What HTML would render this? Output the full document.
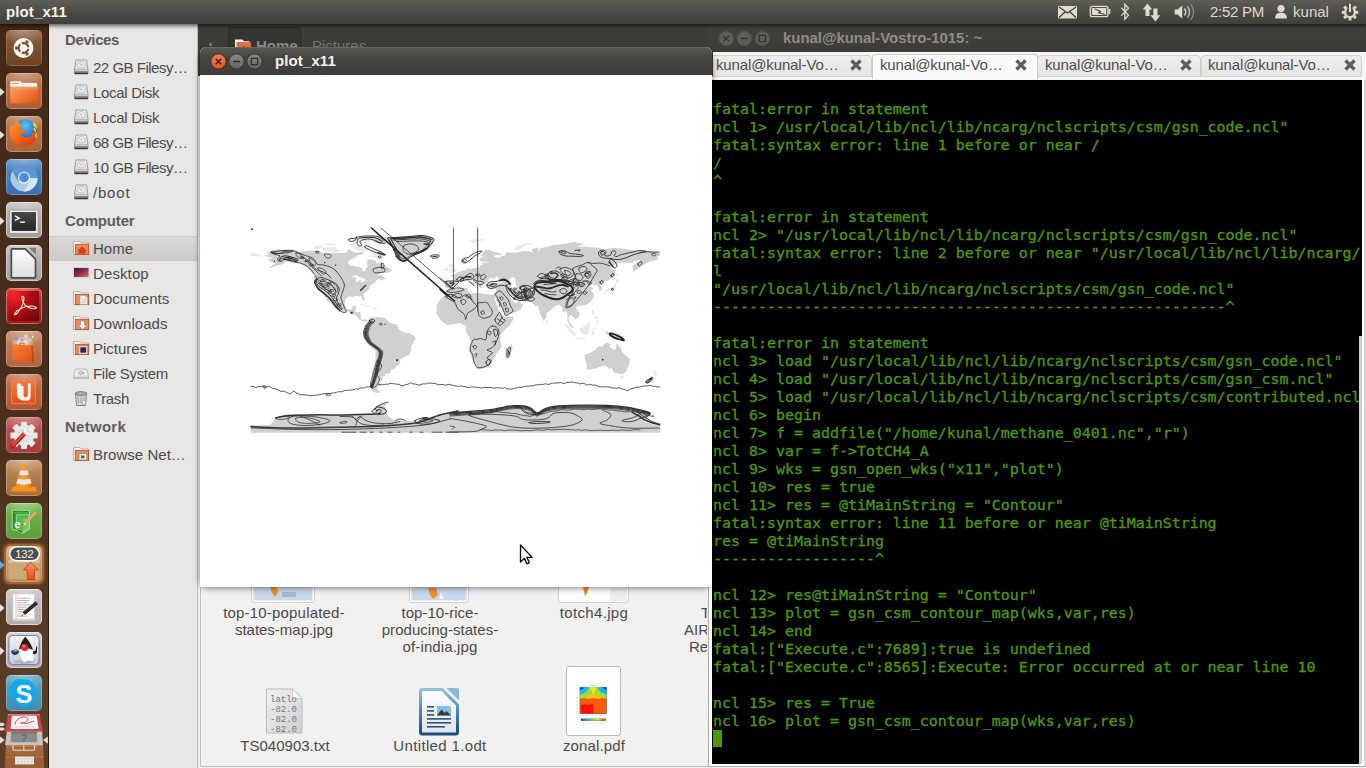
<!DOCTYPE html>
<html><head><meta charset="utf-8"><title>plot_x11</title>
<style>
html,body{margin:0;padding:0;width:1366px;height:768px;overflow:hidden;background:#3a2417;font-family:"Liberation Sans","DejaVu Sans",sans-serif;font-size:15px;}
div,span{box-sizing:border-box}
#desk{position:absolute;left:0;top:0;width:1366px;height:768px;background:#3c3b37}
/* panel */
#panel{position:absolute;left:0;top:0;width:1366px;height:24px;background:linear-gradient(#5e5d56,#4c4b45 50%,#403f3a);color:#dfdbd2;box-shadow:0 1px 4px 1px rgba(0,0,0,.6)}
#ptitle{position:absolute;left:6px;top:3px;font-weight:bold;font-size:15px;line-height:18px;color:#f5f3ee;letter-spacing:0px}
.ptx{position:absolute;top:3px;font-size:15px;line-height:18px;color:#dfdbd2}
/* launcher */
#launcher{position:absolute;left:0;top:24px;width:49px;height:744px;background:linear-gradient(#43291a,#4a2e1d 50%,#5e4029);border-right:1px solid #2f1c11}
.tile{position:absolute;left:6px;width:36px;height:36px;border-radius:5px;overflow:hidden}
.tile svg{position:absolute;left:0;top:0}
.arr{position:absolute;left:0;width:0;height:0;border-top:4px solid transparent;border-bottom:4px solid transparent;border-left:5px solid #e6e0da}
/* nautilus */
#naut{position:absolute;left:49px;top:24px;width:664px;height:744px;background:#f2f1f0}
#ntool{position:absolute;left:149px;top:0;width:515px;height:52px;background:linear-gradient(#3e3d39,#3a3935)}
#nside{position:absolute;left:0;top:0;width:149px;height:744px;background:#e8e7e6;border-right:1px solid #bdbab6}
#nmain{position:absolute;left:151px;top:52px;width:513px;height:691px;background:#f2f1f0;border:1px solid #c4c1bd}
.sbh{position:absolute;left:16px;font-weight:bold;font-size:15px;line-height:20px;color:#5c5c5c}
.sbi{position:absolute;left:44px;font-size:15px;line-height:20px;color:#4a4a4a;white-space:nowrap}
.sbic{position:absolute;left:23px;width:18px;height:18px}
.sbsel{position:absolute;left:0;width:148px;height:25px;background:linear-gradient(#dcdad8,#cdcac7);border-top:1px solid #cfcdca;border-bottom:1px solid #c9c6c3}
.flab{position:absolute;font-size:15px;line-height:17px;color:#4a4a4a;text-align:center;white-space:nowrap}
/* plot window */
#plotshadow{position:absolute;left:202px;top:52px;width:508px;height:532px;border-radius:6px;box-shadow:0 2px 6px 2px rgba(0,0,0,.5);background:transparent}
#plotwin{position:absolute;left:200px;top:47px;width:512px;height:540px;background:#fff;border-radius:6px 6px 0 0;overflow:hidden}
#plottitle{position:absolute;left:0;top:0;width:512px;height:28px;background:linear-gradient(#5a5953,#45443f 40%,#3d3c38);box-shadow:inset 0 1px 0 #6a6963}
#plotbody{position:absolute;left:0;top:28px;width:512px;height:512px;background:#fff}
.wt{position:absolute;top:5px;font-weight:bold;font-size:15px;line-height:18px;white-space:nowrap}
#plottitle .wt{left:75px;color:#f5f3ee}
/* terminal */
#term{position:absolute;left:707px;top:24px;width:659px;height:744px}
#termtitle{position:absolute;left:0;top:0;width:659px;height:28px;background:linear-gradient(#42413d,#3c3b37);border-radius:6px 0 0 0}
#termtitle .wt{left:76px;color:#8f8c85;top:5px}
#tabs{position:absolute;left:6px;top:28px;width:653px;height:28px;background:#f7f6f5;overflow:hidden}
#termbody{position:absolute;left:5px;top:56px;width:650px;height:684px;background:#000;color:#4e9a06;font-family:"DejaVu Sans Mono","Liberation Mono",monospace;font-size:14.95px;-webkit-text-stroke:0.3px #4e9a06;padding:2px 0 0 1px;overflow:hidden;white-space:pre}
.tl{height:18px;line-height:18px;white-space:pre}
#cur{display:inline-block;width:9px;height:17px;background:#4e9a06;vertical-align:top;margin-top:0}
#tscroll{position:absolute;left:652px;top:312px;width:3px;height:428px;background:#d2cfcc}
#termframe{position:absolute;left:1px;top:52px;width:658px;height:691px;background:#fff;border:1px solid #aeaba7;border-right:2px solid #d8d5d2;box-shadow:0 1px 0 #efeeec}
.tab{position:absolute;top:3px;height:22px;font-size:15px;line-height:20px;color:#4c4c4c;white-space:nowrap}

</style></head><body>
<div id="desk"></div>
<!-- nautilus -->
<div id="naut">
 <div id="ntool"></div>
 <div id="nside"><div class="sbh" style="top:6px;letter-spacing:-0.386px">Devices</div><div class="sbi" style="top:34px;letter-spacing:-0.489px">22 GB Filesy…</div><div class="sbic" style="top:34px"><svg width="18" height="18" viewBox="0 0 18 18"><defs><linearGradient id="dk" x1="0" y1="0" x2="0" y2="1"><stop offset="0" stop-color="#f6f6f6"/><stop offset="1" stop-color="#cfcfcf"/></linearGradient></defs>
<path d="M4 2 h10.500 l1.500 9.500 v4 q0 .6-.6 .6 h-12.300 q-.6 0-.6-.6 v-4z" fill="url(#dk)" stroke="#8a8a8a" stroke-width=".8"/>
<path d="M2.700 11.800 h13.100" stroke="#a0a0a0" stroke-width=".7"/><ellipse cx="9.200" cy="6.700" rx="4.200" ry="3.200" fill="#e9e9e9" stroke="#bcbcbc" stroke-width=".7"/><circle cx="9.200" cy="6.700" r=".9" fill="#c4c4c4"/><path d="M5.500 4 l3 2" stroke="#bdbdbd" stroke-width=".7"/>
<rect x="2.600" y="14.300" width="13.300" height="1.700" fill="#3a3a3a"/><rect x="2.600" y="13" width="13.300" height="1.300" fill="#8e8e8e"/></svg></div><div class="sbi" style="top:59px;letter-spacing:-0.311px">Local Disk</div><div class="sbic" style="top:59px"><svg width="18" height="18" viewBox="0 0 18 18"><defs><linearGradient id="dk" x1="0" y1="0" x2="0" y2="1"><stop offset="0" stop-color="#f6f6f6"/><stop offset="1" stop-color="#cfcfcf"/></linearGradient></defs>
<path d="M4 2 h10.500 l1.500 9.500 v4 q0 .6-.6 .6 h-12.300 q-.6 0-.6-.6 v-4z" fill="url(#dk)" stroke="#8a8a8a" stroke-width=".8"/>
<path d="M2.700 11.800 h13.100" stroke="#a0a0a0" stroke-width=".7"/><ellipse cx="9.200" cy="6.700" rx="4.200" ry="3.200" fill="#e9e9e9" stroke="#bcbcbc" stroke-width=".7"/><circle cx="9.200" cy="6.700" r=".9" fill="#c4c4c4"/><path d="M5.500 4 l3 2" stroke="#bdbdbd" stroke-width=".7"/>
<rect x="2.600" y="14.300" width="13.300" height="1.700" fill="#3a3a3a"/><rect x="2.600" y="13" width="13.300" height="1.300" fill="#8e8e8e"/></svg></div><div class="sbi" style="top:84px;letter-spacing:-0.311px">Local Disk</div><div class="sbic" style="top:84px"><svg width="18" height="18" viewBox="0 0 18 18"><defs><linearGradient id="dk" x1="0" y1="0" x2="0" y2="1"><stop offset="0" stop-color="#f6f6f6"/><stop offset="1" stop-color="#cfcfcf"/></linearGradient></defs>
<path d="M4 2 h10.500 l1.500 9.500 v4 q0 .6-.6 .6 h-12.300 q-.6 0-.6-.6 v-4z" fill="url(#dk)" stroke="#8a8a8a" stroke-width=".8"/>
<path d="M2.700 11.800 h13.100" stroke="#a0a0a0" stroke-width=".7"/><ellipse cx="9.200" cy="6.700" rx="4.200" ry="3.200" fill="#e9e9e9" stroke="#bcbcbc" stroke-width=".7"/><circle cx="9.200" cy="6.700" r=".9" fill="#c4c4c4"/><path d="M5.500 4 l3 2" stroke="#bdbdbd" stroke-width=".7"/>
<rect x="2.600" y="14.300" width="13.300" height="1.700" fill="#3a3a3a"/><rect x="2.600" y="13" width="13.300" height="1.300" fill="#8e8e8e"/></svg></div><div class="sbi" style="top:109px;letter-spacing:-0.489px">68 GB Filesy…</div><div class="sbic" style="top:109px"><svg width="18" height="18" viewBox="0 0 18 18"><defs><linearGradient id="dk" x1="0" y1="0" x2="0" y2="1"><stop offset="0" stop-color="#f6f6f6"/><stop offset="1" stop-color="#cfcfcf"/></linearGradient></defs>
<path d="M4 2 h10.500 l1.500 9.500 v4 q0 .6-.6 .6 h-12.300 q-.6 0-.6-.6 v-4z" fill="url(#dk)" stroke="#8a8a8a" stroke-width=".8"/>
<path d="M2.700 11.800 h13.100" stroke="#a0a0a0" stroke-width=".7"/><ellipse cx="9.200" cy="6.700" rx="4.200" ry="3.200" fill="#e9e9e9" stroke="#bcbcbc" stroke-width=".7"/><circle cx="9.200" cy="6.700" r=".9" fill="#c4c4c4"/><path d="M5.500 4 l3 2" stroke="#bdbdbd" stroke-width=".7"/>
<rect x="2.600" y="14.300" width="13.300" height="1.700" fill="#3a3a3a"/><rect x="2.600" y="13" width="13.300" height="1.300" fill="#8e8e8e"/></svg></div><div class="sbi" style="top:134px;letter-spacing:-0.489px">10 GB Filesy…</div><div class="sbic" style="top:134px"><svg width="18" height="18" viewBox="0 0 18 18"><defs><linearGradient id="dk" x1="0" y1="0" x2="0" y2="1"><stop offset="0" stop-color="#f6f6f6"/><stop offset="1" stop-color="#cfcfcf"/></linearGradient></defs>
<path d="M4 2 h10.500 l1.500 9.500 v4 q0 .6-.6 .6 h-12.300 q-.6 0-.6-.6 v-4z" fill="url(#dk)" stroke="#8a8a8a" stroke-width=".8"/>
<path d="M2.700 11.800 h13.100" stroke="#a0a0a0" stroke-width=".7"/><ellipse cx="9.200" cy="6.700" rx="4.200" ry="3.200" fill="#e9e9e9" stroke="#bcbcbc" stroke-width=".7"/><circle cx="9.200" cy="6.700" r=".9" fill="#c4c4c4"/><path d="M5.500 4 l3 2" stroke="#bdbdbd" stroke-width=".7"/>
<rect x="2.600" y="14.300" width="13.300" height="1.700" fill="#3a3a3a"/><rect x="2.600" y="13" width="13.300" height="1.300" fill="#8e8e8e"/></svg></div><div class="sbi" style="top:159px;letter-spacing:0.806px">/boot</div><div class="sbic" style="top:159px"><svg width="18" height="18" viewBox="0 0 18 18"><defs><linearGradient id="dk" x1="0" y1="0" x2="0" y2="1"><stop offset="0" stop-color="#f6f6f6"/><stop offset="1" stop-color="#cfcfcf"/></linearGradient></defs>
<path d="M4 2 h10.500 l1.500 9.500 v4 q0 .6-.6 .6 h-12.300 q-.6 0-.6-.6 v-4z" fill="url(#dk)" stroke="#8a8a8a" stroke-width=".8"/>
<path d="M2.700 11.800 h13.100" stroke="#a0a0a0" stroke-width=".7"/><ellipse cx="9.200" cy="6.700" rx="4.200" ry="3.200" fill="#e9e9e9" stroke="#bcbcbc" stroke-width=".7"/><circle cx="9.200" cy="6.700" r=".9" fill="#c4c4c4"/><path d="M5.500 4 l3 2" stroke="#bdbdbd" stroke-width=".7"/>
<rect x="2.600" y="14.300" width="13.300" height="1.700" fill="#3a3a3a"/><rect x="2.600" y="13" width="13.300" height="1.300" fill="#8e8e8e"/></svg></div><div class="sbh" style="top:187px;letter-spacing:-0.164px">Computer</div><div class="sbsel" style="top:212px"></div><div class="sbi" style="top:215px;letter-spacing:0.008px">Home</div><div class="sbic" style="top:215px"><svg width="18" height="18" viewBox="0 0 18 18"><path d="M1.500 2.500 h6.500 l1.200 1.500 h7.300 v11.500 h-15z" fill="#f7f5f3" stroke="#a8a4a0" stroke-width=".8"/>
<rect x="3.300" y="5.300" width="13.400" height="10.400" fill="#e8703a" stroke="#b8481a" stroke-width=".7"/><rect x="4" y="6" width="12" height="9" fill="#f2a070" opacity=".55"/><path d="M10 7.500 l4.800 4.200 h-1.300 v3 h-7 v-3 h-1.300z" fill="#c8441c"/></svg></div><div class="sbi" style="top:240px;letter-spacing:0.111px">Desktop</div><div class="sbic" style="top:240px"><svg width="18" height="18" viewBox="0 0 18 18"><defs><linearGradient id="dsk" x1="0" y1="0" x2="1" y2="1"><stop offset="0" stop-color="#3a1438"/><stop offset=".5" stop-color="#8a2a5a"/><stop offset="1" stop-color="#e0785a"/></linearGradient></defs><rect x="1.500" y="3.500" width="15.500" height="10" fill="url(#dsk)" stroke="#d8d4d0" stroke-width="1"/></svg></div><div class="sbi" style="top:265px;letter-spacing:0.050px">Documents</div><div class="sbic" style="top:265px"><svg width="18" height="18" viewBox="0 0 18 18"><path d="M1.500 2.500 h6.500 l1.200 1.500 h7.300 v11.500 h-15z" fill="#f7f5f3" stroke="#a8a4a0" stroke-width=".8"/>
<rect x="3.300" y="5.300" width="13.400" height="10.400" fill="#e8703a" stroke="#b8481a" stroke-width=".7"/><rect x="4" y="6" width="12" height="9" fill="#f2a070" opacity=".55"/><path d="M8 6.500 h5 l2.500 2.500 v6.500 h-7.500z" fill="#f6f6f6" stroke="#9a9a9a" stroke-width=".6"/><path d="M9.500 10 h4.500 M9.500 11.800 h4.500 M9.500 13.600 h4.500" stroke="#aaa" stroke-width=".6"/></svg></div><div class="sbi" style="top:290px;letter-spacing:0.036px">Downloads</div><div class="sbic" style="top:290px"><svg width="18" height="18" viewBox="0 0 18 18"><path d="M1.500 2.500 h6.500 l1.200 1.500 h7.300 v11.500 h-15z" fill="#f7f5f3" stroke="#a8a4a0" stroke-width=".8"/>
<rect x="3.300" y="5.300" width="13.400" height="10.400" fill="#e8703a" stroke="#b8481a" stroke-width=".7"/><rect x="4" y="6" width="12" height="9" fill="#f2a070" opacity=".55"/><path d="M8.500 7 h4 v4 h2.500 l-4.500 4.500 l-4.500-4.500 h2.500z" fill="#f4f4f4" stroke="#8a8a8a" stroke-width=".6"/></svg></div><div class="sbi" style="top:315px;letter-spacing:-0.029px">Pictures</div><div class="sbic" style="top:315px"><svg width="18" height="18" viewBox="0 0 18 18"><path d="M1.500 2.500 h6.500 l1.200 1.500 h7.300 v11.500 h-15z" fill="#f7f5f3" stroke="#a8a4a0" stroke-width=".8"/>
<rect x="3.300" y="5.300" width="13.400" height="10.400" fill="#e8703a" stroke="#b8481a" stroke-width=".7"/><rect x="4" y="6" width="12" height="9" fill="#f2a070" opacity=".55"/><rect x="7" y="7" width="8.500" height="8" fill="#f4f4f4" stroke="#8a8a8a" stroke-width=".6"/><rect x="8.300" y="8.300" width="5.900" height="5.400" fill="#3a2050"/></svg></div><div class="sbi" style="top:340px;letter-spacing:-0.310px">File System</div><div class="sbic" style="top:340px"><svg width="18" height="18" viewBox="0 0 18 18"><path d="M3.500 5 h11 l2 7 v2.500 h-15 v-2.500z" fill="#ececec" stroke="#b0b0b0" stroke-width=".8"/><path d="M1.800 12.200 h14.400" stroke="#c4c4c4" stroke-width=".7"/><path d="M6 9 l3-2 v1.300 h3 v1.400 h-3 v1.300z" fill="none" stroke="#8a8a8a" stroke-width=".6"/><rect x="2" y="13.200" width="14" height="1.300" fill="#bdbdbd"/></svg></div><div class="sbi" style="top:365px;letter-spacing:-0.373px">Trash</div><div class="sbic" style="top:365px"><svg width="18" height="18" viewBox="0 0 18 18"><path d="M3.500 4.500 h11 l-1 12 h-9z" fill="#d4d4d0" stroke="#6e6e6a" stroke-width=".8"/><ellipse cx="9" cy="4.500" rx="5.800" ry="1.800" fill="#b0b0ac" stroke="#5e5e5a" stroke-width=".8"/><path d="M6 7.500 l.5 7 M9 7.500 v7 M12 7.500 l-.5 7" stroke="#8e8e8a" stroke-width=".7"/><path d="M11 11 l3 1.500 l-1 3.500 l-3-1z" fill="#f0f0ee" stroke="#8a8a86" stroke-width=".5"/></svg></div><div class="sbh" style="top:393px;letter-spacing:0.260px">Network</div><div class="sbi" style="top:421px;letter-spacing:0.034px">Browse Net…</div><div class="sbic" style="top:421px"><svg width="18" height="18" viewBox="0 0 18 18"><path d="M1.500 2.500 h6.500 l1.200 1.500 h7.300 v11.500 h-15z" fill="#f7f5f3" stroke="#a8a4a0" stroke-width=".8"/>
<rect x="3.300" y="5.300" width="13.400" height="10.400" fill="#e8703a" stroke="#b8481a" stroke-width=".7"/><rect x="4" y="6" width="12" height="9" fill="#f2a070" opacity=".55"/><rect x="7" y="8.500" width="7.500" height="6.500" fill="#f4f4f4" stroke="#7a7a7a" stroke-width=".6"/><rect x="9" y="10.500" width="3.500" height="2.800" fill="#5a5a5a"/></svg></div></div>
 <div id="nmain"><div class="flab" style="left:-17px;width:200px;top:527px;letter-spacing:0.185px">top-10-populated-</div><div class="flab" style="left:-17px;width:200px;top:544px;letter-spacing:-0.016px">states-map.jpg</div><div class="flab" style="left:139px;width:200px;top:527px;letter-spacing:0.030px">top-10-rice-</div><div class="flab" style="left:139px;width:200px;top:544px;letter-spacing:0.039px">producing-states-</div><div class="flab" style="left:139px;width:200px;top:561px;letter-spacing:0.119px">of-india.jpg</div><div class="flab" style="left:293px;width:200px;top:527px;letter-spacing:0.346px">totch4.jpg</div><div style="position:absolute;left:459px;top:523px;width:47px;height:70px;overflow:hidden"><div class="flab" style="left:41px;width:60px;top:4px;text-align:left">T</div><div class="flab" style="left:24px;width:60px;top:21px;text-align:left">AIR</div><div class="flab" style="left:29px;width:60px;top:38px;text-align:left">Re</div></div><div class="flab" style="left:-16px;width:200px;top:660px;letter-spacing:0.007px">TS040903.txt</div><div class="flab" style="left:139px;width:200px;top:660px;letter-spacing:0.348px">Untitled 1.odt</div><div class="flab" style="left:293px;width:200px;top:660px;letter-spacing:0.137px">zonal.pdf</div><svg style="position:absolute;left:-1px;top:-1px" width="513" height="690" viewBox="200 76 513 690">
<!-- thumbnails bottom parts -->
<rect x="252.500" y="560" width="61" height="41.500" rx="1.500" fill="#c9d9ec" stroke="#fff" stroke-width="2"/><rect x="251.500" y="559" width="63" height="43.500" rx="2.500" fill="none" stroke="#c8c4c0" stroke-width=".8"/>
<path d="M270 587 l7 0 l1 5 l-3 5 l-3-4z" fill="#f0902a"/><rect x="282" y="592" width="14" height="5" fill="#a9b8d0"/>
<rect x="410.500" y="560" width="57" height="41.500" rx="1.500" fill="#c9d9ec" stroke="#fff" stroke-width="2"/><rect x="409.500" y="559" width="59" height="43.500" rx="2.500" fill="none" stroke="#c8c4c0" stroke-width=".8"/>
<path d="M428 588 l8 0 l2 7 l-5 4 l-3-4z" fill="#f0902a"/><path d="M441 592 l3 7 h-5z" fill="#f4f4f4"/>
<rect x="559.500" y="560" width="68" height="41.500" rx="1.500" fill="#fdfdfd" stroke="#fff" stroke-width="2"/><rect x="610" y="588" width="17" height="13" fill="#ececec"/><rect x="558.500" y="559" width="70" height="43.500" rx="2.500" fill="none" stroke="#c8c4c0" stroke-width=".8"/>
<path d="M583 587 h6 l-2 6 l-2 3z" fill="#f08a1c"/>
<!-- txt icon -->
<defs><linearGradient id="txg" x1="0" y1="0" x2="1" y2="1"><stop offset="0" stop-color="#f1f1f1"/><stop offset="1" stop-color="#d0d0d0"/></linearGradient></defs>
<path d="M266.500 689 h26 l9.500 9.500 v34.500 h-35.500z" fill="url(#txg)" stroke="#b0b0b0" stroke-width=".8"/><path d="M292.500 689 v9.500 h9.500z" fill="#f8f8f8" stroke="#b8b8b8" stroke-width=".6"/>
<g font-family="Liberation Mono, monospace" font-size="9" fill="#777"><text x="270" y="702">latlo</text><text x="270" y="712">-82.0</text><text x="270" y="722">-82.0</text><text x="270" y="732">-82.0</text></g>
<!-- odt icon -->
<defs><linearGradient id="odg" x1="0" y1="0" x2="0" y2="1"><stop offset="0" stop-color="#ffffff"/><stop offset="1" stop-color="#dfe3e8"/></linearGradient>
<linearGradient id="odb" x1="0" y1="0" x2="0" y2="1"><stop offset="0" stop-color="#8fc0dc"/><stop offset=".5" stop-color="#4a86b8"/><stop offset="1" stop-color="#1d4a7c"/></linearGradient></defs>
<path d="M422.500 689.500 h19.500 l15.500 15.500 v27 q0 2-2 2 h-33 q-2 0-2-2 v-40.500 q0-2 2-2z" fill="url(#odg)" stroke="url(#odb)" stroke-width="3" stroke-linejoin="round"/>
<path d="M446.500 688 h10.500 q2 0 2 2 v10.500z" fill="#86bcd2"/>
<g stroke="#1c4878" stroke-width="1.500"><line x1="427" y1="706.800" x2="434" y2="706.800"/><line x1="427" y1="710.900" x2="434" y2="710.900"/><line x1="427" y1="714.900" x2="434" y2="714.900"/><line x1="427" y1="718.900" x2="451" y2="718.900"/><line x1="427" y1="722.800" x2="451" y2="722.800"/><line x1="427" y1="726.800" x2="445" y2="726.800"/></g>
<rect x="437" y="706" width="14" height="9.500" fill="#7ec0ee"/><path d="M437 715.500 l4.500-6 l3 3.500 l2-2 l4.500 4.500z" fill="#3a3a3c"/><path d="M448.500 706 h2.500 v2.500z" fill="#f4d03a"/>
<!-- pdf thumb -->
<rect x="566.500" y="666.500" width="54" height="69" rx="2.500" fill="#fff" stroke="#bfbbb6" stroke-width="1"/>
<rect x="580" y="687.200" width="26.500" height="26.400" fill="#ff5a08" stroke="#333" stroke-width=".5"/>
<path d="M580 687.200 h26.500 v11.500 l-7-1.500 l-6.250 1 l-6.250-1 l-7 1.500z" fill="#9ade3a"/>
<path d="M580 687.200 h9.500 l-3.500 5 l-6 2.500z" fill="#18b8f0"/><path d="M606.500 687.200 h-9.500 l3.500 5 l6 2.500z" fill="#18b8f0"/>
<path d="M580 687.200 h5 l-5 3.500z" fill="#1a4ae0"/><path d="M606.500 687.200 h-5 l5 3.500z" fill="#1a4ae0"/>
<path d="M589.500 687.200 h7.500 l-3.750 7z" fill="#f4e81a"/><path d="M584 697.500 l9.250-5 l9.250 5 l-3.500 1.500 l-5.750-1 l-5.750 1z" fill="#ffc21a"/>
<path d="M581 705.300 l3-1 l4 .8 l4-.8 l1.300 .5 v8.800 h-12.300z" fill="#f4100c"/>
<defs><linearGradient id="cbr" x1="0" y1="0" x2="1" y2="0"><stop offset="0" stop-color="#1a30d0"/><stop offset=".25" stop-color="#18c0e8"/><stop offset=".5" stop-color="#7ae03a"/><stop offset=".7" stop-color="#f4e01a"/><stop offset=".85" stop-color="#ff7a10"/><stop offset="1" stop-color="#e0100c"/></linearGradient></defs>
<rect x="581" y="718.800" width="24.600" height="2" fill="url(#cbr)" stroke="#444" stroke-width=".3"/>
<path d="M582 723 h22" stroke="#bbb" stroke-width=".6" stroke-dasharray="2 2.500"/><path d="M582 715.500 h22" stroke="#bbb" stroke-width=".6" stroke-dasharray="1.500 3"/>
<line x1="577" y1="697" x2="577" y2="712" stroke="#bbb" stroke-width=".6" stroke-dasharray="2 1.500"/>
<path d="M590 685.500 h6" stroke="#aaa" stroke-width=".5"/>
</svg></div>
</div>
<svg style="position:absolute;left:198px;top:24px" width="515" height="28" viewBox="198 24 515 28">
<path d="M211.500 41.800 l-2.800 2.700 l2.800 2.700z" fill="#85847e"/>
<path d="M228.500 52 v-22 q0-2.500 2.500-2.500 h67.500 q2.500 0 2.500 2.500 v22" fill="#353430" stroke="#2b2a27" stroke-width="1"/>
<path d="M235 39.500 h7.500 l1.500 1.800 h5.500 v10.700 h-14.500z" fill="#f4f2ef"/><rect x="237" y="42.500" width="14" height="9.500" fill="#e8703a" stroke="#c8501c" stroke-width=".6"/><path d="M244 45.500 l5 4.500 v2 h-10 v-2z" fill="#c03a14"/>
<text x="256" y="51" font-family="Liberation Sans, sans-serif" font-weight="bold" font-size="15" fill="#8d8b85">Home</text>
<text x="312" y="51" font-family="Liberation Sans, sans-serif" font-size="15" fill="#77756f">Pictures</text>
</svg>
<!-- terminal -->
<div id="term">
 <div id="termframe"></div>
 <div id="termtitle"><svg style="position:absolute;left:0;top:0" width="80" height="28" viewBox="707 24 80 28">
<circle cx="726.200" cy="38.500" r="7.400" fill="#5d5c57" stroke="#4b4a46" stroke-width=".8"/>
<path d="M723.500 35.800 l5.400 5.400 M728.900 35.800 l-5.400 5.400" stroke="#2f2e2b" stroke-width="1.200"/>
<circle cx="744.300" cy="38.500" r="7.400" fill="#5d5c57" stroke="#4b4a46" stroke-width=".8"/>
<path d="M741 38.500 h6.600" stroke="#2f2e2b" stroke-width="1.200"/>
<circle cx="762.400" cy="38.500" r="7.400" fill="#5d5c57" stroke="#4b4a46" stroke-width=".8"/>
<rect x="759.300" y="35.400" width="6.200" height="6.200" fill="none" stroke="#2f2e2b" stroke-width="1.100"/>
</svg><span class="wt" style="letter-spacing:-0.059px">kunal@kunal-Vostro-1015: ~</span></div>
 <div id="tabs"><div style="position:absolute;left:-7px;width:166px;border-radius:4px 4px 0 0;background:linear-gradient(#efeeec,#e6e5e3);top:3px;height:22px;border:1px solid #d3d0cc;"></div><div class="tab" style="left:3px;letter-spacing:-0.130px">kunal@kunal-Vo…</div><svg style="position:absolute;left:136px;top:6px" width="14" height="14"><path d="M2.500 2.500 l9 9 M11.500 2.500 l-9 9" stroke="#5e5e5c" stroke-width="3.300"/></svg><div style="position:absolute;left:324px;width:164px;border-radius:4px 4px 0 0;background:linear-gradient(#efeeec,#e6e5e3);top:3px;height:22px;border:1px solid #d3d0cc;"></div><div class="tab" style="left:332px;letter-spacing:-0.130px">kunal@kunal-Vo…</div><svg style="position:absolute;left:466px;top:6px" width="14" height="14"><path d="M2.500 2.500 l9 9 M11.500 2.500 l-9 9" stroke="#5e5e5c" stroke-width="3.300"/></svg><div style="position:absolute;left:488px;width:161px;border-radius:4px 4px 0 0;background:linear-gradient(#efeeec,#e6e5e3);top:3px;height:22px;border:1px solid #d3d0cc;"></div><div class="tab" style="left:495px;letter-spacing:-0.130px">kunal@kunal-Vo…</div><svg style="position:absolute;left:630px;top:6px" width="14" height="14"><path d="M2.500 2.500 l9 9 M11.500 2.500 l-9 9" stroke="#5e5e5c" stroke-width="3.300"/></svg><div style="position:absolute;left:159px;width:166px;border-radius:4px 4px 0 0;background:#fafaf9;top:2px;height:25px;border:1px solid #cdc9c5;border-bottom:none;"></div><div class="tab" style="left:167px;letter-spacing:-0.130px">kunal@kunal-Vo…</div><svg style="position:absolute;left:301px;top:6px" width="14" height="14"><path d="M2.500 2.500 l9 9 M11.500 2.500 l-9 9" stroke="#5e5e5c" stroke-width="3.300"/></svg></div>
 <div id="termbody"><div class="tl">&nbsp;</div><div class="tl">fatal:error in statement</div><div class="tl">ncl 1&gt; /usr/local/lib/ncl/lib/ncarg/nclscripts/csm/gsn_code.ncl"</div><div class="tl">fatal:syntax error: line 1 before or near /</div><div class="tl">/</div><div class="tl">^</div><div class="tl">&nbsp;</div><div class="tl">fatal:error in statement</div><div class="tl">ncl 2&gt; "/usr/local/lib/ncl/lib/ncarg/nclscripts/csm/gsn_code.ncl"</div><div class="tl">fatal:syntax error: line 2 before or near "/usr/local/lib/ncl/lib/ncarg/</div><div class="tl">l</div><div class="tl">"/usr/local/lib/ncl/lib/ncarg/nclscripts/csm/gsn_code.ncl"</div><div class="tl">---------------------------------------------------------^</div><div class="tl">&nbsp;</div><div class="tl">fatal:error in statement</div><div class="tl">ncl 3&gt; load "/usr/local/lib/ncl/lib/ncarg/nclscripts/csm/gsn_code.ncl"</div><div class="tl">ncl 4&gt; load "/usr/local/lib/ncl/lib/ncarg/nclscripts/csm/gsn_csm.ncl"</div><div class="tl">ncl 5&gt; load "/usr/local/lib/ncl/lib/ncarg/nclscripts/csm/contributed.ncl</div><div class="tl">ncl 6&gt; begin</div><div class="tl">ncl 7&gt; f = addfile("/home/kunal/methane_0401.nc","r")</div><div class="tl">ncl 8&gt; var = f-&gt;TotCH4_A</div><div class="tl">ncl 9&gt; wks = gsn_open_wks("x11","plot")</div><div class="tl">ncl 10&gt; res = true</div><div class="tl">ncl 11&gt; res = @tiMainString = "Contour"</div><div class="tl">fatal:syntax error: line 11 before or near @tiMainString</div><div class="tl">res = @tiMainString</div><div class="tl">------------------^</div><div class="tl">&nbsp;</div><div class="tl">ncl 12&gt; res@tiMainString = "Contour"</div><div class="tl">ncl 13&gt; plot = gsn_csm_contour_map(wks,var,res)</div><div class="tl">ncl 14&gt; end</div><div class="tl">fatal:["Execute.c":7689]:true is undefined</div><div class="tl">fatal:["Execute.c":8565]:Execute: Error occurred at or near line 10</div><div class="tl">&nbsp;</div><div class="tl">ncl 15&gt; res = True</div><div class="tl">ncl 16&gt; plot = gsn_csm_contour_map(wks,var,res)</div><div class="tl"><span id="cur"></span></div></div>
 <div id="tscroll"></div>
</div>
<!-- plot window -->
<div id="plotshadow"></div>
<div id="plotwin">
 <div id="plottitle"><span class="wb close"></span><span class="wb min"></span><span class="wb max"></span><svg style="position:absolute;left:0;top:0" width="80" height="28" viewBox="200 47 80 28">
<defs><linearGradient id="cb" x1="0" y1="0" x2="0" y2="1"><stop offset="0" stop-color="#f4825a"/><stop offset="1" stop-color="#e4501e"/></linearGradient>
<linearGradient id="gb" x1="0" y1="0" x2="0" y2="1"><stop offset="0" stop-color="#8a8983"/><stop offset="1" stop-color="#64635e"/></linearGradient></defs>
<circle cx="218.500" cy="61.500" r="7.600" fill="url(#cb)" stroke="#33322e" stroke-width=".9"/>
<path d="M215.700 58.700 l5.600 5.600 M221.300 58.700 l-5.600 5.600" stroke="#3a1a10" stroke-width="1.300"/>
<circle cx="236.500" cy="61.500" r="7.600" fill="url(#gb)" stroke="#33322e" stroke-width=".9"/>
<path d="M233 61.500 h7" stroke="#2e2d2a" stroke-width="1.300"/>
<circle cx="254.500" cy="61.500" r="7.600" fill="url(#gb)" stroke="#33322e" stroke-width=".9"/>
<rect x="251.300" y="58.300" width="6.400" height="6.400" fill="none" stroke="#2e2d2a" stroke-width="1.200"/>
</svg><span class="wt" style="letter-spacing:0.111px">plot_x11</span></div>
 <div id="plotbody"></div>
</div>
<svg id="map" width="1366" height="768" viewBox="0 0 1366 768" style="position:absolute;left:0;top:0;pointer-events:none">
<path d="M364.6 246.5 L369.2 247.5 L378.2 250.1 L385.1 254.1 L382.8 258.0 L378.2 259.2 L372.6 256.9 L366.9 256.9 L372.6 254.6 L372.6 252.4 L366.9 250.7 L358.9 250.7 L354.4 249.0 L354.4 246.7 L360.1 246.7Z M322.6 250.1 L328.3 252.1 L336.2 252.4 L340.8 250.7 L337.3 249.0 L335.1 247.0 L328.3 247.3 L322.6 247.8Z M313.5 249.0 L318.0 249.3 L323.7 246.9 L321.4 245.8 L314.6 246.1Z M353.2 243.3 L364.6 243.5 L369.2 241.6 L376.0 239.9 L385.1 236.5 L370.3 235.7 L351.0 237.6 L355.5 241.0Z M346.4 245.0 L354.4 245.6 L364.6 245.2 L362.3 244.1 L351.0 243.3Z M322.6 244.8 L330.5 245.6 L336.2 245.0 L335.1 243.5 L327.1 243.3Z M579.3 328.3 L581.6 328.1 L583.9 326.4 L586.7 324.3 L588.4 322.1 L590.7 324.3 L589.3 326.6 L590.1 328.9 L589.0 330.9 L587.9 334.3 L585.6 334.5 L582.5 333.7 L580.5 331.7 L579.3 329.7Z M563.8 323.8 L566.3 324.1 L569.5 326.9 L573.3 331.1 L575.9 333.4 L575.7 336.6 L574.2 336.5 L571.4 334.5 L569.5 331.7 L567.6 328.3 L564.6 325.5Z M575.0 337.7 L578.8 337.4 L581.6 337.4 L585.6 338.7 L585.4 339.7 L578.2 338.8 L575.4 337.9Z M591.3 336.2 L592.2 333.4 L591.6 330.0 L593.0 328.6 L597.5 328.3 L595.2 329.5 L592.4 329.7 L593.3 331.5 L595.6 331.1 L594.1 332.3 L595.0 335.1 L593.5 335.2 L593.0 333.4 L592.3 336.2Z M592.4 309.0 L594.3 309.3 L593.5 312.4 L596.4 315.3 L593.0 314.4 L591.8 311.9Z M594.1 322.1 L599.2 319.8 L599.0 322.6 L597.5 323.4 L595.8 321.5Z M594.1 316.6 L596.9 315.8 L598.1 317.5 L595.8 319.2 L594.4 318.7Z M604.2 291.5 L608.9 292.0 L614.6 290.1 L616.6 285.8 L616.0 283.1 L614.6 284.1 L614.0 286.7 L610.9 288.1 L610.0 289.5 L606.0 289.8Z M614.8 282.9 L618.2 282.4 L620.8 280.8 L616.6 278.5 L616.1 280.9Z M603.0 292.3 L605.2 291.9 L604.7 294.5 L603.4 294.6Z M616.8 268.8 L618.0 271.1 L618.5 274.5 L617.6 277.9 L616.8 275.8 L616.8 272.8Z M593.0 301.7 L593.9 302.2 L592.7 305.1 L591.9 303.9Z M468.0 240.5 L473.7 243.1 L479.4 241.3 L486.2 239.3 L475.9 239.0Z M514.6 249.5 L520.3 250.0 L521.4 247.3 L532.8 243.3 L530.5 242.7 L519.1 245.0 L514.6 247.8Z M449.3 273.3 L457.0 272.0 L457.4 270.3 L455.5 269.4 L453.8 267.7 L453.2 264.8 L451.5 263.6 L449.8 263.7 L448.7 266.0 L449.8 267.7 L452.1 268.8 L450.2 269.7 L449.8 271.4 L451.9 271.9Z M444.1 271.1 L448.3 270.8 L448.7 268.5 L447.0 267.4 L444.1 268.8Z M359.2 305.2 L362.3 303.8 L368.0 306.0 L371.2 307.1 L367.5 307.4 L366.9 306.5 L362.6 304.8Z M371.1 309.0 L373.1 307.4 L376.1 307.7 L377.8 308.9 L374.8 309.4Z M546.4 318.9 L548.4 321.5 L547.5 323.2 L546.4 323.2 L546.2 320.9Z M651.7 369.1 L654.9 371.4 L658.3 372.7 L656.6 374.8 L654.7 377.1 L654.1 374.8 L653.0 374.5 L654.1 372.5Z M619.9 376.2 L624.0 376.2 L623.6 379.0 L621.4 379.4 L620.2 377.9Z M251.0 252.0 L256.7 253.5 L262.4 255.2 L259.5 256.9 L255.5 256.0 L251.0 256.1Z M428.2 255.8 L430.5 257.5 L434.5 258.1 L439.6 256.7 L438.8 255.0 L435.1 255.0 L429.9 254.7Z" fill="#e9e9e9" stroke="none"/>
<path d="M264.6 255.7 L269.2 254.6 L266.9 252.4 L272.6 250.3 L277.6 249.2 L285.1 250.1 L295.3 251.0 L302.1 251.8 L310.1 250.4 L319.2 251.2 L324.8 252.9 L332.8 252.9 L339.6 252.9 L346.4 252.7 L348.7 249.0 L353.2 251.8 L357.8 252.9 L362.3 251.2 L363.5 254.1 L357.8 255.2 L355.5 257.5 L349.8 259.7 L348.1 263.1 L350.4 265.4 L356.7 266.5 L361.8 267.7 L362.3 270.5 L365.2 271.6 L365.7 268.2 L368.0 266.5 L366.9 263.7 L367.5 259.2 L372.6 259.7 L376.0 260.9 L376.5 263.4 L381.7 262.0 L382.8 264.3 L385.6 266.5 L390.2 268.8 L392.2 271.1 L389.0 272.2 L387.3 273.1 L380.5 273.1 L376.0 276.2 L381.7 274.5 L382.2 276.7 L386.2 277.9 L381.1 280.7 L379.4 279.0 L376.0 280.4 L375.4 282.4 L372.0 283.9 L369.7 286.4 L369.2 289.2 L366.3 291.5 L363.5 294.3 L364.6 299.4 L364.0 301.4 L362.3 299.4 L361.4 296.2 L358.9 296.3 L354.4 295.7 L353.2 296.9 L348.7 296.6 L345.3 298.8 L344.5 304.5 L346.4 308.5 L348.1 309.4 L351.5 309.0 L352.7 306.2 L356.7 305.6 L355.5 309.6 L355.0 311.9 L360.1 312.1 L360.9 316.4 L360.4 318.1 L362.3 319.8 L365.2 319.2 L367.7 320.4 L367.5 320.9 L366.3 321.5 L364.6 321.7 L362.9 320.9 L361.2 320.6 L358.4 318.7 L356.1 315.3 L351.5 314.1 L348.7 311.6 L345.3 312.1 L340.2 310.2 L335.6 307.3 L335.6 304.5 L331.7 301.1 L327.7 297.1 L327.1 294.5 L325.2 294.3 L328.3 298.8 L330.9 303.9 L327.9 301.7 L325.4 298.3 L323.9 295.7 L322.3 292.9 L318.6 290.9 L316.9 288.3 L314.6 284.3 L314.3 281.3 L314.6 277.6 L313.8 275.3 L316.1 276.2 L315.8 274.5 L311.2 272.2 L307.8 268.2 L304.4 265.4 L301.0 263.7 L296.4 262.0 L289.6 261.2 L285.1 262.0 L282.8 264.3 L277.1 265.4 L271.4 267.7 L268.6 268.0 L273.7 264.5 L276.0 263.4 L271.4 262.0 L268.0 260.3 L269.2 258.4 L272.6 256.9 L268.0 256.9Z M372.6 241.0 L378.2 238.8 L387.3 237.1 L404.4 236.2 L421.4 235.4 L432.8 237.1 L435.1 239.3 L432.8 243.9 L430.5 247.8 L427.1 250.1 L420.3 252.7 L413.5 255.5 L408.9 258.0 L406.1 262.0 L403.2 261.1 L399.3 259.2 L396.4 255.8 L394.1 251.8 L393.0 249.0 L389.6 244.4 L380.5 243.9 L374.8 242.7Z M367.5 320.9 L369.7 317.8 L373.7 316.4 L374.3 317.8 L378.2 317.0 L385.1 317.9 L387.3 320.4 L390.7 323.2 L396.4 324.3 L398.7 328.9 L401.0 331.1 L405.5 332.8 L410.1 333.4 L413.5 335.7 L415.7 338.5 L413.5 343.0 L411.2 345.9 L411.2 350.4 L408.9 354.9 L404.4 356.9 L400.4 359.5 L400.2 362.3 L396.4 366.8 L394.1 369.3 L390.7 369.7 L390.7 373.1 L385.1 374.2 L384.5 376.5 L381.7 376.5 L383.1 378.4 L381.1 381.0 L378.8 382.1 L380.9 384.4 L377.1 387.8 L377.7 390.1 L381.1 392.3 L376.0 392.9 L371.4 390.1 L369.7 385.5 L372.0 379.9 L371.8 373.1 L374.3 366.3 L375.4 358.3 L375.6 350.7 L369.2 345.9 L366.3 340.2 L363.1 335.7 L364.6 332.8 L363.7 331.1 L364.6 328.9 L366.3 327.2 L367.7 324.3Z M448.7 289.4 L454.4 290.1 L458.9 288.3 L466.9 287.8 L468.0 291.5 L472.5 293.4 L478.2 292.8 L483.9 294.1 L491.9 294.6 L494.5 298.3 L495.8 302.8 L497.9 307.3 L499.8 312.4 L504.6 316.4 L504.9 317.2 L513.4 316.6 L513.2 319.8 L509.5 325.5 L503.2 331.7 L500.4 335.7 L500.4 341.3 L501.7 347.0 L495.6 354.4 L495.6 357.2 L492.8 359.5 L491.9 362.9 L487.3 367.4 L483.9 368.5 L478.2 369.4 L476.3 368.5 L475.9 365.1 L472.5 360.0 L469.1 350.4 L470.8 343.6 L469.1 336.8 L465.7 331.1 L466.5 326.0 L463.5 325.1 L460.6 322.9 L453.2 324.3 L447.0 325.0 L440.7 320.4 L436.2 313.3 L437.0 307.3 L436.2 306.2 L440.7 298.8 L444.4 296.0 L444.9 292.6Z M511.5 343.6 L512.6 347.6 L509.5 358.1 L506.6 358.7 L504.9 354.9 L505.8 348.7 L509.8 346.2Z M445.3 288.1 L444.9 285.8 L445.5 281.0 L453.5 280.8 L454.1 277.9 L450.2 275.3 L453.7 274.8 L457.3 272.4 L460.0 271.1 L464.6 269.0 L464.9 265.4 L467.4 264.6 L466.9 267.7 L469.1 268.6 L471.4 268.8 L476.5 268.0 L479.4 267.3 L479.9 264.8 L482.8 265.2 L482.2 262.8 L487.3 262.5 L489.6 262.0 L483.9 261.8 L479.9 261.1 L479.9 258.6 L483.9 256.0 L480.5 255.4 L475.4 259.7 L474.8 262.0 L476.5 262.2 L474.2 265.4 L471.7 266.9 L470.0 267.1 L468.0 263.1 L464.6 264.0 L461.5 263.1 L461.2 259.7 L466.9 257.5 L471.4 253.5 L477.1 250.7 L484.7 249.4 L490.7 250.3 L493.0 251.5 L502.1 254.1 L500.9 255.2 L494.7 254.7 L494.7 256.9 L498.1 257.7 L500.9 256.7 L505.5 255.0 L505.5 252.6 L516.3 252.6 L524.2 251.0 L530.5 251.8 L533.3 252.6 L531.6 249.0 L537.9 247.5 L539.0 252.4 L539.6 248.4 L547.0 246.7 L554.3 245.0 L566.8 243.6 L573.7 241.9 L583.9 243.9 L577.1 247.0 L583.9 246.5 L590.7 247.3 L599.8 247.8 L603.2 249.5 L614.6 247.8 L625.9 249.0 L637.3 251.0 L648.6 250.7 L660.0 252.0 L660.0 256.1 L656.6 256.7 L658.9 259.3 L648.6 262.0 L640.7 266.5 L639.5 268.0 L633.5 272.0 L632.4 265.6 L640.7 260.3 L636.7 260.1 L631.6 262.8 L618.0 262.8 L609.1 267.9 L615.1 269.9 L616.0 271.1 L614.6 275.3 L609.4 280.1 L604.3 281.5 L602.6 283.5 L600.4 284.9 L602.4 288.1 L602.3 290.1 L599.2 290.9 L599.0 288.1 L597.3 286.9 L597.7 285.1 L593.2 285.8 L593.9 283.6 L589.6 285.6 L590.7 287.5 L594.7 287.8 L590.9 290.3 L593.9 294.0 L593.9 297.1 L590.7 301.7 L587.3 304.2 L581.0 305.9 L578.5 305.5 L575.7 307.9 L579.1 312.4 L579.7 316.4 L576.8 318.1 L574.6 320.1 L574.8 318.3 L572.2 316.2 L569.9 314.7 L568.3 318.1 L569.5 322.1 L573.1 326.6 L573.9 328.4 L570.6 326.8 L567.2 320.9 L567.6 316.4 L566.5 311.3 L562.6 311.9 L562.3 307.9 L559.5 304.5 L556.0 305.4 L553.8 307.1 L549.0 311.3 L546.6 312.7 L546.4 316.4 L545.6 318.4 L543.5 320.9 L542.2 318.7 L540.1 313.6 L538.2 307.9 L538.1 305.6 L535.0 306.4 L533.9 304.7 L532.0 302.0 L525.6 301.4 L520.6 301.0 L519.7 299.4 L514.0 298.4 L512.3 295.8 L510.0 296.0 L513.2 301.7 L514.1 302.6 L516.9 302.8 L519.5 300.3 L520.0 302.6 L523.4 304.5 L521.2 308.5 L518.0 310.7 L514.6 312.2 L506.6 315.5 L504.7 315.6 L504.0 312.4 L500.0 306.2 L495.3 298.3 L495.2 296.6 L494.5 298.3 L492.4 296.0 L492.2 294.6 L494.5 294.5 L496.1 290.9 L496.4 288.4 L492.4 289.0 L490.2 288.6 L486.7 288.1 L485.4 286.6 L485.9 284.3 L488.8 283.3 L495.3 282.4 L498.7 283.5 L502.6 283.0 L502.1 281.3 L497.9 279.2 L498.9 277.0 L495.3 277.6 L493.6 279.6 L491.9 277.6 L489.8 278.1 L487.9 280.7 L487.3 283.0 L485.0 283.8 L482.5 284.4 L481.4 285.2 L482.8 286.9 L481.4 288.6 L479.6 287.5 L477.4 284.1 L477.7 282.4 L472.5 279.6 L471.1 278.3 L469.5 278.7 L469.7 280.1 L473.1 282.4 L476.5 284.4 L474.8 284.1 L474.2 285.5 L473.7 286.9 L473.3 284.7 L469.7 283.0 L467.2 281.3 L465.5 279.7 L462.5 281.2 L459.1 281.0 L459.1 282.6 L455.8 284.7 L455.2 286.4 L453.2 288.3 L449.5 289.0 L448.3 288.1Z M604.3 330.9 L607.7 330.9 L608.9 333.7 L612.3 331.8 L615.7 332.9 L620.2 334.9 L623.1 336.8 L621.9 337.9 L623.6 339.1 L626.8 341.7 L622.5 341.3 L619.1 338.8 L617.4 340.4 L614.6 339.1 L612.3 339.5 L612.3 337.9 L608.9 335.1 L606.4 334.5 L605.5 333.2 L607.2 332.6Z M584.4 354.9 L585.2 359.5 L586.9 365.7 L586.2 368.9 L589.6 369.7 L595.8 368.4 L602.1 365.8 L604.6 365.7 L608.3 367.4 L609.7 369.6 L611.7 367.4 L612.3 370.3 L615.1 373.1 L619.1 373.4 L621.7 374.2 L625.9 372.3 L627.4 368.0 L629.9 362.3 L629.3 358.3 L625.3 354.9 L621.7 351.5 L620.8 347.0 L618.5 346.2 L617.4 342.2 L616.3 344.7 L615.7 349.6 L613.4 349.8 L609.4 347.0 L611.1 343.8 L606.0 342.8 L603.2 345.3 L602.1 347.0 L598.6 345.9 L595.8 349.6 L594.1 350.7 L590.7 352.7 L586.2 354.1Z M651.7 376.0 L653.5 377.4 L651.7 379.6 L649.2 382.1 L646.7 382.8 L644.7 381.9 L646.9 379.9 L650.1 377.6Z M251.0 425.5 L270.0 425.0 L276.0 418.0 L294.0 415.3 L340.0 415.0 L371.0 414.2 L377.0 413.8 L374.0 409.5 L378.0 405.8 L384.0 403.2 L388.0 402.3 L385.0 405.0 L386.5 410.0 L386.5 412.0 L388.0 416.0 L395.0 421.0 L406.0 421.3 L417.0 421.0 L430.0 417.0 L440.0 414.0 L450.0 412.5 L470.0 411.5 L490.0 409.7 L505.0 406.8 L514.5 405.6 L524.0 406.0 L530.6 408.0 L534.0 411.0 L537.0 413.0 L541.0 411.0 L546.8 408.0 L558.0 406.0 L571.0 405.3 L590.0 405.2 L611.0 405.6 L625.0 407.0 L635.5 408.9 L645.0 411.0 L650.0 413.0 L648.0 416.0 L643.5 421.8 L652.0 424.0 L660.0 426.6 L660.0 432.7 L251.0 432.7Z" fill="#d0d0d0" stroke="none"/>
<path d="M508.9 279.0 L513.4 277.0 L515.7 279.0 L515.7 283.5 L516.9 287.5 L512.9 288.1 L511.2 286.4 L511.7 283.5 L509.5 281.3Z M351.0 277.1 L355.5 275.0 L359.5 277.3 L364.6 278.4 L365.2 280.7 L368.6 280.4 L365.7 281.3 L361.2 282.4 L360.6 279.6 L356.1 282.6 L355.7 279.0 L357.8 277.9 L354.4 277.0Z M455.0 268.0 L457.0 258.0 L466.0 250.0 L478.0 247.0 L486.0 249.0 L480.0 256.0 L477.0 262.0 L476.0 268.0 L470.0 266.0 L466.0 270.0 L460.0 271.0Z" fill="#fff"/>
<g fill="none" stroke-linejoin="round" stroke-linecap="round"><path d="M371.4 228.0 L454.5 301.0" stroke="#222" stroke-width="1.6"/><path d="M381.0 228.0 L453.0 290.0" stroke="#333" stroke-width="0.8"/><path d="M453.5 228.0 L453.5 284.0" stroke="#555" stroke-width="0.9"/><path d="M477.6 228.0 L477.6 311.0" stroke="#444" stroke-width="0.9"/><path d="M251 228.5 h1.6 v1.6 h-1.600z" fill="#111" stroke="none"/><path d="M271.0 252.0 C271.9 251.9 277.2 253.8 279.4 253.7 C281.6 253.6 281.6 252.1 284.0 251.7 C286.4 251.2 291.5 250.8 294.0 251.0 C296.5 251.2 297.0 252.2 299.0 253.0 C301.0 253.8 303.5 254.8 305.8 255.6 C308.1 256.4 311.0 257.0 312.6 258.0 C314.2 259.0 314.7 260.4 315.5 261.5 C316.3 262.6 316.2 263.8 317.5 264.4 C318.8 265.0 321.1 264.5 323.4 265.0 C325.6 265.5 328.9 266.3 331.0 267.3 C333.1 268.3 334.5 269.6 336.0 271.0 C337.5 272.4 338.8 274.3 340.0 276.0 C341.2 277.7 342.3 279.5 343.0 281.0 C343.7 282.5 344.4 283.4 344.4 285.0 C344.4 286.6 343.6 288.9 343.0 290.8 C342.4 292.7 341.2 294.8 341.0 296.6 C340.8 298.4 341.4 299.5 342.0 301.5 C342.6 303.5 344.1 306.7 344.8 308.4 C345.5 310.1 346.6 311.1 346.3 311.8 C346.0 312.5 344.4 312.9 343.0 312.3 C341.6 311.7 339.7 310.2 338.0 308.4 C336.3 306.6 334.8 303.6 333.0 301.5 C331.2 299.4 329.2 297.5 327.3 295.7 C325.4 293.9 323.2 292.4 321.4 290.8 C319.6 289.2 317.6 287.5 316.5 286.0 C315.4 284.5 314.6 283.3 314.6 282.0 C314.6 280.7 316.7 279.5 316.5 278.0 C316.3 276.5 314.7 274.8 313.6 273.2 C312.5 271.6 311.0 269.6 309.7 268.3 C308.4 267.0 307.4 266.3 305.8 265.4 C304.2 264.5 302.0 263.6 300.0 263.0 C298.0 262.4 296.1 262.5 294.0 262.0 C291.9 261.5 289.3 260.6 287.2 260.0 C285.1 259.4 282.7 258.4 281.4 258.6 C280.1 258.9 280.0 261.4 279.4 261.5 C278.8 261.6 277.4 259.9 277.5 259.0 C277.6 258.1 280.6 256.8 280.0 256.0 C279.4 255.2 275.5 254.7 274.0 254.0 C272.5 253.3 270.1 252.1 271.0 252.0Z" stroke="#2a2a2a" stroke-width="0.8"/><path d="M316.0 281.0 C316.2 279.5 318.3 277.8 320.0 277.5 C321.7 277.2 324.2 278.4 326.0 279.0 C327.8 279.6 329.3 280.2 331.0 281.0 C332.7 281.8 334.7 282.8 336.0 284.0 C337.3 285.2 338.6 286.5 339.0 288.0 C339.4 289.5 338.9 291.3 338.5 293.0 C338.1 294.7 336.6 296.3 336.5 298.0 C336.4 299.7 337.1 301.2 338.0 303.0 C338.9 304.8 341.8 308.2 342.0 309.0 C342.2 309.8 340.3 309.0 339.0 307.5 C337.7 306.0 335.6 302.2 334.0 300.0 C332.4 297.8 331.2 296.2 329.5 294.5 C327.8 292.8 325.8 291.3 324.0 290.0 C322.2 288.7 320.3 288.0 319.0 286.5 C317.7 285.0 315.8 282.5 316.0 281.0Z" stroke="#2a2a2a" stroke-width="0.9"/><path d="M319.0 283.0 C319.3 282.2 321.5 281.0 323.0 281.0 C324.5 281.0 326.4 282.2 328.0 283.0 C329.6 283.8 331.2 284.8 332.5 286.0 C333.8 287.2 335.2 288.5 335.5 290.0 C335.8 291.5 334.9 294.7 334.0 295.0 C333.1 295.3 331.5 293.1 330.0 292.0 C328.5 290.9 326.5 289.5 325.0 288.5 C323.5 287.5 322.0 286.9 321.0 286.0 C320.0 285.1 318.7 283.8 319.0 283.0Z" stroke="#2a2a2a" stroke-width="0.8"/><path d="M322.0 284.5 C322.4 283.9 324.8 283.6 326.0 284.0 C327.2 284.4 328.8 286.1 329.0 287.0 C329.2 287.9 327.9 289.4 327.0 289.5 C326.1 289.6 324.3 288.3 323.5 287.5 C322.7 286.7 321.6 285.1 322.0 284.5Z" stroke="#2a2a2a" stroke-width="0.7"/><path d="M330.0 282.0 C330.2 281.4 332.8 282.5 334.0 283.5 C335.2 284.5 337.1 286.6 337.5 288.0 C337.9 289.4 337.2 292.2 336.5 292.0 C335.8 291.8 334.1 288.7 333.0 287.0 C331.9 285.3 329.8 282.6 330.0 282.0Z" stroke="#2a2a2a" stroke-width="0.7"/><path d="M314.6 282.0 C315.2 283.1 316.4 286.6 318.0 288.5 C319.6 290.4 322.0 291.8 324.0 293.5 C326.0 295.2 328.2 296.9 330.0 299.0 C331.8 301.1 333.3 304.0 335.0 306.0 C336.7 308.0 339.2 310.2 340.0 311.0" stroke="#2a2a2a" stroke-width="1.3"/><path d="M300.0 256.0 C300.8 256.4 303.5 257.5 305.0 258.5 C306.5 259.5 307.7 260.7 309.0 262.0 C310.3 263.3 311.7 265.2 313.0 266.5 C314.3 267.8 315.5 269.2 317.0 270.0 C318.5 270.8 320.3 270.8 322.0 271.5 C323.7 272.2 325.5 272.9 327.0 274.0 C328.5 275.1 330.3 277.3 331.0 278.0" stroke="#2a2a2a" stroke-width="0.8"/><path d="M306.0 260.5 C306.7 261.2 308.7 263.1 310.0 264.5 C311.3 265.9 312.7 267.6 314.0 269.0 C315.3 270.4 316.7 271.8 318.0 273.0 C319.3 274.2 321.3 275.5 322.0 276.0" stroke="#2a2a2a" stroke-width="0.7"/><path d="M309.0 258.0 C309.4 257.6 311.8 259.2 313.0 260.0 C314.2 260.8 315.8 262.0 316.0 263.0 C316.2 264.0 314.9 266.1 314.0 266.0 C313.1 265.9 311.3 263.8 310.5 262.5 C309.7 261.2 308.6 258.4 309.0 258.0Z" stroke="#2a2a2a" stroke-width="0.7"/><path d="M318.0 268.0 C318.3 267.5 320.7 267.9 322.0 268.5 C323.3 269.1 325.7 270.6 326.0 271.5 C326.3 272.4 325.0 274.0 324.0 274.0 C323.0 274.0 321.0 272.5 320.0 271.5 C319.0 270.5 317.7 268.5 318.0 268.0Z" stroke="#2a2a2a" stroke-width="0.7"/><path d="M271.5 252.2 C272.2 251.8 275.6 251.5 278.0 251.2 C280.4 250.9 283.5 250.5 286.0 250.4 C288.5 250.3 292.7 250.2 293.0 250.6 C293.3 251.0 290.2 252.1 288.0 252.6 C285.8 253.1 282.3 253.2 280.0 253.3 C277.7 253.5 275.4 253.7 274.0 253.5 C272.6 253.3 270.8 252.6 271.5 252.2Z" stroke="#2a2a2a" stroke-width="0.9"/><path d="M279.5 259.5 C279.7 258.7 280.8 257.1 282.0 256.5 C283.2 255.9 285.2 255.8 287.0 256.0 C288.8 256.2 291.2 256.9 293.0 257.5 C294.8 258.1 297.5 258.8 298.0 259.5 C298.5 260.2 297.3 261.4 296.0 261.5 C294.7 261.6 292.0 260.3 290.0 260.0 C288.0 259.7 285.5 259.2 284.0 259.5 C282.5 259.8 281.8 261.5 281.0 261.5 C280.2 261.5 279.3 260.3 279.5 259.5Z" stroke="#2a2a2a" stroke-width="1.0"/><path d="M287.0 257.5 C287.7 257.6 289.7 257.8 291.0 258.2 C292.3 258.6 294.3 259.7 295.0 260.0" stroke="#2a2a2a" stroke-width="1.2"/><path d="M296.0 253.0 C296.8 252.8 299.8 253.8 301.0 254.5 C302.2 255.2 303.3 256.9 303.0 257.5 C302.7 258.1 300.1 258.3 299.0 258.0 C297.9 257.7 297.0 256.3 296.5 255.5 C296.0 254.7 295.2 253.2 296.0 253.0Z" stroke="#2a2a2a" stroke-width="0.7"/><path d="M316.0 251.5 C316.3 251.2 318.0 251.0 318.5 251.2 C319.0 251.4 319.3 252.3 319.0 252.6 C318.7 252.9 317.0 253.2 316.5 253.0 C316.0 252.8 315.7 251.8 316.0 251.5Z" stroke="#2a2a2a" stroke-width="0.8"/><path d="M324.5 254.5 C324.8 253.9 326.9 253.8 328.0 254.0 C329.1 254.2 330.8 254.8 331.0 255.5 C331.2 256.2 330.3 257.7 329.5 258.0 C328.7 258.3 326.8 258.1 326.0 257.5 C325.2 256.9 324.2 255.1 324.5 254.5Z" stroke="#2a2a2a" stroke-width="0.7"/><path d="M273.7 260.5 h1.3 v1.3 h-1.300z M324 262 h1.300 v1.3 h-1.300z M335 264.500 h1.200 v1.2 h-1.200z" fill="#333" stroke="none"/><path d="M373.5 269.0 C374.2 268.2 376.2 267.7 378.0 267.5 C379.8 267.3 382.9 267.3 384.0 268.0 C385.1 268.7 385.3 270.7 384.5 271.5 C383.7 272.3 380.8 272.4 379.0 272.6 C377.2 272.8 374.9 273.1 374.0 272.5 C373.1 271.9 372.8 269.8 373.5 269.0Z" stroke="#2a2a2a" stroke-width="0.8"/><path d="M381.5 264.0 C381.8 263.2 382.9 263.2 383.3 263.5 C383.7 263.8 384.1 265.2 384.0 266.0 C383.9 266.8 383.4 268.2 383.0 268.5 C382.6 268.8 381.8 268.8 381.5 268.0 C381.2 267.2 381.2 264.8 381.5 264.0Z" stroke="#2a2a2a" stroke-width="0.8"/><path d="M360.6 290.4 L365.5 285.5" stroke="#444" stroke-width="1.6"/><path d="M365.0 246.5 C365.2 246.1 365.0 245.2 367.0 245.8 C369.0 246.4 374.2 249.0 377.0 250.3 C379.8 251.6 382.9 252.7 384.0 253.5 C385.1 254.3 384.8 255.2 383.5 255.0 C382.2 254.8 378.9 253.7 376.0 252.5 C373.1 251.3 367.8 249.0 366.0 248.0 C364.2 247.0 364.8 246.9 365.0 246.5Z" stroke="#2a2a2a" stroke-width="0.8"/><path d="M378.0 252.6 L385.0 254.8" stroke="#333" stroke-width="1.5"/><path d="M378.5 256.5 C378.8 256.2 380.1 255.8 380.5 256.0 C380.9 256.2 381.2 257.2 381.0 257.5 C380.8 257.8 379.4 258.2 379.0 258.0 C378.6 257.8 378.2 256.8 378.5 256.5Z" stroke="#2a2a2a" stroke-width="0.7"/><path d="M348.5 239.5 C348.9 239.1 350.8 238.3 352.0 238.3 C353.2 238.3 355.8 238.8 356.0 239.3 C356.2 239.8 354.1 240.9 353.0 241.2 C351.9 241.5 350.2 241.3 349.5 241.0 C348.8 240.7 348.1 239.9 348.5 239.5Z" stroke="#2a2a2a" stroke-width="0.9"/><path d="M356.0 237.5 C357.0 236.9 361.2 236.4 364.0 236.2 C366.8 235.9 370.5 235.9 373.0 236.0 C375.5 236.1 377.3 236.3 379.0 237.0 C380.7 237.7 382.8 239.1 383.0 240.0 C383.2 240.9 381.3 242.4 380.0 242.5 C378.7 242.6 376.7 241.1 375.0 240.5 C373.3 239.9 371.8 239.2 370.0 239.0 C368.2 238.8 365.7 239.1 364.0 239.5 C362.3 239.9 360.4 240.6 360.0 241.5 C359.6 242.4 361.7 244.2 361.5 245.0 C361.3 245.8 359.8 246.4 359.0 246.0 C358.2 245.6 357.2 243.7 357.0 242.6 C356.8 241.5 358.2 240.3 358.0 239.5 C357.8 238.7 355.0 238.1 356.0 237.5Z" stroke="#2a2a2a" stroke-width="0.9"/><path d="M359.0 238.2 C360.5 238.0 365.2 237.2 368.0 237.2 C370.8 237.2 373.8 237.4 376.0 238.0 C378.2 238.6 380.2 240.1 381.0 240.5" stroke="#2a2a2a" stroke-width="1.1"/><path d="M376.0 241.0 C376.7 241.3 378.5 242.6 380.0 243.0 C381.5 243.4 384.2 243.2 385.0 243.2" stroke="#2a2a2a" stroke-width="0.8"/><path d="M388.0 238.0 C389.2 237.3 393.3 237.8 397.0 237.5 C400.7 237.2 405.7 236.8 410.0 236.5 C414.3 236.2 419.2 235.2 423.0 235.6 C426.8 235.9 431.5 237.4 433.0 238.6 C434.5 239.8 432.8 241.6 432.0 243.0 C431.2 244.4 429.3 245.7 428.0 247.0 C426.7 248.3 426.5 249.6 424.0 251.0 C421.5 252.4 416.1 254.0 413.0 255.6 C409.9 257.2 407.7 259.8 405.5 260.5 C403.3 261.2 401.6 260.9 400.0 260.0 C398.4 259.1 397.2 257.0 396.0 255.0 C394.8 253.0 394.1 250.2 393.0 248.0 C391.9 245.8 390.3 243.2 389.5 241.5 C388.7 239.8 386.8 238.7 388.0 238.0Z" stroke="#2a2a2a" stroke-width="1.0"/><path d="M391.2 239.1 C392.3 238.5 395.8 238.9 399.0 238.7 C402.1 238.5 406.4 238.1 410.1 237.8 C413.9 237.6 418.0 236.8 421.3 237.1 C424.6 237.4 428.6 238.6 429.9 239.6 C431.2 240.7 429.8 242.2 429.1 243.4 C428.3 244.6 426.8 245.7 425.6 246.9 C424.5 248.0 424.3 249.1 422.2 250.3 C420.0 251.5 415.4 252.9 412.7 254.3 C410.1 255.6 408.1 257.8 406.3 258.5 C404.4 259.1 402.9 258.8 401.5 258.0 C400.2 257.3 399.1 255.5 398.1 253.7 C397.1 252.0 396.5 249.7 395.5 247.7 C394.6 245.8 393.2 243.6 392.5 242.1 C391.8 240.7 390.1 239.7 391.2 239.1Z" stroke="#2a2a2a" stroke-width="0.8"/><path d="M404.0 245.5 C405.4 244.4 409.7 243.8 412.0 244.0 C414.3 244.2 417.2 245.6 418.0 246.8 C418.8 248.0 418.6 250.1 417.0 251.3 C415.4 252.5 410.8 254.3 408.5 254.2 C406.2 254.1 404.2 251.9 403.5 250.5 C402.8 249.1 402.6 246.6 404.0 245.5Z" stroke="#2a2a2a" stroke-width="0.8"/><path d="M391.0 238.5 C393.3 238.4 400.2 238.0 405.0 237.8 C409.8 237.6 415.5 236.9 420.0 237.2 C424.5 237.5 430.0 239.1 432.0 239.5" stroke="#2a2a2a" stroke-width="1.2"/><path d="M393.0 240.0 C395.5 239.9 403.2 239.4 408.0 239.2 C412.8 239.0 418.2 238.6 422.0 239.0 C425.8 239.4 429.5 241.1 431.0 241.5" stroke="#2a2a2a" stroke-width="0.9"/><path d="M397.0 241.5 C399.2 241.4 405.5 241.1 410.0 241.0 C414.5 240.9 420.7 240.8 424.0 241.2 C427.3 241.6 429.0 243.1 430.0 243.5" stroke="#2a2a2a" stroke-width="0.8"/><path d="M424.0 244.0 C424.8 244.1 428.5 243.8 429.0 244.5 C429.5 245.2 428.0 247.6 427.0 248.5 C426.0 249.4 423.7 249.8 423.0 250.0" stroke="#2a2a2a" stroke-width="1.3"/><path d="M414.0 254.5 C415.0 254.1 418.0 252.9 420.0 252.0 C422.0 251.1 425.0 249.5 426.0 249.0" stroke="#2a2a2a" stroke-width="1.6"/><path d="M396.0 256.0 C396.6 256.6 398.2 258.7 399.5 259.5 C400.8 260.3 402.8 261.0 404.0 261.0 C405.2 261.0 406.5 259.8 407.0 259.5" stroke="#2a2a2a" stroke-width="1.5"/><path d="M389.0 240.0 C389.7 241.2 391.7 244.7 393.0 247.0 C394.3 249.3 395.8 252.2 397.0 254.0 C398.2 255.8 399.5 257.3 400.0 258.0" stroke="#2a2a2a" stroke-width="1.2"/><path d="M391.5 240.0 C392.2 241.3 394.6 245.5 396.0 248.0 C397.4 250.5 399.3 253.8 400.0 255.0" stroke="#2a2a2a" stroke-width="0.8"/><path d="M431.0 256.0 C431.2 255.4 432.7 254.9 434.0 254.8 C435.3 254.7 438.3 254.8 439.0 255.2 C439.7 255.6 439.0 257.0 438.0 257.5 C437.0 258.0 434.2 258.4 433.0 258.2 C431.8 257.9 430.8 256.6 431.0 256.0Z" stroke="#2a2a2a" stroke-width="0.8"/><path d="M433.0 256.5 L437.0 256.3" stroke="#2a2a2a" stroke-width="1"/><path d="M369.3 321.5 C368.7 322.2 366.5 323.9 365.5 326.0 C364.6 328.1 363.4 331.3 363.7 333.9 C363.9 336.5 365.3 339.5 367.0 341.7 C368.7 343.9 371.7 345.2 373.7 346.9 C375.7 348.6 378.4 349.8 379.1 352.0 C379.7 354.2 378.4 357.3 377.9 359.9 C377.4 362.5 376.6 365.1 376.0 367.7 C375.4 370.3 375.0 372.9 374.2 375.5 C373.5 378.1 372.4 381.4 371.8 383.3 C371.2 385.2 370.8 386.6 370.6 387.2" stroke="#303030" stroke-width="0.9"/><path d="M370.3 321.5 C369.7 322.2 367.4 323.9 366.5 326.0 C365.5 328.1 364.3 331.3 364.6 333.9 C364.8 336.5 366.2 339.5 367.8 341.7 C369.5 343.9 372.5 345.2 374.5 346.9 C376.5 348.6 379.1 349.8 379.8 352.0 C380.5 354.2 379.1 357.3 378.6 359.9 C378.0 362.5 377.3 365.1 376.6 367.7 C376.0 370.3 375.5 372.9 374.8 375.5 C374.1 378.1 372.9 381.4 372.3 383.3 C371.7 385.2 371.3 386.6 371.1 387.2" stroke="#303030" stroke-width="0.9"/><path d="M371.3 321.5 C370.7 322.2 368.4 323.9 367.4 326.0 C366.4 328.1 365.2 331.3 365.4 333.9 C365.7 336.5 367.0 339.5 368.7 341.7 C370.3 343.9 373.3 345.2 375.3 346.9 C377.3 348.6 379.9 349.8 380.5 352.0 C381.2 354.2 379.8 357.3 379.2 359.9 C378.7 362.5 377.9 365.1 377.3 367.7 C376.6 370.3 376.1 372.9 375.4 375.5 C374.6 378.1 373.4 381.4 372.8 383.3 C372.2 385.2 371.7 386.6 371.5 387.2" stroke="#303030" stroke-width="1.0"/><path d="M372.3 321.5 C371.6 322.2 369.4 323.9 368.4 326.0 C367.4 328.1 366.1 331.3 366.3 333.9 C366.5 336.5 367.9 339.5 369.5 341.7 C371.1 343.9 374.1 345.2 376.1 346.9 C378.0 348.6 380.6 349.8 381.2 352.0 C381.9 354.2 380.5 357.3 379.9 359.9 C379.3 362.5 378.5 365.1 377.9 367.7 C377.2 370.3 376.7 372.9 375.9 375.5 C375.2 378.1 374.0 381.4 373.3 383.3 C372.6 385.2 372.2 386.6 372.0 387.2" stroke="#303030" stroke-width="0.9"/><path d="M373.3 321.5 C372.6 322.2 370.3 323.9 369.3 326.0 C368.3 328.1 367.1 331.3 367.2 333.9 C367.4 336.5 368.7 339.5 370.3 341.7 C371.9 343.9 374.9 345.2 376.9 346.9 C378.8 348.6 381.3 349.8 382.0 352.0 C382.6 354.2 381.2 357.3 380.6 359.9 C380.0 362.5 379.2 365.1 378.5 367.7 C377.8 370.3 377.3 372.9 376.5 375.5 C375.7 378.1 374.5 381.4 373.8 383.3 C373.1 385.2 372.7 386.6 372.4 387.2" stroke="#303030" stroke-width="0.8"/><path d="M374.3 321.5 C373.6 322.2 371.3 323.9 370.3 326.0 C369.2 328.1 368.0 331.3 368.1 333.9 C368.3 336.5 369.6 339.5 371.2 341.7 C372.8 343.9 375.7 345.2 377.6 346.9 C379.6 348.6 382.1 349.8 382.7 352.0 C383.3 354.2 381.8 357.3 381.2 359.9 C380.7 362.5 379.8 365.1 379.1 367.7 C378.4 370.3 377.9 372.9 377.1 375.5 C376.3 378.1 375.0 381.4 374.3 383.3 C373.6 385.2 373.1 386.6 372.9 387.2" stroke="#303030" stroke-width="0.7"/><path d="M371.7 387.5 C371.5 386.9 370.4 385.9 370.5 384.0 C370.6 382.1 371.8 378.8 372.5 376.0 C373.2 373.2 374.2 369.7 375.0 367.0 C375.8 364.3 376.7 361.2 377.0 360.0" stroke="#2a2a2a" stroke-width="0.7"/><path d="M377.5 361.0 C378.2 361.7 381.1 363.5 381.5 365.0 C381.9 366.5 380.8 368.5 380.0 370.0 C379.2 371.5 377.1 372.5 377.0 374.0 C376.9 375.5 379.3 377.5 379.5 379.0 C379.7 380.5 378.8 381.7 378.0 383.0 C377.2 384.3 376.0 386.1 375.0 387.0 C374.0 387.9 372.5 388.2 372.0 388.5" stroke="#2a2a2a" stroke-width="0.7"/><path d="M369.5 320.5 C369.8 319.8 372.7 319.3 373.5 319.5 C374.3 319.7 374.8 320.8 374.5 321.5 C374.2 322.2 372.3 323.7 371.5 323.5 C370.7 323.3 369.2 321.2 369.5 320.5Z" stroke="#2a2a2a" stroke-width="1.0"/><path d="M380.0 323.5 C380.2 323.2 381.2 323.0 381.5 323.2 C381.8 323.4 382.2 324.5 382.0 324.8 C381.8 325.1 380.8 325.4 380.5 325.2 C380.2 325.0 379.8 323.8 380.0 323.5Z" stroke="#2a2a2a" stroke-width="0.7"/><path d="M396.3 359.3 h1.700 v1.700 h-1.700z M384.5 323.800 h1.300 v1 h-1.300z M350.500 311.700 h2.200 v1.800 h-2.200z M602 359 h1.400 v1.400 h-1.400z" fill="#222" stroke="none"/><path d="M251.0 386.3 L253.5 386.5 L256.0 387.7 L258.0 386.5 L260.0 386.8 L262.0 386.1 L265.0 387.2 L268.0 386.5 L270.3 386.9 L272.7 388.4 L275.0 388.9 L277.0 389.4 L279.0 390.4 L281.0 391.5 L283.0 391.0 L285.3 391.8 L287.7 393.0 L290.0 394.1 L292.0 392.4 L294.0 390.9 L296.0 393.1 L298.0 393.2 L300.0 394.9 L302.0 394.6 L304.0 395.0 L306.0 395.0 L308.0 395.2 L310.0 395.9 L312.0 395.1 L314.0 395.4 L316.0 395.3 L318.0 394.7 L320.0 394.8 L322.0 393.9 L324.0 393.7 L326.0 393.7 L328.0 394.2 L330.0 393.6 L332.2 393.0 L334.3 392.9 L336.5 392.3 L338.7 391.6 L340.8 391.9 L343.0 391.3 L345.2 390.3 L347.3 390.4 L349.5 390.0 L351.7 390.2 L353.8 389.7 L356.0 388.7 L358.1 389.3 L360.1 387.8 L362.2 387.9 L364.2 388.0 L366.3 386.8 L368.3 386.9 L370.4 386.6" stroke="#333" stroke-width="0.8"/><path d="M263.5 386.0 C263.8 385.6 265.1 385.5 265.5 385.8 C265.9 386.1 266.2 387.4 266.0 387.8 C265.8 388.2 264.4 388.5 264.0 388.2 C263.6 387.9 263.2 386.4 263.5 386.0Z" stroke="#2a2a2a" stroke-width="0.7"/><path d="M326.5 394.0 C327.0 393.6 329.3 393.3 330.0 393.5 C330.7 393.7 331.0 394.9 330.5 395.3 C330.0 395.7 327.7 396.0 327.0 395.8 C326.3 395.6 326.0 394.4 326.5 394.0Z" stroke="#2a2a2a" stroke-width="0.7"/><path d="M378.5 384.4 L380.8 384.8 L383.1 384.7 L385.5 384.2 L387.8 384.3 L390.2 383.3 L392.5 383.6 L394.6 383.8 L396.7 384.2 L398.8 384.4 L400.9 385.4 L403.0 385.9 L405.6 384.6 L408.1 384.2 L410.7 382.7 L413.0 383.9 L415.4 384.1 L417.7 384.9 L420.0 385.0 L422.0 384.0 L424.0 383.9 L426.0 384.0 L428.0 382.9 L430.0 383.2 L432.0 383.2 L434.0 383.4 L436.0 383.7 L438.0 385.0 L440.0 384.5 L442.0 384.6 L444.0 384.7 L446.0 385.3 L448.0 384.2 L450.0 384.6 L452.1 385.1 L454.3 385.8 L456.4 386.0 L458.6 386.4 L460.7 385.9 L462.9 386.4 L465.0 386.6 L467.1 387.5 L469.2 387.7 L471.4 386.8 L473.5 386.9 L475.6 387.2 L477.8 387.3 L479.9 387.8 L482.0 388.1 L484.0 387.6 L486.0 387.2 L488.0 387.7 L490.0 387.5 L492.0 387.7 L494.0 388.2 L496.0 387.8 L498.1 387.7 L500.3 388.0 L502.4 388.3 L504.6 387.6 L506.7 388.9 L508.9 388.9 L511.0 389.2 L513.2 388.9 L515.4 388.0 L517.5 387.8 L519.7 387.1 L521.9 387.6 L524.1 386.5 L526.2 386.2 L528.4 386.2 L530.6 385.8 L532.8 385.8 L534.9 385.1 L537.1 384.8 L539.2 384.7 L541.4 384.4 L543.5 384.4 L545.7 383.7 L547.8 384.6 L550.0 384.0 L552.1 383.1 L554.2 383.1 L556.3 383.1 L558.4 382.9 L560.6 382.4 L562.7 383.3 L564.8 383.3 L566.9 382.4 L569.0 382.3 L571.2 382.0 L573.3 382.2 L575.5 382.8 L577.7 383.0 L579.8 384.0 L582.0 383.3 L584.2 383.4 L586.3 385.0 L588.5 384.7 L590.7 384.4 L592.8 385.3 L595.0 384.8 L597.1 385.8 L599.3 386.7 L601.4 386.9 L603.6 386.9 L605.7 386.6 L607.9 387.0 L610.0 387.0 L612.0 388.1 L614.0 387.9 L616.0 388.4 L618.0 387.9 L620.0 388.0 L622.0 389.0 L624.0 389.4 L627.4 390.8 L629.7 389.6 L632.0 388.4 L634.0 388.1 L636.0 387.2 L638.0 387.4 L640.0 387.0 L642.0 386.3 L644.4 386.0 L646.8 385.9 L649.2 385.5 L651.6 385.8 L653.6 386.5 L655.7 386.2 L657.7 387.2 L659.7 387.0" stroke="#333" stroke-width="0.8"/><path d="M251.0 426.5 C254.2 426.7 262.8 427.2 270.0 427.5 C277.2 427.8 282.3 428.0 294.0 428.0 C305.7 428.0 324.7 427.7 340.0 427.3 C355.3 426.9 373.2 426.6 386.0 425.8 C398.8 425.0 408.0 424.5 417.0 422.7 C426.0 420.9 433.2 416.9 440.0 415.0 C446.8 413.1 455.0 411.7 458.0 411.0" stroke="#3a3a3a" stroke-width="1.6"/><path d="M251.0 427.8 C259.2 428.1 281.8 429.3 300.0 429.5 C318.2 429.7 340.0 429.7 360.0 429.0 C380.0 428.3 405.0 427.2 420.0 425.5 C435.0 423.8 445.0 420.1 450.0 419.0" stroke="#2a2a2a" stroke-width="0.8"/><path d="M275.7 418.0 C276.9 417.7 279.9 416.6 283.0 416.2 C286.1 415.8 287.8 415.5 294.0 415.3 C300.2 415.1 312.3 414.9 320.0 414.8 C327.7 414.8 331.5 415.1 340.0 415.0 C348.5 414.9 364.3 414.4 371.0 414.2 C377.7 414.0 378.5 413.9 380.0 413.8" stroke="#333" stroke-width="1.5"/><path d="M275.7 418.0 C275.0 418.5 278.3 419.4 280.0 419.5 C281.7 419.6 284.3 419.2 286.0 418.8 C287.7 418.4 290.3 417.4 290.0 417.0 C289.7 416.6 286.4 416.3 284.0 416.5 C281.6 416.7 276.4 417.5 275.7 418.0Z" stroke="#2a2a2a" stroke-width="0.7"/><path d="M292.0 416.5 C294.8 415.8 300.7 415.9 305.0 416.0 C309.3 416.1 313.8 416.6 318.0 417.3 C322.2 418.1 329.3 419.4 330.0 420.5 C330.7 421.6 326.2 423.2 322.0 424.0 C317.8 424.8 310.0 425.5 305.0 425.5 C300.0 425.5 294.8 424.8 292.0 424.0 C289.2 423.2 288.0 421.8 288.0 420.5 C288.0 419.2 289.2 417.2 292.0 416.5Z" stroke="#2a2a2a" stroke-width="0.8"/><path d="M296.0 418.0 C297.3 417.2 302.8 417.2 306.0 417.5 C309.2 417.8 312.7 418.8 315.0 419.5 C317.3 420.2 321.2 421.3 320.0 422.0 C318.8 422.7 311.7 423.5 308.0 423.5 C304.3 423.5 300.0 422.9 298.0 422.0 C296.0 421.1 294.7 418.8 296.0 418.0Z" stroke="#2a2a2a" stroke-width="0.7"/><path d="M300.0 416.0 C302.0 416.8 308.7 419.4 312.0 421.0 C315.3 422.6 318.7 424.8 320.0 425.5" stroke="#2a2a2a" stroke-width="0.7"/><path d="M340.0 416.5 C342.0 416.6 349.3 416.4 352.0 417.0 C354.7 417.6 354.3 418.8 356.0 420.0 C357.7 421.2 359.3 423.1 362.0 424.0 C364.7 424.9 368.3 425.3 372.0 425.5 C375.7 425.7 382.0 425.1 384.0 425.0" stroke="#2a2a2a" stroke-width="0.8"/><path d="M340.0 422.5 C340.5 422.1 343.8 421.2 345.0 421.2 C346.2 421.2 347.5 421.9 347.0 422.3 C346.5 422.7 343.2 423.5 342.0 423.5 C340.8 423.5 339.5 422.9 340.0 422.5Z" stroke="#2a2a2a" stroke-width="0.7"/><path d="M352.0 416.0 C352.7 416.6 354.7 419.4 356.0 419.5 C357.3 419.6 358.3 416.3 360.0 416.5 C361.7 416.7 363.5 419.4 366.0 420.5 C368.5 421.6 371.0 422.5 375.0 423.0 C379.0 423.5 385.8 423.8 390.0 423.5 C394.2 423.2 398.3 421.8 400.0 421.5" stroke="#2a2a2a" stroke-width="0.8"/><path d="M355.0 427.0 C355.5 425.8 356.8 421.9 358.0 420.0 C359.2 418.1 361.3 416.2 362.0 415.5" stroke="#2a2a2a" stroke-width="0.7"/><path d="M374.0 409.5 C374.7 408.9 376.3 406.9 378.0 405.8 C379.7 404.8 382.3 403.8 384.0 403.2 C385.7 402.6 387.3 402.4 388.0 402.3" stroke="#2a2a2a" stroke-width="0.8"/><path d="M374.0 409.5 C374.5 409.1 375.8 407.3 377.0 407.0 C378.2 406.7 379.7 407.2 381.0 407.5 C382.3 407.8 384.1 408.2 385.0 409.0 C385.9 409.8 386.8 411.2 386.5 412.0 C386.2 412.8 384.4 413.7 383.0 414.0 C381.6 414.3 378.3 414.4 378.0 414.0 C377.7 413.6 380.7 412.2 381.0 411.5 C381.3 410.8 380.8 409.7 380.0 409.5 C379.2 409.3 377.1 410.3 376.5 410.5" stroke="#2a2a2a" stroke-width="1.0"/><path d="M372.0 411.5 C372.1 410.8 374.2 409.0 375.0 409.0 C375.8 409.0 377.1 410.8 377.0 411.5 C376.9 412.2 375.3 413.0 374.5 413.0 C373.7 413.0 371.9 412.2 372.0 411.5Z" stroke="#2a2a2a" stroke-width="0.7"/><path d="M395.0 421.0 C395.7 420.7 397.7 419.4 399.0 419.2 C400.3 418.9 401.8 419.1 403.0 419.5 C404.2 419.9 405.5 421.0 406.0 421.3" stroke="#2a2a2a" stroke-width="0.8"/><path d="M415.0 420.5 C415.8 419.6 420.2 418.3 423.0 418.0 C425.8 417.7 429.2 418.3 432.0 418.8 C434.8 419.3 440.3 420.1 440.0 421.0 C439.7 421.9 433.7 423.6 430.0 424.0 C426.3 424.4 420.5 424.1 418.0 423.5 C415.5 422.9 414.2 421.4 415.0 420.5Z" stroke="#2a2a2a" stroke-width="0.9"/><path d="M420.0 420.3 C420.2 419.8 424.8 419.4 427.0 419.5 C429.2 419.6 433.2 420.3 433.0 420.8 C432.8 421.3 428.2 422.4 426.0 422.3 C423.8 422.2 419.8 420.8 420.0 420.3Z" stroke="#2a2a2a" stroke-width="0.8"/><path d="M423.0 418.3 L427.0 417.8" stroke="#2a2a2a" stroke-width="1.6"/><path d="M450.0 413.0 C453.3 412.8 463.3 412.1 470.0 411.5 C476.7 410.9 484.2 410.5 490.0 409.7 C495.8 408.9 500.9 407.5 505.0 406.8 C509.1 406.1 511.3 405.7 514.5 405.6 C517.7 405.5 521.3 405.6 524.0 406.0 C526.7 406.4 528.9 407.2 530.6 408.0 C532.3 408.8 532.9 410.2 534.0 411.0 C535.1 411.8 535.8 413.0 537.0 413.0 C538.2 413.0 539.4 411.8 541.0 411.0 C542.6 410.2 544.0 408.8 546.8 408.0 C549.6 407.2 554.0 406.4 558.0 406.0 C562.0 405.6 565.7 405.4 571.0 405.3 C576.3 405.2 583.3 405.1 590.0 405.2 C596.7 405.2 605.2 405.3 611.0 405.6 C616.8 405.9 620.9 406.4 625.0 407.0 C629.1 407.6 632.2 408.2 635.5 408.9 C638.8 409.6 642.6 410.3 645.0 411.0 C647.4 411.7 649.2 412.7 650.0 413.0" stroke="#333" stroke-width="1.3"/><path d="M450.0 414.0 C453.3 413.8 463.3 413.1 470.0 412.5 C476.7 411.9 484.2 411.5 490.0 410.7 C495.8 409.9 500.9 408.5 505.0 407.8 C509.1 407.1 511.3 406.7 514.5 406.6 C517.7 406.5 521.3 406.6 524.0 407.0 C526.7 407.4 528.9 408.2 530.6 409.0 C532.3 409.8 532.9 411.2 534.0 412.0 C535.1 412.8 535.8 414.0 537.0 414.0 C538.2 414.0 539.4 412.8 541.0 412.0 C542.6 411.2 544.0 409.8 546.8 409.0 C549.6 408.2 554.0 407.4 558.0 407.0 C562.0 406.6 565.7 406.4 571.0 406.3 C576.3 406.2 583.3 406.1 590.0 406.2 C596.7 406.2 605.2 406.3 611.0 406.6 C616.8 406.9 620.9 407.4 625.0 408.0 C629.1 408.6 632.2 409.2 635.5 409.9 C638.8 410.6 642.6 411.3 645.0 412.0 C647.4 412.7 649.2 413.7 650.0 414.0" stroke="#333" stroke-width="1.1"/><path d="M450.0 415.0 C453.3 414.8 463.3 414.1 470.0 413.5 C476.7 412.9 484.2 412.5 490.0 411.7 C495.8 410.9 500.9 409.5 505.0 408.8 C509.1 408.1 511.3 407.7 514.5 407.6 C517.7 407.5 521.3 407.6 524.0 408.0 C526.7 408.4 528.9 409.2 530.6 410.0 C532.3 410.8 532.9 412.2 534.0 413.0 C535.1 413.8 535.8 415.0 537.0 415.0 C538.2 415.0 539.4 413.8 541.0 413.0 C542.6 412.2 544.0 410.8 546.8 410.0 C549.6 409.2 554.0 408.4 558.0 408.0 C562.0 407.6 565.7 407.4 571.0 407.3 C576.3 407.2 583.3 407.1 590.0 407.2 C596.7 407.2 605.2 407.3 611.0 407.6 C616.8 407.9 620.9 408.4 625.0 409.0 C629.1 409.6 632.2 410.2 635.5 410.9 C638.8 411.6 642.6 412.3 645.0 413.0 C647.4 413.7 649.2 414.7 650.0 415.0" stroke="#333" stroke-width="1.0"/><path d="M450.0 416.0 C453.3 415.8 463.3 415.1 470.0 414.5 C476.7 413.9 484.2 413.5 490.0 412.7 C495.8 411.9 500.9 410.5 505.0 409.8 C509.1 409.1 511.3 408.7 514.5 408.6 C517.7 408.5 521.3 408.6 524.0 409.0 C526.7 409.4 528.9 410.2 530.6 411.0 C532.3 411.8 532.9 413.2 534.0 414.0 C535.1 414.8 535.8 416.0 537.0 416.0 C538.2 416.0 539.4 414.8 541.0 414.0 C542.6 413.2 544.0 411.8 546.8 411.0 C549.6 410.2 554.0 409.4 558.0 409.0 C562.0 408.6 565.7 408.4 571.0 408.3 C576.3 408.2 583.3 408.1 590.0 408.2 C596.7 408.2 605.2 408.3 611.0 408.6 C616.8 408.9 620.9 409.4 625.0 410.0 C629.1 410.6 632.2 411.2 635.5 411.9 C638.8 412.6 642.6 413.3 645.0 414.0 C647.4 414.7 649.2 415.7 650.0 416.0" stroke="#333" stroke-width="0.8"/><path d="M516.0 405.8 C516.7 406.1 518.8 406.6 520.0 407.5 C521.2 408.4 521.8 410.0 523.0 411.0 C524.2 412.0 525.5 412.9 527.0 413.5 C528.5 414.1 530.2 414.4 532.0 414.5 C533.8 414.6 536.2 414.5 538.0 414.0 C539.8 413.5 541.2 412.2 543.0 411.5 C544.8 410.8 548.0 409.8 549.0 409.5" stroke="#2a2a2a" stroke-width="0.8"/><path d="M519.0 405.8 C519.5 406.2 520.8 407.5 522.0 408.5 C523.2 409.5 524.5 411.2 526.0 412.0 C527.5 412.8 529.3 412.9 531.0 413.0 C532.7 413.1 535.2 412.6 536.0 412.5" stroke="#2a2a2a" stroke-width="0.7"/><path d="M469.0 415.3 C469.3 414.2 482.4 414.2 490.0 414.3 C497.6 414.4 509.1 415.1 514.5 416.0 C519.9 416.9 519.4 418.7 522.6 419.4 C525.9 420.1 530.0 420.1 534.0 420.0 C538.0 419.9 543.6 419.6 546.8 418.5 C550.0 417.4 550.6 414.7 553.0 413.7 C555.4 412.7 558.0 412.6 561.0 412.5 C564.0 412.4 568.2 412.4 571.0 413.0 C573.8 413.6 576.2 414.8 578.0 416.0 C579.8 417.2 582.7 418.6 582.0 420.0 C581.3 421.4 577.2 423.4 574.0 424.5 C570.8 425.6 567.8 426.0 563.0 426.6 C558.2 427.2 551.7 427.8 545.0 428.0 C538.3 428.2 529.0 428.4 522.6 428.0 C516.2 427.6 512.3 427.0 506.5 425.8 C500.7 424.6 494.2 422.8 488.0 421.0 C481.8 419.2 468.7 416.4 469.0 415.3Z" stroke="#2a2a2a" stroke-width="0.8"/><path d="M529.0 422.6 C529.7 422.3 534.5 421.6 538.0 421.5 C541.5 421.4 548.8 421.6 550.0 421.8 C551.2 422.1 547.7 422.7 545.0 423.0 C542.3 423.3 536.7 423.6 534.0 423.5 C531.3 423.4 528.3 422.9 529.0 422.6Z" stroke="#2a2a2a" stroke-width="0.9"/><path d="M603.0 410.5 C603.8 410.8 606.7 411.7 608.0 412.5 C609.3 413.3 611.2 414.1 611.0 415.3 C610.8 416.6 608.8 418.6 607.0 420.0 C605.2 421.4 599.2 422.4 600.0 423.4 C600.8 424.4 607.4 425.2 612.0 426.0 C616.6 426.8 621.9 427.6 627.4 428.0 C632.9 428.4 639.6 428.2 645.0 428.2 C650.4 428.2 657.2 428.0 659.7 428.0" stroke="#2a2a2a" stroke-width="0.8"/><path d="M450.0 418.5 C452.5 418.9 459.1 419.8 465.0 421.0 C470.9 422.2 482.7 424.5 485.5 425.8 C488.3 427.1 483.9 428.1 482.0 429.0 C480.1 429.9 479.3 431.0 474.0 431.5 C468.7 432.0 454.0 431.9 450.0 432.0" stroke="#2a2a2a" stroke-width="0.8"/><path d="M450.0 426.0 C450.8 426.2 454.7 426.5 455.0 427.0 C455.3 427.5 452.5 428.7 452.0 429.0" stroke="#2a2a2a" stroke-width="0.7"/><path d="M640.0 413.0 C641.3 412.2 643.3 411.5 645.0 411.5 C646.7 411.5 649.5 412.2 650.0 413.0 C650.5 413.8 649.5 415.2 648.0 416.0 C646.5 416.8 643.3 417.2 641.0 418.0 C638.7 418.8 636.5 420.4 634.0 421.0 C631.5 421.6 628.0 421.9 626.0 421.8 C624.0 421.7 621.3 421.1 622.0 420.5 C622.7 419.9 627.5 419.2 630.0 418.5 C632.5 417.8 635.3 416.9 637.0 416.0 C638.7 415.1 638.7 413.8 640.0 413.0Z" stroke="#2a2a2a" stroke-width="0.8"/><path d="M632.0 412.0 C632.7 412.4 634.7 413.8 636.0 414.5 C637.3 415.2 638.7 415.7 640.0 416.5 C641.3 417.3 642.3 418.6 644.0 419.5 C645.7 420.4 647.4 421.1 650.0 422.0 C652.6 422.9 658.1 424.5 659.7 425.0" stroke="#333" stroke-width="1.5"/><path d="M636.0 411.0 C636.7 411.5 638.3 412.8 640.0 414.0 C641.7 415.2 644.0 416.8 646.0 418.0 C648.0 419.2 649.7 420.5 652.0 421.5 C654.3 422.5 658.4 423.6 659.7 424.0" stroke="#2a2a2a" stroke-width="0.9"/><path d="M644.0 412.8 C644.5 412.3 647.2 412.0 648.0 412.3 C648.8 412.6 649.5 414.0 649.0 414.5 C648.5 415.0 645.8 415.8 645.0 415.5 C644.2 415.2 643.5 413.3 644.0 412.8Z" stroke="#2a2a2a" stroke-width="0.7"/><path d="M651.500 415.500 h2 v1.200 h-2z" fill="#111" stroke="none"/><path d="M342 432.200 h14 M360 432.200 h6 M370 432.200 h3 M380 432.200 h2 M388 432.200 h4 M398 432.200 h2 M410 432.200 h2 M420 432.200 h3 M432 432.200 h10 M446 432.200 h12" stroke="#444" stroke-width="0.9"/><path d="M462.0 261.0 C461.9 260.2 462.5 259.1 463.5 258.5 C464.5 257.9 466.6 258.2 468.0 257.5 C469.4 256.8 470.5 255.4 472.0 254.5 C473.5 253.6 475.3 252.6 477.0 252.0 C478.7 251.4 481.7 250.7 482.0 251.0 C482.3 251.3 480.2 253.1 479.0 253.8 C477.8 254.6 476.3 254.6 475.0 255.5 C473.7 256.4 472.2 258.0 471.0 259.0 C469.8 260.0 469.2 260.8 468.0 261.5 C466.8 262.2 465.0 263.1 464.0 263.0 C463.0 262.9 462.1 261.8 462.0 261.0Z" stroke="#2a2a2a" stroke-width="0.9"/><path d="M463.0 260.5 C463.1 260.0 464.4 259.2 465.0 259.2 C465.6 259.2 466.6 260.0 466.5 260.5 C466.4 261.0 465.1 262.0 464.5 262.0 C463.9 262.0 462.9 261.0 463.0 260.5Z" stroke="#2a2a2a" stroke-width="0.8"/><path d="M457.0 279.0 C457.3 278.3 458.8 277.2 460.0 277.0 C461.2 276.8 462.7 277.9 464.0 277.5 C465.3 277.1 466.8 275.2 468.0 274.5 C469.2 273.8 470.0 273.2 471.0 273.5 C472.0 273.8 473.8 275.1 474.0 276.0 C474.2 276.9 473.2 278.4 472.0 279.0 C470.8 279.6 468.7 279.2 467.0 279.5 C465.3 279.8 463.5 280.8 462.0 281.0 C460.5 281.2 458.8 281.3 458.0 281.0 C457.2 280.7 456.7 279.7 457.0 279.0Z" stroke="#2a2a2a" stroke-width="0.9"/><path d="M462.0 278.5 C462.8 278.2 465.5 277.1 467.0 276.8 C468.5 276.6 470.3 277.0 471.0 277.0" stroke="#333" stroke-width="1.6"/><path d="M460.0 279.8 C460.3 279.4 462.4 278.5 463.0 278.5 C463.6 278.5 463.8 279.6 463.5 280.0 C463.2 280.4 461.6 281.0 461.0 281.0 C460.4 281.0 459.7 280.2 460.0 279.8Z" stroke="#2a2a2a" stroke-width="1.0"/><path d="M476.0 274.5 C476.5 274.2 478.8 274.0 479.5 274.2 C480.2 274.4 480.5 275.2 480.0 275.5 C479.5 275.8 477.2 276.0 476.5 275.8 C475.8 275.6 475.5 274.8 476.0 274.5Z" stroke="#2a2a2a" stroke-width="0.8"/><path d="M481.0 276.0 C481.6 275.3 483.2 274.3 484.0 274.5 C484.8 274.7 486.2 276.2 486.0 277.0 C485.8 277.8 483.9 279.2 483.0 279.5 C482.1 279.8 480.8 279.1 480.5 278.5 C480.2 277.9 480.4 276.7 481.0 276.0Z" stroke="#2a2a2a" stroke-width="0.8"/><path d="M473.7 279.5 C474.1 279.3 475.8 280.7 477.0 281.0 C478.2 281.3 479.8 281.0 481.0 281.3 C482.2 281.6 484.2 282.4 484.0 283.0 C483.8 283.6 481.0 284.9 480.0 285.0 C479.0 285.1 478.9 284.0 478.0 283.5 C477.1 283.0 475.2 282.7 474.5 282.0 C473.8 281.3 473.3 279.7 473.7 279.5Z" stroke="#2a2a2a" stroke-width="0.8"/><path d="M470.0 282.0 L474.0 285.5" stroke="#2a2a2a" stroke-width="0.9"/><path d="M446.0 281.5 C446.6 280.8 449.9 280.9 452.0 281.0 C454.1 281.1 457.8 281.1 458.5 281.8 C459.2 282.5 457.1 283.9 456.0 285.0 C454.9 286.1 453.2 288.4 452.0 288.4 C450.8 288.4 449.5 286.1 448.5 285.0 C447.5 283.9 445.4 282.2 446.0 281.5Z" stroke="#2a2a2a" stroke-width="0.9"/><path d="M450.0 283.0 C450.7 283.1 453.7 283.1 454.0 283.5 C454.3 283.9 452.3 285.2 452.0 285.5" stroke="#333" stroke-width="1.4"/><path d="M440.0 278.0 L447.0 283.5 L454.6 289.4" stroke="#2a2a2a" stroke-width="0.8"/><path d="M440.0 289.4 L447.8 296.2" stroke="#222" stroke-width="1.6"/><path d="M447.0 291.0 C447.2 290.3 450.8 289.0 453.0 288.5 C455.2 288.0 458.2 287.8 460.0 288.0 C461.8 288.2 464.2 288.9 464.0 289.5 C463.8 290.1 461.0 291.0 459.0 291.5 C457.0 292.0 454.0 292.6 452.0 292.5 C450.0 292.4 446.8 291.7 447.0 291.0Z" stroke="#2a2a2a" stroke-width="0.8"/><path d="M452.0 296.0 C452.0 295.2 456.3 293.7 458.0 293.5 C459.7 293.3 462.0 294.2 462.0 295.0 C462.0 295.8 459.7 297.8 458.0 298.0 C456.3 298.2 452.0 296.8 452.0 296.0Z" stroke="#2a2a2a" stroke-width="0.8"/><path d="M466.0 296.0 C466.2 295.4 468.2 294.4 469.0 294.5 C469.8 294.6 471.2 295.9 471.0 296.5 C470.8 297.1 468.8 298.1 468.0 298.0 C467.2 297.9 465.8 296.6 466.0 296.0Z" stroke="#2a2a2a" stroke-width="0.8"/><path d="M487.0 285.0 C487.0 283.9 488.5 282.6 490.0 282.0 C491.5 281.4 494.2 281.8 496.0 281.5 C497.8 281.2 499.5 280.2 501.0 280.0 C502.5 279.8 503.7 280.0 505.0 280.5 C506.3 281.0 508.8 282.2 509.0 283.0 C509.2 283.8 507.5 285.1 506.0 285.5 C504.5 285.9 501.8 285.0 500.0 285.3 C498.2 285.6 496.7 287.0 495.0 287.5 C493.3 288.0 491.3 288.9 490.0 288.5 C488.7 288.1 487.0 286.1 487.0 285.0Z" stroke="#2a2a2a" stroke-width="0.9"/><path d="M500.0 280.5 C500.7 280.3 502.7 279.3 504.0 279.5 C505.3 279.7 507.0 280.8 508.0 281.5 C509.0 282.2 509.7 283.6 510.0 284.0" stroke="#2a2a2a" stroke-width="1.8"/><path d="M489.0 285.5 C489.0 285.1 491.7 284.2 493.0 284.0 C494.3 283.8 497.0 284.1 497.0 284.5 C497.0 284.9 494.3 286.3 493.0 286.5 C491.7 286.7 489.0 285.9 489.0 285.5Z" stroke="#2a2a2a" stroke-width="0.8"/><path d="M491.0 284.8 L493.0 283.8" stroke="#2a2a2a" stroke-width="1.5"/><path d="M506.0 286.0 C506.3 285.5 508.8 288.2 510.0 289.5 C511.2 290.8 511.8 292.4 513.0 293.5 C514.2 294.6 515.7 296.1 517.0 296.0 C518.3 295.9 519.7 293.9 521.0 293.0 C522.3 292.1 523.5 291.2 525.0 290.5 C526.5 289.8 528.5 289.5 530.0 289.0 C531.5 288.5 533.5 287.0 534.0 287.5 C534.5 288.0 533.7 290.6 533.0 292.0 C532.3 293.4 531.2 294.8 530.0 296.0 C528.8 297.2 527.5 298.2 526.0 299.0 C524.5 299.8 522.7 300.4 521.0 300.5 C519.3 300.6 517.5 300.1 516.0 299.5 C514.5 298.9 513.3 298.2 512.0 297.0 C510.7 295.8 509.0 294.3 508.0 292.5 C507.0 290.7 505.7 286.5 506.0 286.0Z" stroke="#2a2a2a" stroke-width="0.9"/><path d="M510.5 288.4 C510.7 288.0 512.5 290.0 513.3 290.9 C514.1 291.7 514.6 292.9 515.4 293.6 C516.2 294.4 517.3 295.5 518.2 295.4 C519.1 295.3 520.1 293.9 521.0 293.3 C521.9 292.7 522.8 292.0 523.8 291.6 C524.8 291.1 526.2 290.9 527.3 290.5 C528.3 290.1 529.8 289.1 530.1 289.4 C530.5 289.8 529.9 291.6 529.4 292.6 C528.9 293.6 528.1 294.6 527.3 295.4 C526.5 296.2 525.5 297.0 524.5 297.5 C523.5 298.0 522.2 298.5 521.0 298.6 C519.8 298.6 518.5 298.3 517.5 297.9 C516.5 297.4 515.6 296.9 514.7 296.1 C513.8 295.3 512.6 294.2 511.9 292.9 C511.2 291.7 510.3 288.8 510.5 288.4Z" stroke="#2a2a2a" stroke-width="0.8"/><path d="M508.0 288.0 C508.7 288.8 510.7 291.1 512.0 292.5 C513.3 293.9 514.7 295.5 516.0 296.5 C517.3 297.5 519.3 298.2 520.0 298.5" stroke="#2a2a2a" stroke-width="1.3"/><path d="M514.0 291.0 C513.8 290.5 516.7 293.3 518.0 293.5 C519.3 293.7 520.7 292.1 522.0 292.0 C523.3 291.9 525.7 292.2 526.0 293.0 C526.3 293.8 525.2 295.9 524.0 296.5 C522.8 297.1 520.7 297.4 519.0 296.5 C517.3 295.6 514.2 291.5 514.0 291.0Z" stroke="#2a2a2a" stroke-width="0.8"/><path d="M524.0 289.5 C524.5 288.9 526.8 291.8 528.0 292.0 C529.2 292.2 530.2 290.2 531.0 290.5 C531.8 290.8 533.3 292.8 533.0 294.0 C532.7 295.2 530.3 297.2 529.0 297.5 C527.7 297.8 525.8 296.8 525.0 295.5 C524.2 294.2 523.5 290.1 524.0 289.5Z" stroke="#2a2a2a" stroke-width="0.8"/><path d="M520.0 288.5 C519.8 287.9 521.8 286.6 523.0 286.5 C524.2 286.4 526.8 287.2 527.0 287.8 C527.2 288.4 525.2 289.9 524.0 290.0 C522.8 290.1 520.2 289.1 520.0 288.5Z" stroke="#2a2a2a" stroke-width="0.8"/><path d="M527.0 298.5 C527.5 297.9 529.7 297.0 531.0 297.0 C532.3 297.0 534.4 297.8 534.6 298.5 C534.8 299.2 533.1 300.7 532.0 301.0 C530.9 301.3 528.8 300.9 528.0 300.5 C527.2 300.1 526.5 299.1 527.0 298.5Z" stroke="#2a2a2a" stroke-width="0.8"/><path d="M497.0 300.0 C497.5 300.5 499.7 301.9 500.0 303.0 C500.3 304.1 499.2 305.9 499.0 306.5" stroke="#2a2a2a" stroke-width="0.7"/><path d="M534.6 285.0 C535.0 283.9 536.1 283.0 538.0 282.5 C539.9 282.0 543.5 282.2 546.0 282.0 C548.5 281.8 550.8 281.7 553.0 281.5 C555.2 281.3 557.0 280.8 559.0 281.0 C561.0 281.2 563.0 282.2 565.0 283.0 C567.0 283.8 569.7 285.0 571.0 286.0 C572.3 287.0 572.7 287.8 572.7 288.8 C572.7 289.8 572.0 291.0 571.0 292.0 C570.0 293.0 568.3 293.8 567.0 294.7 C565.7 295.6 564.3 296.8 563.0 297.5 C561.7 298.2 560.5 298.8 559.0 299.0 C557.5 299.2 555.7 299.2 554.0 299.0 C552.3 298.8 550.7 298.2 549.0 297.6 C547.3 297.0 545.6 296.3 544.0 295.5 C542.4 294.7 540.9 293.8 539.5 292.7 C538.1 291.6 536.3 290.3 535.5 289.0 C534.7 287.7 534.2 286.1 534.6 285.0Z" stroke="#262626" stroke-width="2.0"/><path d="M536.0 286.5 C537.0 286.7 540.0 287.2 542.0 287.5 C544.0 287.8 546.2 288.5 548.0 288.5 C549.8 288.5 551.3 288.0 553.0 287.5 C554.7 287.0 556.3 285.9 558.0 285.5 C559.7 285.1 561.3 284.8 563.0 285.0 C564.7 285.2 567.2 286.2 568.0 286.5" stroke="#2a2a2a" stroke-width="1.8"/><path d="M541.0 290.0 C541.8 290.1 544.3 290.2 546.0 290.5 C547.7 290.8 549.3 291.8 551.0 292.0 C552.7 292.2 555.2 291.6 556.0 291.5" stroke="#2a2a2a" stroke-width="0.8"/><path d="M545.0 293.5 C545.8 293.7 548.2 294.3 550.0 294.5 C551.8 294.7 555.0 294.8 556.0 294.8" stroke="#2a2a2a" stroke-width="0.8"/><path d="M544.0 284.5 C545.0 284.4 548.0 284.2 550.0 284.0 C552.0 283.8 555.0 283.6 556.0 283.5" stroke="#2a2a2a" stroke-width="0.9"/><path d="M533.0 284.0 C533.7 283.5 535.0 281.6 537.0 281.0 C539.0 280.4 542.3 280.5 545.0 280.3 C547.7 280.1 550.5 279.9 553.0 279.8 C555.5 279.7 557.8 279.2 560.0 279.5 C562.2 279.8 564.0 280.7 566.0 281.5 C568.0 282.3 571.0 284.0 572.0 284.5" stroke="#2a2a2a" stroke-width="1.0"/><path d="M560.0 290.0 C560.5 289.2 562.8 288.4 564.0 288.5 C565.2 288.6 566.8 289.7 567.0 290.5 C567.2 291.3 566.0 293.1 565.0 293.5 C564.0 293.9 561.8 293.6 561.0 293.0 C560.2 292.4 559.5 290.8 560.0 290.0Z" stroke="#2a2a2a" stroke-width="0.8"/><path d="M520.0 287.0 C520.3 285.9 522.5 285.7 524.0 285.5 C525.5 285.3 527.5 285.5 529.0 286.0 C530.5 286.5 532.1 287.5 533.0 288.5 C533.9 289.5 534.6 290.8 534.6 292.0 C534.6 293.2 533.9 294.8 533.0 296.0 C532.1 297.2 530.5 298.2 529.0 299.0 C527.5 299.8 525.3 300.8 524.0 300.5 C522.7 300.2 521.3 298.4 521.0 297.0 C520.7 295.6 522.2 293.7 522.0 292.0 C521.8 290.3 519.7 288.1 520.0 287.0Z" stroke="#2a2a2a" stroke-width="0.9"/><path d="M524.0 288.5 C524.7 287.8 526.8 288.0 528.0 288.5 C529.2 289.0 530.8 290.3 531.0 291.5 C531.2 292.7 530.0 294.7 529.0 295.5 C528.0 296.3 525.8 297.0 525.0 296.5 C524.2 296.0 524.2 293.8 524.0 292.5 C523.8 291.2 523.3 289.2 524.0 288.5Z" stroke="#2a2a2a" stroke-width="0.8"/><path d="M537.6 276.0 C537.9 275.3 539.8 273.8 541.0 273.5 C542.2 273.2 543.8 274.1 545.0 274.5 C546.2 274.9 548.3 275.6 548.0 276.0 C547.7 276.4 544.5 276.8 543.0 277.0 C541.5 277.2 539.9 277.7 539.0 277.5 C538.1 277.3 537.3 276.7 537.6 276.0Z" stroke="#2a2a2a" stroke-width="0.8"/><path d="M548.0 274.0 C548.0 273.0 549.7 272.0 551.0 271.5 C552.3 271.0 554.5 270.7 556.0 271.0 C557.5 271.3 558.8 272.5 560.0 273.5 C561.2 274.5 563.0 275.9 563.0 277.0 C563.0 278.1 561.3 279.8 560.0 280.0 C558.7 280.2 556.5 278.9 555.0 278.5 C553.5 278.1 552.2 278.2 551.0 277.5 C549.8 276.8 548.0 275.0 548.0 274.0Z" stroke="#2a2a2a" stroke-width="0.9"/><path d="M551.0 273.5 C551.7 273.4 553.8 272.7 555.0 273.0 C556.2 273.3 557.8 274.8 558.0 275.5 C558.2 276.2 556.3 277.2 556.0 277.5" stroke="#333" stroke-width="1.5"/><path d="M560.0 269.0 C560.5 268.2 563.3 267.5 565.0 267.5 C566.7 267.5 568.5 268.2 570.0 269.0 C571.5 269.8 573.7 270.8 574.0 272.0 C574.3 273.2 573.0 275.0 572.0 276.0 C571.0 277.0 569.3 278.0 568.0 278.0 C566.7 278.0 565.0 276.9 564.0 276.0 C563.0 275.1 562.7 273.7 562.0 272.5 C561.3 271.3 559.5 269.8 560.0 269.0Z" stroke="#2a2a2a" stroke-width="0.8"/><path d="M565.0 270.5 C565.6 270.2 568.0 270.9 569.0 271.5 C570.0 272.1 571.2 273.3 571.0 274.0 C570.8 274.7 568.9 275.6 568.0 275.5 C567.1 275.4 566.0 274.3 565.5 273.5 C565.0 272.7 564.4 270.8 565.0 270.5Z" stroke="#2a2a2a" stroke-width="0.8"/><path d="M556.0 268.5 C556.5 268.2 558.2 267.0 559.0 267.0 C559.8 267.0 560.7 268.2 561.0 268.5" stroke="#2a2a2a" stroke-width="0.8"/><path d="M540.0 279.0 C541.0 278.8 544.0 277.9 546.0 278.0 C548.0 278.1 550.0 279.1 552.0 279.5 C554.0 279.9 556.0 280.4 558.0 280.5 C560.0 280.6 562.0 279.8 564.0 280.0 C566.0 280.2 568.2 281.0 570.0 281.5 C571.8 282.0 573.9 282.8 574.7 283.0" stroke="#2a2a2a" stroke-width="1.2"/><path d="M548.0 279.8 C549.3 280.0 553.0 280.9 556.0 281.2 C559.0 281.5 564.3 281.4 566.0 281.5" stroke="#2a2a2a" stroke-width="0.9"/><path d="M572.7 269.0 C573.0 267.4 575.5 267.2 577.0 266.5 C578.5 265.8 580.2 265.7 582.0 265.0 C583.8 264.3 586.3 262.4 588.0 262.5 C589.7 262.6 590.5 264.2 592.0 265.5 C593.5 266.8 596.7 268.2 597.0 270.0 C597.3 271.8 595.2 273.8 594.0 276.0 C592.8 278.2 591.5 280.7 590.0 283.0 C588.5 285.3 586.7 287.8 585.0 290.0 C583.3 292.2 581.7 293.9 580.0 296.0 C578.3 298.1 576.4 300.8 574.7 302.5 C573.0 304.2 571.5 305.1 570.0 306.0 C568.5 306.9 566.6 308.5 566.0 308.0 C565.4 307.5 566.0 304.7 566.5 303.0 C567.0 301.3 568.1 299.5 569.0 298.0 C569.9 296.5 571.2 295.7 572.0 294.0 C572.8 292.3 573.8 290.0 574.0 288.0 C574.2 286.0 572.8 284.0 573.0 282.0 C573.2 280.0 575.0 278.2 575.0 276.0 C575.0 273.8 572.4 270.6 572.7 269.0Z" stroke="#2a2a2a" stroke-width="0.8"/><path d="M579.0 268.0 C579.7 267.0 582.7 266.4 584.0 266.5 C585.3 266.6 587.0 267.6 587.0 268.5 C587.0 269.4 585.2 271.3 584.0 272.0 C582.8 272.7 580.8 273.2 580.0 272.5 C579.2 271.8 578.3 269.0 579.0 268.0Z" stroke="#2a2a2a" stroke-width="0.8"/><path d="M576.0 274.0 C576.8 273.2 579.8 273.8 581.0 274.5 C582.2 275.2 583.3 276.9 583.0 278.0 C582.7 279.1 580.2 280.8 579.0 281.0 C577.8 281.2 576.5 280.2 576.0 279.0 C575.5 277.8 575.2 274.8 576.0 274.0Z" stroke="#2a2a2a" stroke-width="0.8"/><path d="M585.0 274.0 C585.2 272.9 588.0 271.8 589.0 272.0 C590.0 272.2 591.2 273.9 591.0 275.0 C590.8 276.1 589.0 278.7 588.0 278.5 C587.0 278.3 584.8 275.1 585.0 274.0Z" stroke="#2a2a2a" stroke-width="0.8"/><path d="M577.0 283.0 C577.2 282.3 580.7 282.2 582.0 282.5 C583.3 282.8 585.2 283.8 585.0 284.5 C584.8 285.2 582.3 286.8 581.0 286.5 C579.7 286.2 576.8 283.7 577.0 283.0Z" stroke="#2a2a2a" stroke-width="0.9"/><path d="M571.0 283.5 L576.0 284.5" stroke="#2a2a2a" stroke-width="1.2"/><path d="M583.0 281.0 L588.0 281.2" stroke="#2a2a2a" stroke-width="1.2"/><path d="M588.0 262.5 C589.0 262.7 592.0 263.4 594.0 263.5 C596.0 263.6 598.0 262.8 600.0 263.0 C602.0 263.2 604.3 264.0 606.0 264.5 C607.7 265.0 609.3 265.8 610.0 266.0" stroke="#2a2a2a" stroke-width="0.8"/><path d="M570.0 298.0 C571.2 297.0 573.5 298.5 574.0 299.5 C574.5 300.5 573.7 302.8 573.0 304.0 C572.3 305.2 571.0 306.8 570.0 307.0 C569.0 307.2 567.0 307.0 567.0 305.5 C567.0 304.0 568.8 299.0 570.0 298.0Z" stroke="#2a2a2a" stroke-width="0.8"/><path d="M566.0 300.0 C566.7 299.4 568.5 297.8 570.0 296.5 C571.5 295.2 573.5 293.6 575.0 292.0 C576.5 290.4 578.3 287.8 579.0 287.0" stroke="#2a2a2a" stroke-width="0.7"/><path d="M567.0 294.7 C567.7 294.9 569.8 296.1 571.0 296.0 C572.2 295.9 573.9 294.3 574.5 294.0" stroke="#2a2a2a" stroke-width="1.1"/><path d="M559.0 251.5 C559.2 250.9 560.8 250.7 562.0 250.7 C563.2 250.7 564.7 251.0 566.0 251.5 C567.3 252.0 568.2 253.1 570.0 253.5 C571.8 253.9 574.8 253.9 577.0 254.2 C579.2 254.5 583.0 255.1 583.5 255.5 C584.0 255.9 581.9 256.4 580.0 256.5 C578.1 256.6 574.3 256.3 572.0 256.2 C569.7 256.1 567.8 256.3 566.0 256.0 C564.2 255.7 562.2 255.2 561.0 254.5 C559.8 253.8 558.8 252.1 559.0 251.5Z" stroke="#2a2a2a" stroke-width="0.9"/><path d="M561.0 252.0 C561.2 251.7 563.2 251.6 564.0 251.8 C564.8 252.0 566.2 253.0 566.0 253.3 C565.8 253.6 563.8 254.0 563.0 253.8 C562.2 253.6 560.8 252.3 561.0 252.0Z" stroke="#2a2a2a" stroke-width="0.8"/><path d="M575.0 250.5 C575.8 250.4 579.3 249.9 580.0 250.0 C580.7 250.1 579.2 251.0 579.0 251.2" stroke="#2a2a2a" stroke-width="1.0"/><path d="M598.5 253.0 C598.5 252.1 599.2 251.3 600.0 250.8 C600.8 250.3 602.5 249.8 603.5 250.0 C604.5 250.2 605.8 251.2 606.0 252.0 C606.2 252.8 604.2 254.3 604.5 255.0 C604.8 255.7 606.9 256.1 608.0 256.0 C609.1 255.9 610.4 255.2 611.0 254.5 C611.6 253.8 611.0 252.4 611.5 251.8 C612.0 251.2 613.2 250.7 614.0 250.8 C614.8 250.9 616.0 251.7 616.0 252.5 C616.0 253.3 613.8 254.8 614.0 255.5 C614.2 256.2 616.0 256.6 617.0 256.5 C618.0 256.4 618.5 255.5 620.0 255.0 C621.5 254.5 623.8 254.0 626.0 253.5 C628.2 253.0 630.7 252.5 633.0 252.0 C635.3 251.5 637.8 250.6 640.0 250.5 C642.2 250.4 646.0 251.1 646.0 251.5 C646.0 251.9 642.0 252.5 640.0 253.0 C638.0 253.5 636.0 253.8 634.0 254.5 C632.0 255.2 630.0 256.2 628.0 257.0 C626.0 257.8 624.0 258.6 622.0 259.0 C620.0 259.4 618.0 259.6 616.0 259.5 C614.0 259.4 612.0 258.8 610.0 258.5 C608.0 258.2 605.7 258.3 604.0 258.0 C602.3 257.7 600.9 257.3 600.0 256.5 C599.1 255.7 598.5 253.9 598.5 253.0Z" stroke="#2a2a2a" stroke-width="0.9"/><path d="M601.0 252.0 C601.3 251.5 602.4 251.2 603.0 251.3 C603.6 251.4 604.5 252.2 604.5 252.8 C604.5 253.4 603.6 254.7 603.0 255.0 C602.4 255.3 601.3 255.0 601.0 254.5 C600.7 254.0 600.7 252.5 601.0 252.0Z" stroke="#2a2a2a" stroke-width="1.0"/><path d="M611.0 259.0 C611.9 259.2 614.0 260.8 615.0 262.0 C616.0 263.2 617.2 265.0 617.0 266.0 C616.8 267.0 615.0 268.3 614.0 268.0 C613.0 267.7 611.8 265.2 611.0 264.0 C610.2 262.8 609.5 261.3 609.5 260.5 C609.5 259.7 610.1 258.8 611.0 259.0Z" stroke="#2a2a2a" stroke-width="0.9"/><path d="M609.0 262.0 L613.0 266.5" stroke="#333" stroke-width="1.5"/><path d="M640.0 252.5 C641.0 252.4 644.0 251.8 646.0 251.7 C648.0 251.6 649.8 252.1 652.0 252.2 C654.2 252.2 657.8 252.0 659.0 252.0" stroke="#2a2a2a" stroke-width="0.8"/><path d="M652.0 254.0 C652.3 253.6 654.3 253.3 655.0 253.5 C655.7 253.7 656.3 254.6 656.0 255.0 C655.7 255.4 653.7 256.0 653.0 255.8 C652.3 255.6 651.7 254.4 652.0 254.0Z" stroke="#2a2a2a" stroke-width="0.7"/><path d="M638.0 264.0 C638.2 263.2 640.3 261.7 641.0 261.5 C641.7 261.3 642.2 262.2 642.0 263.0 C641.8 263.8 640.2 265.8 639.5 266.0 C638.8 266.2 637.8 264.8 638.0 264.0Z" stroke="#2a2a2a" stroke-width="0.9"/><path d="M600.0 282.0 C600.2 281.4 601.5 280.4 602.0 280.5 C602.5 280.6 603.2 281.9 603.0 282.5 C602.8 283.1 601.5 284.1 601.0 284.0 C600.5 283.9 599.8 282.6 600.0 282.0Z" stroke="#2a2a2a" stroke-width="1.0"/><path d="M611.0 275.5 C611.2 274.9 612.5 273.6 613.0 273.5 C613.5 273.4 614.2 274.4 614.0 275.0 C613.8 275.6 612.5 276.9 612.0 277.0 C611.5 277.1 610.8 276.1 611.0 275.5Z" stroke="#2a2a2a" stroke-width="1.0"/><path d="M611.5 289.0 C611.7 288.7 612.7 288.2 613.0 288.3 C613.3 288.4 613.7 289.5 613.5 289.8 C613.3 290.1 612.3 290.4 612.0 290.3 C611.7 290.2 611.3 289.3 611.5 289.0Z" stroke="#2a2a2a" stroke-width="0.8"/><path d="M445.4 296.7 C445.7 297.5 448.5 298.6 450.0 299.5 C451.5 300.4 453.4 300.9 454.5 302.0 C455.6 303.1 455.9 304.7 456.5 306.0 C457.1 307.3 457.3 308.5 458.4 309.7 C459.5 310.9 461.9 311.9 463.0 313.0 C464.1 314.1 464.6 314.9 465.0 316.0 C465.4 317.1 465.2 319.9 465.6 319.5 C466.0 319.1 466.6 315.0 467.5 313.6 C468.4 312.2 469.9 311.8 471.0 311.0 C472.1 310.2 473.1 309.9 474.0 309.0 C474.9 308.1 476.9 307.0 476.7 305.8 C476.5 304.6 474.1 303.3 473.0 302.0 C471.9 300.7 471.2 299.2 470.0 298.0 C468.8 296.8 467.2 295.1 466.0 294.8 C464.8 294.5 463.8 295.5 463.0 296.0 C462.2 296.5 462.2 297.9 461.0 298.0 C459.8 298.1 457.5 297.1 456.0 296.5 C454.5 295.9 453.3 294.8 452.0 294.5 C450.7 294.2 449.1 294.1 448.0 294.5 C446.9 294.9 445.1 295.9 445.4 296.7Z" stroke="#2a2a2a" stroke-width="0.8"/><path d="M461.0 300.5 C461.4 299.8 463.2 299.3 464.0 299.5 C464.8 299.7 466.0 300.7 466.0 301.5 C466.0 302.3 464.8 304.2 464.0 304.5 C463.2 304.8 462.0 304.2 461.5 303.5 C461.0 302.8 460.6 301.2 461.0 300.5Z" stroke="#2a2a2a" stroke-width="0.8"/><path d="M468.0 296.5 C468.5 296.7 470.3 296.9 471.0 297.5 C471.7 298.1 471.8 299.6 472.0 300.0" stroke="#2a2a2a" stroke-width="0.7"/><path d="M478.0 303.2 C478.7 302.1 480.5 302.7 482.0 302.6 C483.5 302.5 485.8 302.0 487.0 302.6 C488.2 303.2 488.6 305.1 489.5 306.5 C490.4 307.9 492.1 309.5 492.3 311.0 C492.6 312.5 491.9 314.5 491.0 315.6 C490.1 316.7 488.3 317.1 487.0 317.5 C485.7 317.9 484.4 318.4 483.2 318.2 C482.0 318.0 480.8 317.1 480.0 316.5 C479.2 315.9 478.9 315.6 478.6 314.3 C478.3 313.1 478.1 310.9 478.0 309.0 C477.9 307.1 477.3 304.3 478.0 303.2Z" stroke="#2a2a2a" stroke-width="0.8"/><path d="M481.0 312.0 C481.2 311.5 482.4 310.7 483.0 310.8 C483.6 310.9 484.5 311.9 484.5 312.5 C484.5 313.1 483.5 314.2 483.0 314.5 C482.5 314.8 481.8 314.4 481.5 314.0 C481.2 313.6 480.8 312.5 481.0 312.0Z" stroke="#2a2a2a" stroke-width="0.8"/><path d="M495.5 294.0 C496.0 293.0 498.6 290.7 500.0 290.9 C501.4 291.1 502.7 293.6 504.0 295.0 C505.3 296.4 506.9 297.5 508.0 299.3 C509.1 301.1 509.7 303.9 510.5 305.8 C511.3 307.8 513.2 309.7 513.0 311.0 C512.8 312.3 510.7 312.7 509.5 313.5 C508.3 314.3 506.9 315.9 506.0 315.6 C505.1 315.4 504.6 313.2 504.0 312.0 C503.4 310.8 503.3 309.7 502.7 308.4 C502.1 307.1 501.1 305.3 500.5 304.0 C499.9 302.7 499.4 301.8 498.8 300.6 C498.2 299.4 497.6 298.1 497.0 297.0 C496.4 295.9 495.0 295.0 495.5 294.0Z" stroke="#2a2a2a" stroke-width="0.8"/><path d="M500.0 297.5 C500.2 297.0 501.5 296.6 502.0 296.8 C502.5 297.1 503.2 298.5 503.0 299.0 C502.8 299.5 501.5 300.2 501.0 300.0 C500.5 299.8 499.8 298.0 500.0 297.5Z" stroke="#2a2a2a" stroke-width="0.7"/><path d="M503.5 303.0 C503.7 302.4 505.0 302.2 505.5 302.5 C506.0 302.8 506.7 304.4 506.5 305.0 C506.3 305.6 505.0 306.3 504.5 306.0 C504.0 305.7 503.3 303.6 503.5 303.0Z" stroke="#2a2a2a" stroke-width="0.7"/><path d="M505.5 308.5 C505.7 307.8 507.0 307.6 507.5 308.0 C508.0 308.4 508.7 310.3 508.5 311.0 C508.3 311.7 507.0 312.4 506.5 312.0 C506.0 311.6 505.3 309.2 505.5 308.5Z" stroke="#2a2a2a" stroke-width="0.8"/><path d="M495.0 320.0 C495.0 318.8 496.2 317.3 497.0 316.0 C497.8 314.7 498.8 312.4 499.5 312.3 C500.2 312.2 500.5 314.4 501.0 315.5 C501.5 316.6 502.0 318.1 502.7 318.9 C503.4 319.6 505.2 319.3 505.3 320.0 C505.4 320.7 503.9 322.1 503.0 323.0 C502.1 323.9 501.0 325.3 500.0 325.4 C499.0 325.5 497.6 324.3 496.8 323.4 C496.0 322.5 495.0 321.2 495.0 320.0Z" stroke="#2a2a2a" stroke-width="0.8"/><path d="M497.5 319.0 L503.0 322.5" stroke="#2a2a2a" stroke-width="0.8"/><path d="M502.0 317.5 L498.5 323.5" stroke="#2a2a2a" stroke-width="0.8"/><path d="M492.3 326.0 C493.6 326.1 496.4 326.6 497.5 328.0 C498.6 329.4 499.1 332.1 498.8 334.5 C498.6 336.9 497.1 340.1 496.0 342.3 C494.9 344.5 493.8 346.2 492.3 347.5 C490.8 348.8 487.0 349.1 487.0 350.0 C487.0 350.9 492.3 351.4 492.3 352.7 C492.3 354.0 487.2 356.7 487.0 358.0 C486.8 359.3 491.0 359.2 491.0 360.5 C491.0 361.8 489.2 364.5 487.0 365.7 C484.8 366.9 480.2 368.3 478.0 367.7 C475.8 367.1 474.9 363.9 474.0 361.8 C473.1 359.7 473.5 357.5 472.8 355.3 C472.1 353.1 469.9 351.4 470.0 348.8 C470.1 346.2 472.2 341.2 473.4 339.7 C474.6 338.1 475.8 339.7 477.0 339.5 C478.2 339.3 479.1 338.4 480.6 338.4 C482.1 338.4 484.7 340.8 485.8 339.7 C486.9 338.6 486.4 334.0 487.0 331.9 C487.6 329.8 488.8 328.3 489.7 327.3 C490.6 326.3 491.0 325.9 492.3 326.0Z" stroke="#2a2a2a" stroke-width="0.8"/><path d="M494.0 329.5 C494.5 329.0 496.4 329.2 497.0 330.0 C497.6 330.8 497.8 332.9 497.5 334.0 C497.2 335.1 496.1 336.7 495.5 336.5 C494.9 336.3 494.2 334.2 494.0 333.0 C493.8 331.8 493.5 330.0 494.0 329.5Z" stroke="#2a2a2a" stroke-width="0.9"/><path d="M487.5 332.0 C487.7 331.3 489.4 330.8 490.0 331.0 C490.6 331.2 491.2 332.8 491.0 333.5 C490.8 334.2 489.6 335.2 489.0 335.0 C488.4 334.8 487.3 332.7 487.5 332.0Z" stroke="#2a2a2a" stroke-width="0.8"/><path d="M473.0 346.5 C473.2 345.9 474.9 345.3 475.5 345.5 C476.1 345.7 476.7 346.9 476.5 347.5 C476.3 348.1 475.1 349.2 474.5 349.0 C473.9 348.8 472.8 347.1 473.0 346.5Z" stroke="#2a2a2a" stroke-width="0.8"/><path d="M486.0 362.0 C486.2 361.0 488.2 359.4 489.0 359.5 C489.8 359.6 490.7 361.5 490.5 362.5 C490.3 363.5 488.8 365.6 488.0 365.5 C487.2 365.4 485.8 363.0 486.0 362.0Z" stroke="#2a2a2a" stroke-width="0.9"/><path d="M474.5 355.0 C474.9 354.8 476.8 353.2 477.0 353.5 C477.2 353.8 476.2 356.4 476.0 357.0" stroke="#2a2a2a" stroke-width="0.7"/><path d="M493.0 342.0 C493.5 341.8 495.7 340.5 496.0 341.0 C496.3 341.5 495.2 344.3 495.0 345.0" stroke="#2a2a2a" stroke-width="1.0"/><path d="M507.3 349.5 C507.6 348.6 508.5 348.3 509.0 348.0 C509.5 347.7 510.3 346.9 510.5 347.5 C510.7 348.1 510.2 350.2 510.0 351.5 C509.8 352.8 509.6 354.3 509.2 355.3 C508.8 356.3 507.7 357.6 507.3 357.3 C506.9 357.0 507.0 354.8 507.0 353.5 C507.0 352.2 507.0 350.4 507.3 349.5Z" stroke="#2a2a2a" stroke-width="0.8"/><path d="M508.5 351.0 L509.0 354.5" stroke="#2a2a2a" stroke-width="1.0"/><path d="M609.7 333.5 C610.0 333.2 611.8 333.7 613.0 334.0 C614.2 334.3 615.7 334.9 617.0 335.5 C618.3 336.1 619.8 336.7 621.0 337.5 C622.2 338.3 624.2 340.0 624.0 340.3 C623.8 340.6 621.5 339.9 620.0 339.5 C618.5 339.1 616.5 338.4 615.0 337.8 C613.5 337.2 611.9 336.5 611.0 335.8 C610.1 335.1 609.4 333.8 609.7 333.5Z" stroke="#222" stroke-width="1.8"/><path d="M646.0 382.0 C646.2 381.5 647.4 380.5 648.5 379.8 C649.6 379.1 652.1 377.9 652.4 378.0 C652.7 378.1 651.3 379.7 650.5 380.5 C649.7 381.3 648.2 382.6 647.5 382.8 C646.8 383.1 645.8 382.5 646.0 382.0Z" stroke="#333" stroke-width="1.3"/><path d="M589.8 284.2 C589.3 284.3 588.8 284.2 588.5 284.0 C588.2 283.8 588.0 283.5 587.9 283.2 C587.9 282.9 587.8 282.5 588.2 282.2 C588.6 282.0 589.5 281.7 590.1 281.8 C590.7 281.9 591.5 282.3 591.7 282.7 C591.9 283.0 591.5 283.6 591.2 283.8 C590.9 284.1 590.2 284.2 589.8 284.2Z" stroke="#2a2a2a" stroke-width="0.7"/><path d="M573.7 279.8 C574.0 279.7 574.9 279.7 575.3 279.8 C575.7 279.9 576.2 280.2 576.3 280.4 C576.4 280.7 576.2 281.1 575.9 281.3 C575.7 281.4 575.3 281.4 574.9 281.5 C574.5 281.5 573.7 281.7 573.5 281.6 C573.3 281.4 573.4 281.0 573.5 280.7 C573.5 280.4 573.4 280.0 573.7 279.8Z" stroke="#2a2a2a" stroke-width="0.7"/><path d="M579.1 284.5 C578.7 284.2 578.7 283.5 579.0 283.2 C579.2 282.8 580.1 282.7 580.6 282.7 C581.1 282.6 581.6 282.6 582.0 282.7 C582.3 282.9 582.5 283.1 582.7 283.4 C582.9 283.7 583.4 284.3 583.2 284.6 C582.9 284.9 581.8 285.1 581.1 285.1 C580.4 285.0 579.4 284.8 579.1 284.5Z" stroke="#2a2a2a" stroke-width="0.7"/><path d="M550.9 279.8 C551.6 279.5 552.8 279.2 553.4 279.4 C554.0 279.5 554.4 280.3 554.6 280.7 C554.7 281.1 554.4 281.4 554.2 281.9 C553.9 282.4 553.7 283.6 553.0 283.7 C552.3 283.9 550.7 283.2 550.1 282.7 C549.5 282.3 549.2 281.5 549.3 281.1 C549.4 280.6 550.2 280.1 550.9 279.8Z" stroke="#2a2a2a" stroke-width="0.7"/><path d="M588.1 273.7 C588.7 273.9 589.3 274.3 589.4 274.7 C589.6 275.0 589.4 275.6 589.0 275.9 C588.6 276.2 587.7 276.4 587.0 276.4 C586.3 276.4 585.0 276.4 584.6 276.1 C584.3 275.8 584.5 275.0 584.8 274.6 C585.0 274.1 585.4 273.6 586.0 273.4 C586.5 273.3 587.6 273.5 588.1 273.7Z" stroke="#2a2a2a" stroke-width="0.7"/><path d="M549.8 282.9 C549.6 282.6 549.4 281.9 549.8 281.7 C550.1 281.4 551.0 281.4 551.7 281.4 C552.3 281.4 553.3 281.3 553.7 281.5 C554.0 281.8 553.8 282.4 553.7 282.8 C553.5 283.1 553.2 283.5 552.7 283.6 C552.3 283.8 551.5 283.8 551.0 283.7 C550.5 283.6 550.0 283.2 549.8 282.9Z" stroke="#2a2a2a" stroke-width="0.7"/><path d="M548.8 275.1 C548.7 275.3 548.0 275.5 547.6 275.7 C547.2 275.8 546.8 276.0 546.4 276.0 C546.0 276.0 545.3 275.8 545.1 275.5 C544.9 275.3 545.1 274.8 545.3 274.6 C545.6 274.3 546.1 274.2 546.5 274.2 C547.0 274.1 547.5 274.1 547.9 274.3 C548.3 274.4 548.8 274.8 548.8 275.1Z" stroke="#2a2a2a" stroke-width="0.7"/><path d="M569.3 280.3 C569.5 280.0 569.7 279.9 570.1 279.8 C570.4 279.7 571.1 279.5 571.4 279.6 C571.8 279.8 571.9 280.2 571.9 280.5 C571.9 280.7 571.8 281.1 571.5 281.3 C571.2 281.4 570.6 281.6 570.2 281.6 C569.7 281.6 568.9 281.4 568.8 281.1 C568.6 280.9 569.1 280.5 569.3 280.3Z" stroke="#2a2a2a" stroke-width="0.7"/><path d="M563.0 277.7 C563.1 277.3 563.8 276.9 564.3 276.7 C564.8 276.5 565.6 276.4 566.2 276.5 C566.7 276.6 567.2 276.9 567.5 277.3 C567.8 277.7 568.3 278.4 568.0 278.7 C567.7 279.0 566.6 279.3 565.9 279.3 C565.1 279.4 564.1 279.3 563.6 279.1 C563.1 278.8 562.9 278.1 563.0 277.7Z" stroke="#2a2a2a" stroke-width="0.7"/><path d="M590.1 271.5 C590.3 271.8 589.4 272.4 588.9 272.7 C588.5 273.0 588.2 273.1 587.7 273.2 C587.2 273.3 586.2 273.3 585.9 273.1 C585.6 273.0 585.8 272.4 585.8 272.1 C585.9 271.7 586.1 271.3 586.4 271.2 C586.8 271.0 587.3 271.1 588.0 271.2 C588.6 271.3 590.0 271.3 590.1 271.5Z" stroke="#2a2a2a" stroke-width="0.7"/><path d="M577.4 282.3 C576.6 282.5 575.2 282.7 574.5 282.5 C573.8 282.3 573.8 281.6 573.4 281.0 C573.0 280.5 572.0 279.9 572.2 279.4 C572.5 278.9 574.1 278.2 574.9 278.2 C575.7 278.2 576.3 279.1 577.1 279.5 C577.8 279.9 579.3 280.3 579.3 280.7 C579.4 281.2 578.2 282.0 577.4 282.3Z" stroke="#2a2a2a" stroke-width="0.7"/><path d="M564.7 274.5 C565.4 274.8 566.2 275.1 566.4 275.5 C566.6 275.9 566.4 276.8 565.8 277.1 C565.3 277.4 564.1 277.6 563.3 277.5 C562.6 277.4 561.9 277.0 561.5 276.7 C561.1 276.3 560.8 275.8 560.9 275.3 C561.0 274.8 561.6 273.9 562.2 273.8 C562.8 273.6 564.0 274.2 564.7 274.5Z" stroke="#2a2a2a" stroke-width="0.7"/><path d="M548.7 277.0 C548.6 277.4 548.5 277.9 548.1 278.1 C547.6 278.2 546.6 278.2 546.2 278.1 C545.7 277.9 545.8 277.5 545.5 277.2 C545.2 276.8 544.3 276.2 544.5 275.9 C544.7 275.6 545.9 275.4 546.6 275.3 C547.3 275.3 548.5 275.4 548.8 275.6 C549.2 275.9 548.8 276.6 548.7 277.0Z" stroke="#2a2a2a" stroke-width="0.7"/><path d="M550.8 271.6 C551.1 271.6 551.3 271.8 551.5 272.0 C551.7 272.1 551.9 272.3 551.8 272.6 C551.7 272.8 551.4 273.2 551.1 273.3 C550.7 273.4 549.9 273.3 549.6 273.1 C549.4 272.9 549.4 272.5 549.5 272.3 C549.5 272.1 549.7 271.9 549.9 271.8 C550.2 271.6 550.6 271.5 550.8 271.6Z" stroke="#2a2a2a" stroke-width="0.7"/><path d="M586.2 293.6 C585.8 293.9 585.7 294.4 585.3 294.5 C584.9 294.5 584.0 294.2 583.7 293.9 C583.5 293.7 583.7 293.4 583.7 293.0 C583.7 292.7 583.3 292.0 583.7 291.8 C584.0 291.6 585.1 291.7 585.7 291.9 C586.3 292.0 587.2 292.4 587.3 292.7 C587.3 292.9 586.5 293.3 586.2 293.6Z" stroke="#2a2a2a" stroke-width="0.7"/><path d="M575.7 297.2 C575.9 297.3 576.0 297.5 576.0 297.7 C576.0 297.9 575.9 298.1 575.7 298.3 C575.5 298.4 574.9 298.6 574.6 298.6 C574.4 298.5 574.2 298.1 574.1 297.9 C574.1 297.7 574.2 297.6 574.3 297.5 C574.4 297.3 574.5 297.1 574.8 297.0 C575.0 297.0 575.5 297.1 575.7 297.2Z" stroke="#2a2a2a" stroke-width="0.7"/><path d="M577.8 285.9 C577.7 286.1 577.5 286.3 577.2 286.4 C577.0 286.4 576.6 286.4 576.3 286.3 C576.0 286.2 575.4 286.0 575.4 285.9 C575.4 285.7 575.8 285.4 576.1 285.3 C576.4 285.1 576.7 285.0 577.0 285.0 C577.2 285.0 577.5 285.3 577.7 285.4 C577.8 285.6 577.9 285.8 577.8 285.9Z" stroke="#2a2a2a" stroke-width="0.7"/><path d="M579.7 284.4 C579.7 284.6 579.3 284.9 578.9 285.0 C578.6 285.1 578.2 285.0 577.8 284.9 C577.5 284.8 577.1 284.8 576.9 284.6 C576.7 284.4 576.5 283.9 576.6 283.7 C576.8 283.6 577.6 283.7 578.0 283.7 C578.5 283.7 579.0 283.4 579.3 283.6 C579.6 283.7 579.8 284.1 579.7 284.4Z" stroke="#2a2a2a" stroke-width="0.7"/><path d="M577.5 292.7 C577.1 292.4 576.8 292.0 576.8 291.6 C576.9 291.2 577.4 290.5 578.0 290.3 C578.5 290.2 579.4 290.7 580.0 290.9 C580.6 291.1 581.6 291.2 581.7 291.6 C581.9 291.9 581.5 292.6 581.1 292.9 C580.7 293.2 579.8 293.4 579.2 293.4 C578.6 293.3 577.9 293.0 577.5 292.7Z" stroke="#2a2a2a" stroke-width="0.7"/><path d="M519.1 292.2 C518.8 292.3 518.6 292.6 518.3 292.6 C518.1 292.6 517.8 292.3 517.7 292.1 C517.6 291.9 517.6 291.8 517.7 291.6 C517.8 291.5 518.0 291.4 518.3 291.4 C518.5 291.3 519.0 291.1 519.3 291.1 C519.6 291.2 520.0 291.6 519.9 291.8 C519.9 291.9 519.3 292.0 519.1 292.2Z" stroke="#2a2a2a" stroke-width="0.7"/><path d="M525.1 291.9 C524.8 291.8 524.6 291.5 524.5 291.4 C524.4 291.2 524.2 290.9 524.3 290.7 C524.4 290.6 524.8 290.5 525.2 290.4 C525.6 290.3 526.3 290.1 526.6 290.3 C526.9 290.4 527.3 290.9 527.2 291.2 C527.2 291.4 526.6 291.7 526.3 291.8 C525.9 291.9 525.4 292.0 525.1 291.9Z" stroke="#2a2a2a" stroke-width="0.7"/><path d="M513.8 299.1 C513.5 299.0 513.1 298.8 513.0 298.6 C513.0 298.4 513.2 298.1 513.5 297.9 C513.7 297.8 514.4 297.7 514.7 297.8 C515.0 297.8 515.2 298.1 515.4 298.3 C515.5 298.5 515.8 298.9 515.7 299.0 C515.5 299.2 514.9 299.2 514.6 299.2 C514.3 299.2 514.0 299.2 513.8 299.1Z" stroke="#2a2a2a" stroke-width="0.7"/><path d="M515.9 289.2 C515.7 289.4 515.7 289.7 515.4 289.7 C515.1 289.8 514.6 289.8 514.3 289.7 C513.9 289.6 513.3 289.4 513.2 289.2 C513.1 289.0 513.4 288.6 513.7 288.3 C513.9 288.1 514.5 287.9 514.9 287.9 C515.4 287.9 516.1 288.1 516.3 288.4 C516.4 288.6 516.0 288.9 515.9 289.2Z" stroke="#2a2a2a" stroke-width="0.7"/><path d="M525.7 298.8 C525.3 298.6 525.5 298.1 525.5 297.8 C525.4 297.5 525.1 297.2 525.2 297.0 C525.4 296.8 526.3 296.6 526.7 296.6 C527.0 296.7 527.2 297.1 527.5 297.3 C527.8 297.5 528.5 297.7 528.5 298.0 C528.5 298.2 527.9 298.6 527.4 298.8 C527.0 298.9 526.0 299.0 525.7 298.8Z" stroke="#2a2a2a" stroke-width="0.7"/><path d="M525.7 297.1 C525.2 297.3 524.5 297.4 523.9 297.3 C523.3 297.3 522.3 297.1 522.0 296.8 C521.7 296.5 521.7 295.8 522.0 295.4 C522.3 295.0 523.1 294.6 523.7 294.5 C524.3 294.5 525.1 294.7 525.7 295.0 C526.2 295.2 527.0 295.7 527.0 296.0 C527.0 296.4 526.2 296.9 525.7 297.1Z" stroke="#2a2a2a" stroke-width="0.7"/><path d="M526.7 295.7 C526.6 296.0 526.5 296.2 526.3 296.3 C526.1 296.4 525.7 296.2 525.4 296.2 C525.0 296.1 524.3 296.1 524.2 295.9 C524.0 295.7 524.4 295.3 524.6 295.1 C524.9 294.9 525.3 294.7 525.7 294.7 C526.1 294.7 526.7 294.9 526.9 295.0 C527.0 295.2 526.8 295.5 526.7 295.7Z" stroke="#2a2a2a" stroke-width="0.7"/><path d="M526.1 292.7 C526.3 292.7 526.6 293.0 526.7 293.1 C526.8 293.3 526.8 293.6 526.6 293.7 C526.5 293.9 526.1 294.1 525.9 294.1 C525.6 294.1 525.4 293.8 525.2 293.7 C525.0 293.6 524.5 293.5 524.5 293.3 C524.5 293.2 524.9 293.1 525.2 292.9 C525.5 292.8 525.8 292.6 526.1 292.7Z" stroke="#2a2a2a" stroke-width="0.7"/><path d="M317.0 279.2 C317.5 279.2 318.3 279.6 318.7 279.9 C319.0 280.1 319.1 280.4 319.0 280.7 C318.9 280.9 318.6 281.2 318.2 281.4 C317.7 281.5 316.8 281.6 316.3 281.5 C315.7 281.5 315.0 281.1 314.8 280.9 C314.6 280.6 314.9 280.2 315.3 279.9 C315.7 279.7 316.4 279.3 317.0 279.2Z" stroke="#2a2a2a" stroke-width="0.7"/><path d="M321.2 283.3 C321.6 283.3 322.2 283.3 322.4 283.5 C322.5 283.6 322.3 284.1 322.2 284.3 C322.1 284.5 322.0 284.7 321.7 284.8 C321.5 284.9 321.2 285.0 320.8 284.9 C320.5 284.9 319.9 284.7 319.8 284.5 C319.7 284.2 319.8 283.7 320.0 283.5 C320.3 283.3 320.8 283.3 321.2 283.3Z" stroke="#2a2a2a" stroke-width="0.7"/><path d="M324.0 286.8 C323.9 286.4 323.3 285.8 323.6 285.6 C323.8 285.5 324.7 285.7 325.4 285.7 C326.0 285.7 326.9 285.4 327.3 285.6 C327.6 285.8 327.9 286.7 327.7 286.9 C327.4 287.2 326.4 287.2 325.9 287.3 C325.3 287.4 324.9 287.7 324.6 287.6 C324.3 287.5 324.2 287.1 324.0 286.8Z" stroke="#2a2a2a" stroke-width="0.7"/><path d="M330.2 293.2 C329.9 293.3 329.2 292.8 328.8 292.6 C328.4 292.4 327.8 292.2 327.8 292.0 C327.8 291.8 328.4 291.5 328.8 291.4 C329.2 291.2 329.5 290.9 330.0 290.9 C330.5 290.9 331.5 291.1 331.7 291.3 C331.8 291.5 331.1 291.9 330.8 292.2 C330.6 292.6 330.5 293.2 330.2 293.2Z" stroke="#2a2a2a" stroke-width="0.7"/><path d="M334.0 296.7 C333.4 296.8 332.4 296.3 332.1 296.0 C331.8 295.7 332.0 295.2 332.1 294.9 C332.3 294.6 332.5 294.5 332.8 294.3 C333.2 294.1 333.9 293.7 334.4 293.7 C334.8 293.8 335.5 294.3 335.7 294.6 C335.9 294.9 335.6 295.3 335.3 295.6 C335.0 296.0 334.5 296.7 334.0 296.7Z" stroke="#2a2a2a" stroke-width="0.7"/><path d="M337.1 299.7 C337.2 300.1 336.8 301.0 336.5 301.1 C336.1 301.3 335.5 300.8 335.0 300.7 C334.5 300.6 333.7 300.8 333.4 300.5 C333.2 300.2 333.4 299.4 333.7 298.9 C333.9 298.5 334.4 297.9 334.9 297.8 C335.3 297.8 335.8 298.4 336.1 298.7 C336.5 299.0 337.1 299.3 337.1 299.7Z" stroke="#2a2a2a" stroke-width="0.7"/><path d="M337.3 305.7 C336.8 305.4 336.6 305.0 336.7 304.8 C336.8 304.5 337.3 304.2 337.7 304.1 C338.2 304.0 338.6 303.9 339.2 303.9 C339.8 303.9 341.2 303.9 341.4 304.1 C341.7 304.4 340.9 304.9 340.6 305.3 C340.2 305.7 339.9 306.3 339.4 306.4 C338.8 306.5 337.7 306.0 337.3 305.7Z" stroke="#2a2a2a" stroke-width="0.7"/><path d="M320.8 281.4 C320.4 281.2 320.1 280.7 320.2 280.4 C320.3 280.1 320.8 279.7 321.3 279.6 C321.8 279.4 322.6 279.5 323.1 279.5 C323.7 279.6 324.5 279.8 324.7 280.1 C324.9 280.4 324.8 280.9 324.5 281.2 C324.2 281.4 323.3 281.5 322.7 281.5 C322.1 281.5 321.2 281.6 320.8 281.4Z" stroke="#2a2a2a" stroke-width="0.7"/><path d="M328.5 282.8 C328.9 282.8 329.6 283.3 329.8 283.5 C330.1 283.7 329.9 284.0 329.8 284.3 C329.8 284.6 329.9 285.4 329.6 285.5 C329.2 285.6 328.3 285.1 327.8 284.9 C327.2 284.7 326.6 284.6 326.4 284.3 C326.3 284.1 326.7 283.7 327.0 283.4 C327.3 283.2 328.0 282.8 328.5 282.8Z" stroke="#2a2a2a" stroke-width="0.7"/><path d="M330.5 289.8 C331.1 289.6 331.8 289.4 332.3 289.5 C332.9 289.5 333.5 289.9 333.6 290.1 C333.8 290.4 333.5 290.7 333.2 290.9 C332.9 291.1 332.3 291.2 331.9 291.2 C331.4 291.3 330.9 291.2 330.3 291.1 C329.8 290.9 328.5 290.6 328.6 290.4 C328.6 290.2 329.8 289.9 330.5 289.8Z" stroke="#2a2a2a" stroke-width="0.7"/><path d="M286.9 257.5 C287.1 257.6 286.8 258.0 286.6 258.2 C286.3 258.4 285.8 258.4 285.5 258.5 C285.1 258.5 284.6 258.6 284.3 258.5 C284.1 258.4 283.9 258.2 283.8 258.1 C283.7 257.9 283.7 257.7 283.9 257.6 C284.1 257.5 284.6 257.5 285.1 257.5 C285.6 257.5 286.7 257.3 286.9 257.5Z" stroke="#2a2a2a" stroke-width="0.7"/><path d="M288.3 258.6 C288.5 258.4 289.2 258.2 289.6 258.2 C290.0 258.1 290.5 258.3 290.8 258.5 C291.1 258.6 291.3 258.8 291.4 259.0 C291.4 259.2 291.2 259.5 290.9 259.6 C290.7 259.7 290.1 259.7 289.7 259.7 C289.4 259.6 289.1 259.5 288.9 259.3 C288.6 259.1 288.2 258.8 288.3 258.6Z" stroke="#2a2a2a" stroke-width="0.7"/><path d="M296.9 260.4 C297.0 260.6 297.1 260.8 297.0 261.0 C296.8 261.1 296.3 261.3 296.0 261.3 C295.6 261.3 294.9 261.2 294.7 261.1 C294.6 260.9 294.9 260.5 295.0 260.4 C295.2 260.2 295.3 260.0 295.6 259.9 C295.8 259.9 296.2 259.9 296.5 260.0 C296.7 260.0 296.8 260.2 296.9 260.4Z" stroke="#2a2a2a" stroke-width="0.7"/><path d="M303.9 257.7 C304.1 257.9 304.0 258.5 303.7 258.6 C303.4 258.7 302.5 258.6 302.1 258.5 C301.7 258.5 301.5 258.5 301.2 258.4 C300.9 258.3 300.2 258.1 300.2 257.9 C300.2 257.6 300.6 257.2 301.0 257.1 C301.4 257.0 302.1 257.1 302.6 257.3 C303.1 257.4 303.7 257.5 303.9 257.7Z" stroke="#2a2a2a" stroke-width="0.7"/><path d="M305.2 261.5 C304.8 261.4 304.7 261.0 304.9 260.8 C305.0 260.6 305.5 260.4 306.0 260.3 C306.5 260.2 307.6 260.2 308.0 260.3 C308.4 260.4 308.4 260.7 308.4 260.9 C308.4 261.1 308.3 261.2 308.0 261.3 C307.8 261.4 307.5 261.4 307.0 261.5 C306.5 261.5 305.6 261.6 305.2 261.5Z" stroke="#2a2a2a" stroke-width="0.7"/><path d="M312.9 264.6 C313.0 264.9 312.9 265.3 312.6 265.5 C312.4 265.8 311.8 266.1 311.3 266.1 C310.8 266.1 310.2 265.9 309.9 265.7 C309.5 265.5 309.1 265.1 309.2 264.9 C309.3 264.7 309.9 264.6 310.3 264.5 C310.7 264.3 311.2 263.9 311.6 263.9 C312.0 263.9 312.7 264.3 312.9 264.6Z" stroke="#2a2a2a" stroke-width="0.7"/><path d="M470.0 413.2 L473.0 413.8 L476.0 413.3 L479.0 412.9 L482.0 412.5 L485.0 412.5 L488.0 412.7 L491.0 412.6 L494.0 411.9 L497.0 411.7 L500.0 412.0 L503.0 412.5 L506.0 412.7 L509.0 412.9 L512.0 413.7 L515.0 413.5 L518.0 414.2 L521.0 414.8 L524.0 415.7 L527.0 415.7 L530.0 416.4 L533.0 415.4 L536.0 414.5 L539.0 413.9 L542.0 414.1 L545.0 413.2 L548.0 412.2 L551.0 411.3 L554.0 411.2 L557.0 410.8 L560.0 409.9 L563.1 409.7 L566.2 410.0 L569.2 410.2 L572.3 409.4 L575.4 409.1 L578.5 409.4 L581.5 409.4 L584.6 409.6 L587.7 409.0 L590.8 409.5 L593.8 409.4 L596.9 409.1 L600.0 408.7 L603.0 409.8 L606.0 409.4 L609.0 410.2 L612.0 409.9 L615.0 410.2 L618.0 411.1 L621.0 410.9 L624.0 411.9 L627.0 411.7 L630.0 412.0" stroke="#2a2a2a" stroke-width="0.7"/><path d="M480.0 429.7 L483.1 429.8 L486.2 430.0 L489.2 430.2 L492.3 430.5 L495.4 429.9 L498.5 430.1 L501.5 430.0 L504.6 430.7 L507.7 430.1 L510.8 430.0 L513.8 430.1 L516.9 430.4 L520.0 430.8 L523.1 430.7 L526.2 430.5 L529.2 430.7 L532.3 430.5 L535.4 430.0 L538.5 429.8 L541.5 430.3 L544.6 430.1 L547.7 429.4 L550.8 429.9 L553.8 429.6 L556.9 429.5 L560.0 429.4 L563.1 429.3 L566.2 429.3 L569.2 429.6 L572.3 429.7 L575.4 430.2 L578.5 429.7 L581.5 430.4 L584.6 429.9 L587.7 430.1 L590.8 430.5 L593.8 430.6 L596.9 430.4 L600.0 430.1 L603.1 430.4 L606.2 430.3 L609.2 430.7 L612.3 430.1 L615.4 430.2 L618.5 430.6 L621.5 429.9 L624.6 430.1 L627.7 430.4 L630.8 430.3 L633.8 429.7 L636.9 429.7 L640.0 430.0" stroke="#2a2a2a" stroke-width="0.7"/></g>
</svg>
<!-- launcher -->
<div id="launcher"><div class="tile" style="top:6px;"><svg width="36" height="36" viewBox="0 0 37 37">
<defs><linearGradient id="tg0" x1="0" y1="0" x2="0" y2="1"><stop offset="0" stop-color="#8b5a36"/><stop offset="1" stop-color="#6d4325"/></linearGradient>
<radialGradient id="th0" cx=".5" cy="0" r=".75"><stop offset="0" stop-color="#fff" stop-opacity=".35"/><stop offset="1" stop-color="#fff" stop-opacity="0"/></radialGradient></defs>
<rect x="0" y="0" width="37" height="37" rx="3.6" fill="url(#tg0)"/>
<rect x="0" y="0" width="37" height="20" rx="3.6" fill="url(#th0)"/>
<rect x=".5" y=".5" width="36" height="36" rx="3.6" fill="none" stroke="rgba(255,255,255,.18)" stroke-width="1"/>

<circle cx="18" cy="18.5" r="10.2" fill="#fdfcfb"/>
<circle cx="18" cy="18.5" r="5" fill="none" stroke="#7a4a28" stroke-width="2.2"/>
<g stroke="#fdfcfb" stroke-width="1.6"><line x1="18" y1="18.5" x2="26" y2="18.5"/><line x1="18" y1="18.5" x2="14" y2="11.6"/><line x1="18" y1="18.5" x2="14" y2="25.4"/></g>
<circle cx="10.8" cy="18.5" r="1.7" fill="#7a4a28"/><circle cx="21.6" cy="12.3" r="1.7" fill="#7a4a28"/><circle cx="21.6" cy="24.7" r="1.7" fill="#7a4a28"/>

</svg></div><div class="tile" style="top:49px;"><svg width="36" height="36" viewBox="0 0 37 37">
<defs><linearGradient id="tg1" x1="0" y1="0" x2="0" y2="1"><stop offset="0" stop-color="#bb754c"/><stop offset="1" stop-color="#a85f38"/></linearGradient>
<radialGradient id="th1" cx=".5" cy="0" r=".75"><stop offset="0" stop-color="#fff" stop-opacity=".35"/><stop offset="1" stop-color="#fff" stop-opacity="0"/></radialGradient></defs>
<rect x="0" y="0" width="37" height="37" rx="3.6" fill="url(#tg1)"/>
<rect x="0" y="0" width="37" height="20" rx="3.6" fill="url(#th1)"/>
<rect x=".5" y=".5" width="36" height="36" rx="3.6" fill="none" stroke="rgba(255,255,255,.28)" stroke-width="1"/>

<defs><linearGradient id="fo" x1="0" y1="0" x2="1" y2="1"><stop offset="0" stop-color="#f9a066"/><stop offset=".5" stop-color="#f07a3a"/><stop offset="1" stop-color="#e04e16"/></linearGradient></defs>
<path d="M4.5 9.5 q0-1 1-1 h9.5 l1.8 1.8 h14.2 q1 0 1 1 v4 h-27.5z" fill="#f4f4f2" stroke="#d8d4cf" stroke-width=".5"/>
<rect x="6.3" y="10.2" width="7" height="1" fill="#f08a4a"/>
<path d="M3.6 14.5 h29.8 l-.6 16.3 q0 .8-.9 .8 h-26.8 q-.9 0-.9-.8z" fill="url(#fo)" stroke="#d4561f" stroke-width=".6"/>
<path d="M4.4 15.2 h28.2" stroke="#fbb58a" stroke-width=".8"/>

</svg></div><div class="tile" style="top:92px;"><svg width="36" height="36" viewBox="0 0 37 37">
<defs><linearGradient id="tg2" x1="0" y1="0" x2="0" y2="1"><stop offset="0" stop-color="#b9794b"/><stop offset="1" stop-color="#a8683a"/></linearGradient>
<radialGradient id="th2" cx=".5" cy="0" r=".75"><stop offset="0" stop-color="#fff" stop-opacity=".35"/><stop offset="1" stop-color="#fff" stop-opacity="0"/></radialGradient></defs>
<rect x="0" y="0" width="37" height="37" rx="3.6" fill="url(#tg2)"/>
<rect x="0" y="0" width="37" height="20" rx="3.6" fill="url(#th2)"/>
<rect x=".5" y=".5" width="36" height="36" rx="3.6" fill="none" stroke="rgba(255,255,255,.28)" stroke-width="1"/>

<defs><radialGradient id="ffg" cx=".5" cy=".25" r=".8"><stop offset="0" stop-color="#5ec2f2"/><stop offset=".5" stop-color="#2183d0"/><stop offset="1" stop-color="#0e2a78"/></radialGradient>
<linearGradient id="ffo" x1="0" y1="0" x2=".8" y2="1"><stop offset="0" stop-color="#ff9f2e"/><stop offset=".55" stop-color="#f4661c"/><stop offset="1" stop-color="#d83a12"/></linearGradient></defs>
<circle cx="19.500" cy="16.500" r="13.2" fill="url(#ffg)"/>
<path d="M5.200 8.500 q.8 1.300 2.400 1.600 q1.600-3.600 5.600-5.400 q-.6 1.800 0 3.200 q2.800 .2 4 1.800 q-2.400 .6-3 2.200 q.4 2.200 2.600 2.400 l4.400 .6 q-.8 3.200-4.600 3 q-1.400-.2-2.400-1 q1.200 4.800 6.200 5 q5.200 .2 7.800-4.600 q1.600-3.400 .6-7.200 q2.400 2.600 2.600 6.200 q.8-1.400 .6-3.400 q1.800 5-.6 10 q-2.600 5.400-8.200 7.400 q-6.200 2-12-1 q-5.600-3.200-7.200-9.400 q-1.400-6 1.200-11.400z" fill="url(#ffo)"/>
<path d="M27.500 5.500 q4.200 3.400 4.800 8.500 q-1.700-2.800-4-4z M31.800 17.500 q.4 3.400-.8 6.200 q-.2-2.800-1.600-4.600z M29 11.500 q2 2.600 2 6 q-1.200-2.600-2.800-3.600z" fill="#ffd93a"/>

</svg></div><div class="tile" style="top:135px;"><svg width="36" height="36" viewBox="0 0 37 37">
<defs><linearGradient id="tg3" x1="0" y1="0" x2="0" y2="1"><stop offset="0" stop-color="#4f8bc9"/><stop offset="1" stop-color="#3a6fae"/></linearGradient>
<radialGradient id="th3" cx=".5" cy="0" r=".75"><stop offset="0" stop-color="#fff" stop-opacity=".35"/><stop offset="1" stop-color="#fff" stop-opacity="0"/></radialGradient></defs>
<rect x="0" y="0" width="37" height="37" rx="3.6" fill="url(#tg3)"/>
<rect x="0" y="0" width="37" height="20" rx="3.6" fill="url(#th3)"/>
<rect x=".5" y=".5" width="36" height="36" rx="3.6" fill="none" stroke="rgba(255,255,255,.28)" stroke-width="1"/>

<circle cx="18.5" cy="19.5" r="13.8" fill="#5b92cf" opacity=".55"/>
<path d="M18.500 19.500 L6.700 12.300 A13.800 13.800 0 0 1 32.300 19.500 Z" fill="#5f97d3"/>
<path d="M18.500 19.500 L32.300 19.500 A13.800 13.800 0 0 1 18.500 33.300 Z" fill="#cfe1f3"/>
<path d="M6.700 12.300 A13.800 13.800 0 0 0 18.500 33.300 L24.500 23 L12.500 23 Z" fill="#a9cbe9"/>
<path d="M32.300 19.500 A13.800 13.800 0 0 1 18.500 33.300 L24.800 22.800 Z" fill="#d6e6f5"/>
<circle cx="18.500" cy="19.200" r="6.200" fill="#f1f6fb"/>
<circle cx="18.500" cy="19.200" r="5" fill="#4d8bd2"/>

</svg></div><div class="tile" style="top:178px;"><svg width="36" height="36" viewBox="0 0 37 37">
<defs><linearGradient id="tg4" x1="0" y1="0" x2="0" y2="1"><stop offset="0" stop-color="#bdbbb9"/><stop offset="1" stop-color="#a19f9d"/></linearGradient>
<radialGradient id="th4" cx=".5" cy="0" r=".75"><stop offset="0" stop-color="#fff" stop-opacity=".35"/><stop offset="1" stop-color="#fff" stop-opacity="0"/></radialGradient></defs>
<rect x="0" y="0" width="37" height="37" rx="3.6" fill="url(#tg4)"/>
<rect x="0" y="0" width="37" height="20" rx="3.6" fill="url(#th4)"/>
<rect x=".5" y=".5" width="36" height="36" rx="3.6" fill="none" stroke="rgba(255,255,255,.45)" stroke-width="1"/>

<defs><linearGradient id="tsc" x1="0" y1="0" x2="0" y2="1"><stop offset="0" stop-color="#4a4a4a"/><stop offset="1" stop-color="#232323"/></linearGradient></defs>
<rect x="3.600" y="8.300" width="29.500" height="24" rx="1" fill="#e9e9e8" stroke="#8d8b89" stroke-width=".7"/>
<rect x="6.200" y="10.800" width="24.300" height="18.700" fill="url(#tsc)" stroke="#1b1b1b" stroke-width=".6"/>
<path d="M9.200 14.300 l4.300 2.300 l-4.300 2.300" fill="none" stroke="#fff" stroke-width="1.500"/>
<rect x="14.500" y="20" width="5" height="1.400" fill="#fff"/>

</svg></div><div class="tile" style="top:221px;"><svg width="36" height="36" viewBox="0 0 37 37">
<defs><linearGradient id="tg5" x1="0" y1="0" x2="0" y2="1"><stop offset="0" stop-color="#bcbab8"/><stop offset="1" stop-color="#a5a3a1"/></linearGradient>
<radialGradient id="th5" cx=".5" cy="0" r=".75"><stop offset="0" stop-color="#fff" stop-opacity=".35"/><stop offset="1" stop-color="#fff" stop-opacity="0"/></radialGradient></defs>
<rect x="0" y="0" width="37" height="37" rx="3.6" fill="url(#tg5)"/>
<rect x="0" y="0" width="37" height="20" rx="3.6" fill="url(#th5)"/>
<rect x=".5" y=".5" width="36" height="36" rx="3.6" fill="none" stroke="rgba(255,255,255,.45)" stroke-width="1"/>

<defs><linearGradient id="lod" x1="0" y1="0" x2="0" y2="1"><stop offset="0" stop-color="#ffffff"/><stop offset="1" stop-color="#dcdcdc"/></linearGradient></defs>
<path d="M6.300 4 h13.500 l10.500 10.500 v18.500 q0 .8-.8 .8 h-23.200 q-.8 0-.8-.8 v-28.200 q0-.8 .8-.8z" fill="url(#lod)" stroke="#484848" stroke-width="1.700" stroke-linejoin="round"/>
<path d="M23.500 2.800 h7.300 v7.300z" fill="#7d7d7d"/>

</svg></div><div class="tile" style="top:264px;"><svg width="36" height="36" viewBox="0 0 37 37">
<defs><linearGradient id="tg6" x1="0" y1="0" x2="0" y2="1"><stop offset="0" stop-color="#d42a2a"/><stop offset="1" stop-color="#a01818"/></linearGradient>
<radialGradient id="th6" cx=".5" cy="0" r=".75"><stop offset="0" stop-color="#fff" stop-opacity=".35"/><stop offset="1" stop-color="#fff" stop-opacity="0"/></radialGradient></defs>
<rect x="0" y="0" width="37" height="37" rx="3.6" fill="url(#tg6)"/>
<rect x="0" y="0" width="37" height="20" rx="3.6" fill="url(#th6)"/>
<rect x=".5" y=".5" width="36" height="36" rx="3.6" fill="none" stroke="rgba(255,170,170,.55)" stroke-width="1"/>

<defs><radialGradient id="arg" cx=".15" cy=".1" r="1.1"><stop offset="0" stop-color="#ff2626"/><stop offset=".5" stop-color="#b80d12"/><stop offset="1" stop-color="#6e070b"/></radialGradient></defs>
<rect x="3" y="3" width="31" height="31" rx="1" fill="url(#arg)"/>
<path d="M17.200 8.500 q-1.300 .2-.8 3 q.8 4.500 5 7.500 q4.500 2.500 8.500 2.300 q2.200-.6.5-1.800 q-3.500-1.700-9.500-.5 q-5.500 1.200-9.500 4.500 q-2.500 2.300-2.600 3.600 q.6 1 2.800-1.300 q3.600-3.800 6-10 q1.200-3.600 .8-6 q-.2-1.300-1.200-1.300z" fill="none" stroke="#fbeeee" stroke-width="1.100"/>

</svg></div><div class="tile" style="top:307px;"><svg width="36" height="36" viewBox="0 0 37 37">
<defs><linearGradient id="tg7" x1="0" y1="0" x2="0" y2="1"><stop offset="0" stop-color="#c98560"/><stop offset="1" stop-color="#b06640"/></linearGradient>
<radialGradient id="th7" cx=".5" cy="0" r=".75"><stop offset="0" stop-color="#fff" stop-opacity=".35"/><stop offset="1" stop-color="#fff" stop-opacity="0"/></radialGradient></defs>
<rect x="0" y="0" width="37" height="37" rx="3.6" fill="url(#tg7)"/>
<rect x="0" y="0" width="37" height="20" rx="3.6" fill="url(#th7)"/>
<rect x=".5" y=".5" width="36" height="36" rx="3.6" fill="none" stroke="rgba(255,255,255,.28)" stroke-width="1"/>

<defs><linearGradient id="bag" x1="0" y1="0" x2="1" y2="1"><stop offset="0" stop-color="#f4822f"/><stop offset="1" stop-color="#dc4f16"/></linearGradient>
<radialGradient id="spk" cx=".5" cy=".5" r=".5"><stop offset="0" stop-color="#fff" stop-opacity="1"/><stop offset="1" stop-color="#fff" stop-opacity="0"/></radialGradient></defs>
<ellipse cx="17" cy="12" rx="12" ry="7" fill="url(#spk)"/>
<path d="M7 14 l20.500 1 l1.500 17.500 l-22.500-2.500z" fill="url(#bag)"/>
<path d="M27.500 15 l1.500 17.500 l-1.800-.2 l-1.200-17.400z" fill="#c8430f"/>
<path d="M14.500 15.500 v-3 h4 v3" fill="none" stroke="#e8601c" stroke-width="1.200"/>
<circle cx="10.500" cy="8" r="2" fill="#7a9cc8"/><circle cx="20.500" cy="5.500" r="2.200" fill="#c8d4e0"/><circle cx="24.500" cy="9" r="1.800" fill="#d0c8b0"/><circle cx="16.500" cy="9.500" r="1.500" fill="#8aa0c0"/><circle cx="9.500" cy="12" r="1.300" fill="#b0b8c0"/><circle cx="27.500" cy="6" r="1" fill="#fff"/>

</svg></div><div class="tile" style="top:350px;"><svg width="36" height="36" viewBox="0 0 37 37">
<defs><linearGradient id="tg8" x1="0" y1="0" x2="0" y2="1"><stop offset="0" stop-color="#c4714c"/><stop offset="1" stop-color="#b05a36"/></linearGradient>
<radialGradient id="th8" cx=".5" cy="0" r=".75"><stop offset="0" stop-color="#fff" stop-opacity=".35"/><stop offset="1" stop-color="#fff" stop-opacity="0"/></radialGradient></defs>
<rect x="0" y="0" width="37" height="37" rx="3.6" fill="url(#tg8)"/>
<rect x="0" y="0" width="37" height="20" rx="3.6" fill="url(#th8)"/>
<rect x=".5" y=".5" width="36" height="36" rx="3.6" fill="none" stroke="rgba(255,255,255,.28)" stroke-width="1"/>

<defs><linearGradient id="uo" x1="0" y1="0" x2="0" y2="1"><stop offset="0" stop-color="#f57a45"/><stop offset="1" stop-color="#e8501c"/></linearGradient></defs>
<rect x="5.800" y="6.300" width="24.700" height="24.200" rx="1.200" fill="url(#uo)" stroke="#f9956a" stroke-width=".7"/>
<path d="M11.200 9.800 h4.300 l.2 2.500 h2.300 v9.500 q0 2 2.200 2 q2.300 0 2.300-2 v-12 h2.800 v13 q0 4.800-5.100 4.800 q-9 0-9-7.800z" fill="#fbf4ef"/>

</svg></div><div class="tile" style="top:393px;"><svg width="36" height="36" viewBox="0 0 37 37">
<defs><linearGradient id="tg9" x1="0" y1="0" x2="0" y2="1"><stop offset="0" stop-color="#bf5555"/><stop offset="1" stop-color="#a83c3c"/></linearGradient>
<radialGradient id="th9" cx=".5" cy="0" r=".75"><stop offset="0" stop-color="#fff" stop-opacity=".35"/><stop offset="1" stop-color="#fff" stop-opacity="0"/></radialGradient></defs>
<rect x="0" y="0" width="37" height="37" rx="3.6" fill="url(#tg9)"/>
<rect x="0" y="0" width="37" height="20" rx="3.6" fill="url(#th9)"/>
<rect x=".5" y=".5" width="36" height="36" rx="3.6" fill="none" stroke="rgba(255,255,255,.28)" stroke-width="1"/>

<g transform="translate(18.500 19)"><g fill="#e9e9e9">
<circle r="10.500"/>
<rect x="-3" y="-14" width="6" height="6" rx=".8" transform="rotate(0)"/><rect x="-3" y="-14" width="6" height="6" rx=".8" transform="rotate(45)"/><rect x="-3" y="-14" width="6" height="6" rx=".8" transform="rotate(90)"/><rect x="-3" y="-14" width="6" height="6" rx=".8" transform="rotate(135)"/><rect x="-3" y="-14" width="6" height="6" rx=".8" transform="rotate(180)"/><rect x="-3" y="-14" width="6" height="6" rx=".8" transform="rotate(225)"/><rect x="-3" y="-14" width="6" height="6" rx=".8" transform="rotate(270)"/><rect x="-3" y="-14" width="6" height="6" rx=".8" transform="rotate(315)"/></g><circle r="6.500" fill="#d6d6d6"/><circle r="5.500" fill="#e4e4e4"/></g>
<path d="M6.500 30.500 l13-14" stroke="#c41e1e" stroke-width="4.200" stroke-linecap="round"/>
<path d="M6.800 29.800 l12.500-13.500" stroke="#ea5a5a" stroke-width="1.200" stroke-linecap="round"/>
<path d="M19 17.500 q-3-4 .5-7.500 q2.500-2 5-1.200 l-3.200 3.400 l1 3 l3 .8 l3.300-3.300 q.8 3-1.500 5.300 q-3.300 3-8.100-.5z" fill="#f2f2f2" stroke="#b8b8b8" stroke-width=".5"/>

</svg></div><div class="tile" style="top:436px;"><svg width="36" height="36" viewBox="0 0 37 37">
<defs><linearGradient id="tg10" x1="0" y1="0" x2="0" y2="1"><stop offset="0" stop-color="#c08f5c"/><stop offset="1" stop-color="#a06c38"/></linearGradient>
<radialGradient id="th10" cx=".5" cy="0" r=".75"><stop offset="0" stop-color="#fff" stop-opacity=".35"/><stop offset="1" stop-color="#fff" stop-opacity="0"/></radialGradient></defs>
<rect x="0" y="0" width="37" height="37" rx="3.6" fill="url(#tg10)"/>
<rect x="0" y="0" width="37" height="20" rx="3.6" fill="url(#th10)"/>
<rect x=".5" y=".5" width="36" height="36" rx="3.6" fill="none" stroke="rgba(255,255,255,.28)" stroke-width="1"/>

<defs><linearGradient id="vc" x1="0" y1="0" x2="1" y2="0"><stop offset="0" stop-color="#f08a1c"/><stop offset=".5" stop-color="#ff9d2e"/><stop offset="1" stop-color="#e06a0c"/></linearGradient></defs>
<path d="M7 27.500 l23 0 l2 5 h-27z" fill="#f5901e"/><path d="M5 32.500 h27 v1 h-27z" fill="#e87410"/>
<path d="M16.500 5 q2-1.500 4 0 l7 23 q-9 3.500-18 0z" fill="url(#vc)"/>
<path d="M14.800 10.500 q3.700 1.300 7.400 0 l1.300 4.400 q-5 1.800-10 0z" fill="#e8e8e8"/>
<path d="M12.200 19 q6.300 2.300 12.600 0 l1.500 5 q-7.800 2.800-15.600 0z" fill="#e8e8e8"/>

</svg></div><div class="tile" style="top:479px;"><svg width="36" height="36" viewBox="0 0 37 37">
<defs><linearGradient id="tg11" x1="0" y1="0" x2="0" y2="1"><stop offset="0" stop-color="#73b84c"/><stop offset="1" stop-color="#5c9c38"/></linearGradient>
<radialGradient id="th11" cx=".5" cy="0" r=".75"><stop offset="0" stop-color="#fff" stop-opacity=".35"/><stop offset="1" stop-color="#fff" stop-opacity="0"/></radialGradient></defs>
<rect x="0" y="0" width="37" height="37" rx="3.6" fill="url(#tg11)"/>
<rect x="0" y="0" width="37" height="20" rx="3.6" fill="url(#th11)"/>
<rect x=".5" y=".5" width="36" height="36" rx="3.6" fill="none" stroke="rgba(255,255,255,.28)" stroke-width="1"/>

<path d="M6.500 8.500 q0-1 1-1 h15.500 q1 0 1 1 v18.500 l-7.500 4.500 l-2-2.500 l-8-2z" fill="#1f8f22" stroke="#e4f6de" stroke-width=".7"/>
<path d="M8 9 h15 v2 h-15z" fill="#46b03e"/>
<path d="M10.500 12 h13 v14.500 l-6.500 3.800 l-1.700-2.300 l-4.800-1.200z" fill="#52bb4a" stroke="#e4f6de" stroke-width=".6"/>
<path d="M17.500 16 h6 v10 l-6 3.500z" fill="#7ad070" opacity=".8"/>
<path d="M17 30.800 l-1.800-2.600 l-5.200-1.300 z" fill="#0f6a14"/>
<text x="8.600" y="25.300" font-family="Liberation Sans, sans-serif" font-weight="bold" font-size="12" fill="#f6fff2">e</text>
<path d="M29.800 8.200 l2 2 l-11 11.800 l-3 1.200 l1-3z" fill="#e6b070" stroke="#b8843c" stroke-width=".5"/>
<path d="M17.800 23.200 l1-3 l2 2z" fill="#f4e6c8"/><path d="M17.800 23.200 l.4-1.200 l.8 .8z" fill="#444"/>

</svg></div><div style="position:absolute;left:4px;top:520px;width:40px;height:40px;border-radius:6px;background:rgba(214,128,66,.6);box-shadow:0 0 3px 1px rgba(225,130,60,.35)"></div><div class="tile" style="top:522px;"><svg width="36" height="36" viewBox="0 0 37 37">
<defs><linearGradient id="tg12" x1="0" y1="0" x2="0" y2="1"><stop offset="0" stop-color="#cdb088"/><stop offset="1" stop-color="#b08a58"/></linearGradient>
<radialGradient id="th12" cx=".5" cy="0" r=".75"><stop offset="0" stop-color="#fff" stop-opacity=".35"/><stop offset="1" stop-color="#fff" stop-opacity="0"/></radialGradient></defs>
<rect x="0" y="0" width="37" height="37" rx="3.6" fill="url(#tg12)"/>
<rect x="0" y="0" width="37" height="20" rx="3.6" fill="url(#th12)"/>
<rect x=".5" y=".5" width="36" height="36" rx="3.6" fill="none" stroke="rgba(235,160,100,.7)" stroke-width="1"/>

<defs><linearGradient id="ua" x1="0" y1="0" x2="0" y2="1"><stop offset="0" stop-color="#f89a6a"/><stop offset="1" stop-color="#ea4a14"/></linearGradient></defs>
<rect x="2.500" y="14" width="32" height="20.500" fill="#c9a878"/>
<rect x="2.500" y="14" width="32" height="3" fill="#dcc29a"/>
<path d="M25.500 16.500 l7.500 8 h-3.800 v10 h-7.400 v-10 h-3.800z" fill="url(#ua)" stroke="#d23a0c" stroke-width=".9"/>
<rect x="3.800" y=".8" width="30.400" height="14.400" rx="7.200" fill="#4f4f52" stroke="#fff" stroke-width="1.600"/>
<text x="19" y="12.400" text-anchor="middle" font-family="Liberation Sans, sans-serif" font-size="11.500" fill="#f4f4f4">132</text>

</svg></div><div class="tile" style="top:565px;"><svg width="36" height="36" viewBox="0 0 37 37">
<defs><linearGradient id="tg13" x1="0" y1="0" x2="0" y2="1"><stop offset="0" stop-color="#cbc5c3"/><stop offset="1" stop-color="#b3adab"/></linearGradient>
<radialGradient id="th13" cx=".5" cy="0" r=".75"><stop offset="0" stop-color="#fff" stop-opacity=".35"/><stop offset="1" stop-color="#fff" stop-opacity="0"/></radialGradient></defs>
<rect x="0" y="0" width="37" height="37" rx="3.6" fill="url(#tg13)"/>
<rect x="0" y="0" width="37" height="20" rx="3.6" fill="url(#th13)"/>
<rect x=".5" y=".5" width="36" height="36" rx="3.6" fill="none" stroke="rgba(255,255,255,.5)" stroke-width="1"/>

<rect x="7" y="5" width="22.500" height="27" fill="#fbfbfb" stroke="#c4c0be" stroke-width=".6"/>
<rect x="7" y="30.500" width="22.500" height="2" fill="#d8d4d2"/>
<line x1="10.300" y1="5.500" x2="10.300" y2="31" stroke="#f0a0a0" stroke-width=".7"/>
<g stroke="#9a9a9a" stroke-width=".7"><line x1="11.500" y1="9.500" x2="25" y2="9.500"/><line x1="11.500" y1="11.800" x2="24" y2="11.800"/><line x1="11.500" y1="14.100" x2="22" y2="14.100"/><line x1="11.500" y1="16.400" x2="25" y2="16.400"/><line x1="11.500" y1="18.700" x2="21" y2="18.700"/><line x1="11.500" y1="21" x2="20" y2="21"/><line x1="11.500" y1="23.300" x2="24" y2="23.300"/><line x1="11.500" y1="25.600" x2="18" y2="25.600"/><line x1="11.500" y1="27.900" x2="22" y2="27.900"/></g>
<path d="M30.500 12.500 l2.500 2.800 l-13.500 11.500 l-2.500-2.800z" fill="#2b2b2b"/>
<path d="M30.500 12.500 q1.800-1.500 3 0 q1.200 1.500-.5 2.800z" fill="#e890d0"/>
<path d="M17 24 l2.500 2.800 l-3.800 1.400z" fill="#f0e070"/><path d="M15.700 28.200 l1-1.500 l.8 .9z" fill="#222"/>

</svg></div><div class="tile" style="top:608px;"><svg width="36" height="36" viewBox="0 0 37 37">
<defs><linearGradient id="tg14" x1="0" y1="0" x2="0" y2="1"><stop offset="0" stop-color="#d0c4d2"/><stop offset="1" stop-color="#b8aabb"/></linearGradient>
<radialGradient id="th14" cx=".5" cy="0" r=".75"><stop offset="0" stop-color="#fff" stop-opacity=".35"/><stop offset="1" stop-color="#fff" stop-opacity="0"/></radialGradient></defs>
<rect x="0" y="0" width="37" height="37" rx="3.6" fill="url(#tg14)"/>
<rect x="0" y="0" width="37" height="20" rx="3.6" fill="url(#th14)"/>
<rect x=".5" y=".5" width="36" height="36" rx="3.6" fill="none" stroke="rgba(255,255,255,.5)" stroke-width="1"/>

<defs><linearGradient id="jv" x1="0" y1="0" x2="0" y2="1"><stop offset="0" stop-color="#f4f4fa"/><stop offset="1" stop-color="#c9c9d4"/></linearGradient></defs>
<rect x="3" y="3.500" width="31" height="30" rx="4" fill="url(#jv)" stroke="#4a6a8a" stroke-width=".8"/>
<ellipse cx="19" cy="30.500" rx="10" ry="1.800" fill="#9a9aa6" opacity=".6"/>
<path d="M19.800 5 q4.800 5 8.200 13.500 l-15 .5 q2-8.500 6.800-14z" fill="#1c1c20"/>
<path d="M13 18 q7-2.800 15 .3 q1.600 7 .6 11.200 q-1.300 1.800-3.400 .4 q-2.200-1.300-4.200 .3 q-2.600 1.700-4.600-.3 q-3.200-5.600-3.400-11.900z" fill="#fbfbfb" stroke="#b4b4bc" stroke-width=".5"/>
<circle cx="19.300" cy="15.800" r="3.700" fill="#e8202a"/><circle cx="18.300" cy="14.600" r="1.200" fill="#ff9090"/>
<path d="M27.800 19.500 q2.600 .8 3-1.800 l.2-2.800 q1.300-.3 1.100 1.400 l-.2 2.600 q.6 2.600-1.800 3.800 q-1.500.5-2.300-.6z" fill="#1c1c20"/>
<path d="M13.200 19.200 q-4.200-2.600-8.200 .8 q.8 3.200 4 3.800 q3-.4 4.200-2.400z" fill="#2a3850"/><path d="M6.800 19.600 q3-2 6-.5 q-3 2-6 .5z" fill="#7ab8f0"/>

</svg></div><div class="tile" style="top:651px;"><svg width="36" height="36" viewBox="0 0 37 37">
<defs><linearGradient id="tg15" x1="0" y1="0" x2="0" y2="1"><stop offset="0" stop-color="#56a5c4"/><stop offset="1" stop-color="#3f8cb0"/></linearGradient>
<radialGradient id="th15" cx=".5" cy="0" r=".75"><stop offset="0" stop-color="#fff" stop-opacity=".35"/><stop offset="1" stop-color="#fff" stop-opacity="0"/></radialGradient></defs>
<rect x="0" y="0" width="37" height="37" rx="3.6" fill="url(#tg15)"/>
<rect x="0" y="0" width="37" height="20" rx="3.6" fill="url(#th15)"/>
<rect x=".5" y=".5" width="36" height="36" rx="3.6" fill="none" stroke="rgba(255,255,255,.28)" stroke-width="1"/>

<path d="M6 9.500 q3.500-6.500 11-5 q9.500-.5 12.500 8 q4 8-1 13.500 q-2 6.500-8.500 7 q-6.500 0-10-5.500 q-6.500-4.500-6.500-10.500 q0-4 2.500-7.500z" fill="#12a8ea"/>
<text x="18.500" y="28.300" text-anchor="middle" font-family="Liberation Sans, sans-serif" font-weight="bold" font-size="26" fill="#fff">S</text>

</svg></div>
<svg style="position:absolute;left:0;top:688px" width="49" height="56" viewBox="0 712 49 56">
<path d="M8 714 h31.500 l3.500 17.500 h-38z" fill="#c5464d"/><path d="M8 714 h31.500 l.3 1.500 h-32.100z" fill="#dd7a80"/>
<path d="M13 715.700 h22.500 q1.200 0 1.400 1.200 l1.600 10.800 q.1 1.300-1.200 1.300 h-25.600 q-1.300 0-1.100-1.300 l1.100-10.800 q.2-1.200 1.300-1.200z" fill="#f4f2f2"/>
<path d="M15 724.500 q1-7 9-7.500 q5 .5 3.500 3.500 q-2 3-7 2.500 q6 2 13.500-2" fill="none" stroke="#e2555c" stroke-width="1"/>
<path d="M14 726.800 h20" stroke="#cfcaca" stroke-width=".7"/>
<path d="M6.800 731.500 h35.400 l.8 13.500 h-38z" fill="#c6c3c0"/>
<path d="M11.200 731.500 h25.600 l.6 9.500 q0 1.300-1.300 1.300 h-24.200 q-1.300 0-1.300-1.300z" fill="#8a8a8a"/>
<path d="M11.200 731.500 h25.600 l.1 2 h-25.800z" fill="#767676"/>
<text x="24" y="741.500" text-anchor="middle" font-family="Liberation Sans, sans-serif" font-weight="bold" font-size="11" fill="#6a6a6a">?</text>
<path d="M6 745.200 h37 l.7 10.600 h-38.400z" fill="#a5663a"/><path d="M6 745.200 h37 l.1 1.300 h-37.200z" fill="#bf875a"/>
<path d="M13 745.200 v5 h21.600 v-5 M23.800 745.200 v5" fill="none" stroke="#f4ece6" stroke-width=".9"/>
<path d="M5.500 756.200 h38 l.7 12 h-39.400z" fill="#9c5f35"/><path d="M5.500 756.200 h38 l.1 1.200 h-38.200z" fill="#b57f50"/>
<rect x="15" y="756.500" width="19" height="8" fill="#dcdad4"/><path d="M15 758 h19 M15 760.500 h19 M15 763 h19" stroke="#f6f5f2" stroke-width="1" stroke-dasharray="2 1.500"/>
<path d="M0 722.800 h3 l2 1.600 l-2 1.600 h-3z M0 727.400 h3 l2 1.600 l-2 1.600 h-3z" fill="#e8e2dc"/>
<path d="M0 736.500 l4.600 3.600 l-4.600 3.600z" fill="#e8e2dc"/><path d="M47.800 736.500 l-4.600 3.600 l4.600 3.600z" fill="#e8e2dc"/>
</svg><svg style="position:absolute;left:0;top:63.5px" width="6" height="8"><path d="M0 0 l4.500 4 l-4.500 4z" fill="#e8e2dc"/></svg><svg style="position:absolute;left:0;top:106.5px" width="6" height="8"><path d="M0 0 l4.500 4 l-4.500 4z" fill="#e8e2dc"/></svg><svg style="position:absolute;left:0;top:192.5px" width="6" height="8"><path d="M0 0 l4.500 4 l-4.500 4z" fill="#e8e2dc"/></svg><svg style="position:absolute;left:0;top:536.5px" width="6" height="8"><path d="M0 0 l4.500 4 l-4.500 4z" fill="#58b4e4"/></svg><svg style="position:absolute;left:0;top:579.5px" width="6" height="8"><path d="M0 0 l4.500 4 l-4.500 4z" fill="#e8e2dc"/></svg><svg style="position:absolute;left:0;top:622.5px" width="6" height="8"><path d="M0 0 l4.500 4 l-4.500 4z" fill="#e8e2dc"/></svg></div>
<!-- top panel -->
<div id="panel"><span id="ptitle" style="letter-spacing:0.111px">plot_x11</span><svg style="position:absolute;left:1040px;top:0" width="326" height="24" viewBox="1040 0 326 24">
<g fill="#dfdbd2">
<!-- mail -->
<rect x="1058" y="6" width="19" height="12.500" rx="1"/>
<path d="M1059 7 l8.500 6 l8.500-6 M1059 17.500 l6.300-5.700 M1076 17.500 l-6.300-5.700" fill="none" stroke="#3c3b37" stroke-width="1.200"/>
<!-- battery -->
<rect x="1090.300" y="6.300" width="17.600" height="10.400" rx="2" fill="none" stroke="#dfdbd2" stroke-width="1.300"/><rect x="1108.500" y="9" width="1.800" height="5"/>
<rect x="1092" y="8" width="14.200" height="7"/><path d="M1094.500 8.800 l6.500 2.400 l-1.200 1.300 l5.400 2 l-7-1.600 l1.200-1.500z" fill="#3c3b37" stroke="#3c3b37" stroke-width=".5"/>
<!-- bluetooth -->
<path d="M1121.300 7.800 l7.200 7.400 l-3.700 4 v-15 l3.700 4 l-7.200 7.400" fill="none" stroke="#dfdbd2" stroke-width="1.300"/>
<!-- network -->
<path d="M1147.500 3.500 l4.700 6 h-2.700 v6.500 h-4 v-6.500 h-2.700z"/><path d="M1155.500 21.500 l-5-6.300 h2.800 v-6.700 h4.200 v6.700 h2.800z"/>
<!-- volume -->
<path d="M1174.700 9.500 h3 l4.500-4.200 v13.400 l-4.500-4.200 h-3z"/>
<path d="M1184.500 8.500 q2.500 3.500 0 7" fill="none" stroke="#dfdbd2" stroke-width="1.400"/><path d="M1187.500 6.300 q4 5.700 0 11.400" fill="none" stroke="#c9c5bc" stroke-width="1.300"/><path d="M1190.800 4 q5.500 8 0 16" fill="none" stroke="#8e8b84" stroke-width="1.200"/>
<!-- user -->
<circle cx="1281" cy="8.500" r="3.600"/><path d="M1275 18.500 q0-6 6-6 q6 0 6 6z"/>
<!-- power -->
<circle cx="1350" cy="12.3" r="4.900" fill="none" stroke="#dfdbd2" stroke-width="2.300"/>
<g stroke="#dfdbd2" stroke-width="3"><line x1="1355.8" y1="12.3" x2="1358.2" y2="12.3"/><line x1="1354.1" y1="16.4" x2="1355.8" y2="18.1"/><line x1="1350.0" y1="18.1" x2="1350.0" y2="20.5"/><line x1="1345.9" y1="16.4" x2="1344.2" y2="18.1"/><line x1="1344.2" y1="12.3" x2="1341.8" y2="12.3"/><line x1="1345.9" y1="8.2" x2="1344.2" y2="6.5"/><line x1="1354.1" y1="8.2" x2="1355.8" y2="6.5"/></g>
<rect x="1347.4" y="3" width="5.200" height="8" fill="#4b4a44"/><rect x="1349" y="3.600" width="2" height="8.400"/>
</g></svg>
<span class="ptx" style="left:1210px;letter-spacing:-0.276px">2:52 PM</span><span class="ptx" style="left:1293px;letter-spacing:0.021px">kunal</span></div>
<svg style="position:absolute;left:518px;top:543px" width="18" height="24" viewBox="0 0 18 24"><path d="M2.500 2 v17 l3.900-3.600 l2.300 5 q1.500 .6 2.500-1.100 l-2.300-4.900 h5.200z" fill="#fff" stroke="#0a0a0a" stroke-width="1.350" stroke-linejoin="round"/></svg>
</body></html>
